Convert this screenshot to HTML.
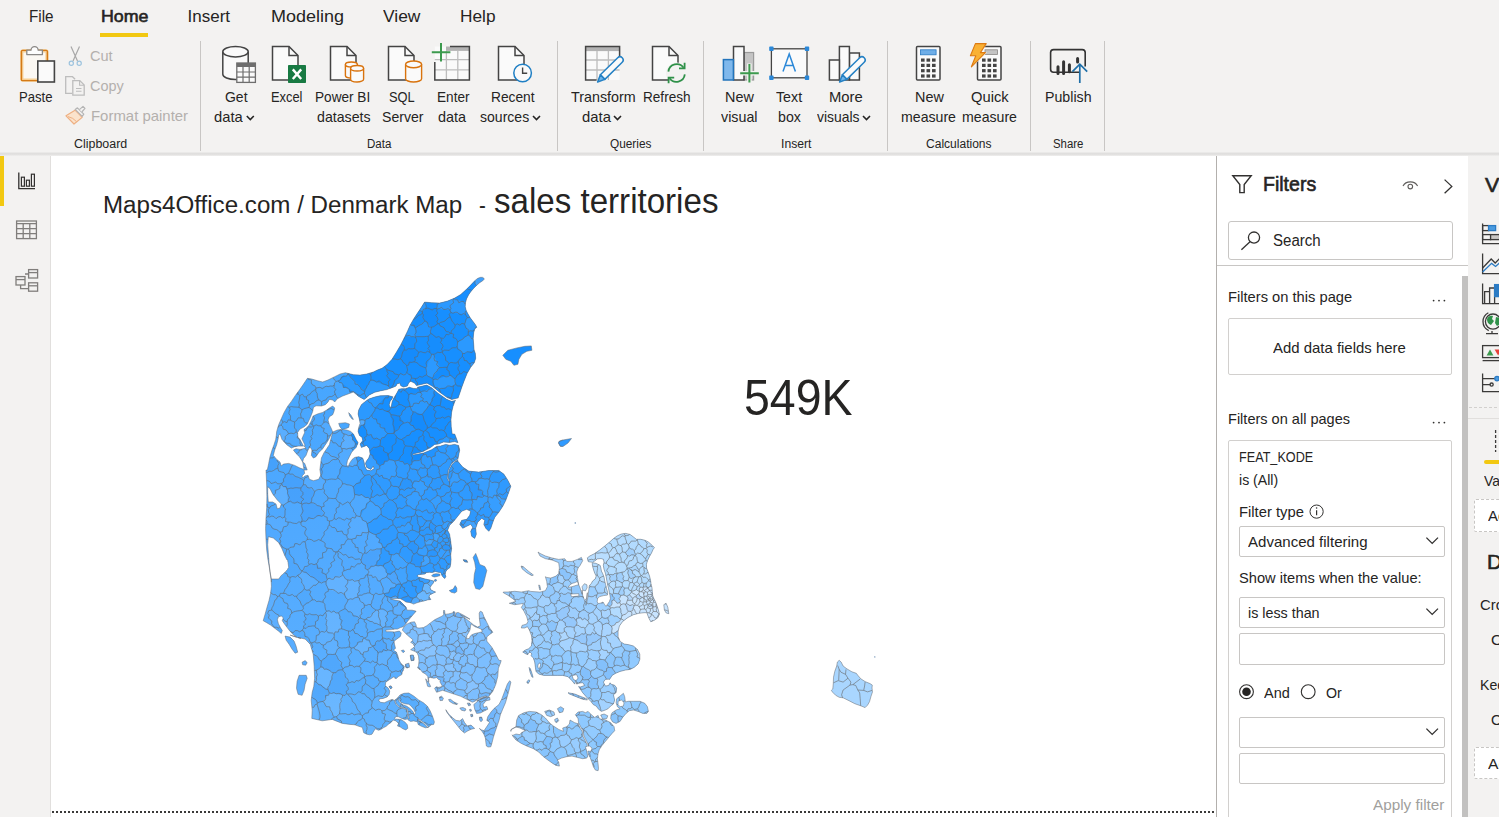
<!DOCTYPE html>
<html lang="en"><head><meta charset="utf-8"><title>Power BI Desktop - Denmark Map</title>
<style>
html,body{margin:0;padding:0}
body{width:1499px;height:817px;overflow:hidden;position:relative;background:#f3f2f1;font-family:"Liberation Sans",sans-serif;color:#252423}
.t{position:absolute;white-space:pre;transform-origin:0 0;display:block}
.abs{position:absolute}
svg{position:absolute;left:0;top:0;overflow:visible}
.box{position:absolute;box-sizing:border-box;background:#fff;border:1px solid #c8c6c4;border-radius:2px}
</style></head><body>

<div class="abs" id="ribbon" style="left:0;top:0;width:1499px;height:153px;background:#f3f2f1"></div>
<div class="abs" style="left:0;top:152px;width:1499px;height:4px;background:linear-gradient(#efeeed,#dddcdb 45%,#e6e5e4 75%,#f1f0ef)"></div>
<div class="abs" style="left:100px;top:33px;width:48px;height:4px;background:#f2c811"></div>
<div class="abs" style="left:200px;top:41px;width:1px;height:110px;background:#c8c6c4"></div>
<div class="abs" style="left:557px;top:41px;width:1px;height:110px;background:#c8c6c4"></div>
<div class="abs" style="left:703px;top:41px;width:1px;height:110px;background:#c8c6c4"></div>
<div class="abs" style="left:887px;top:41px;width:1px;height:110px;background:#c8c6c4"></div>
<div class="abs" style="left:1030px;top:41px;width:1px;height:110px;background:#c8c6c4"></div>
<div class="abs" style="left:1104px;top:41px;width:1px;height:110px;background:#c8c6c4"></div>
<span class="t" style="left:28.50px;top:6px;font-size:17px;line-height:22px;color:#252423;transform:scaleX(0.8950);">File</span>
<span class="t" style="left:100.50px;top:6px;font-size:17px;line-height:22px;color:#252423;-webkit-text-stroke:0.6px currentColor;transform:scaleX(1.0468);">Home</span>
<span class="t" style="left:187.50px;top:6px;font-size:17px;line-height:22px;color:#252423;transform:scaleX(1.0000);">Insert</span>
<span class="t" style="left:270.50px;top:6px;font-size:17px;line-height:22px;color:#252423;transform:scaleX(1.0580);">Modeling</span>
<span class="t" style="left:383.00px;top:6px;font-size:17px;line-height:22px;color:#252423;transform:scaleX(1.0239);">View</span>
<span class="t" style="left:459.50px;top:6px;font-size:17px;line-height:22px;color:#252423;transform:scaleX(1.0161);">Help</span>
<span class="t" style="left:18.60px;top:88px;font-size:14.3px;line-height:19px;color:#252423;transform:scaleX(0.9166);">Paste</span>
<span class="t" style="left:224.60px;top:88px;font-size:14.3px;line-height:19px;color:#252423;transform:scaleX(0.9766);">Get</span>
<span class="t" style="left:214.40px;top:108px;font-size:14.3px;line-height:19px;color:#252423;transform:scaleX(1.0306);">data</span>
<span class="t" style="left:270.60px;top:88px;font-size:14.3px;line-height:19px;color:#252423;transform:scaleX(0.9004);">Excel</span>
<span class="t" style="left:314.60px;top:88px;font-size:14.3px;line-height:19px;color:#252423;transform:scaleX(0.9514);">Power BI</span>
<span class="t" style="left:317.40px;top:108px;font-size:14.3px;line-height:19px;color:#252423;transform:scaleX(0.9912);">datasets</span>
<span class="t" style="left:389.40px;top:88px;font-size:14.3px;line-height:19px;color:#252423;transform:scaleX(0.8982);">SQL</span>
<span class="t" style="left:381.60px;top:108px;font-size:14.3px;line-height:19px;color:#252423;transform:scaleX(0.9857);">Server</span>
<span class="t" style="left:436.60px;top:88px;font-size:14.3px;line-height:19px;color:#252423;transform:scaleX(0.9512);">Enter</span>
<span class="t" style="left:438.40px;top:108px;font-size:14.3px;line-height:19px;color:#252423;transform:scaleX(1.0090);">data</span>
<span class="t" style="left:490.60px;top:88px;font-size:14.3px;line-height:19px;color:#252423;transform:scaleX(0.9618);">Recent</span>
<span class="t" style="left:480.40px;top:108px;font-size:14.3px;line-height:19px;color:#252423;transform:scaleX(0.9825);">sources</span>
<span class="t" style="left:571.40px;top:88px;font-size:14.3px;line-height:19px;color:#252423;transform:scaleX(1.0004);">Transform</span>
<span class="t" style="left:582.20px;top:108px;font-size:14.3px;line-height:19px;color:#252423;transform:scaleX(1.0378);">data</span>
<span class="t" style="left:642.60px;top:88px;font-size:14.3px;line-height:19px;color:#252423;transform:scaleX(0.9504);">Refresh</span>
<span class="t" style="left:724.60px;top:88px;font-size:14.3px;line-height:19px;color:#252423;transform:scaleX(1.0083);">New</span>
<span class="t" style="left:720.60px;top:108px;font-size:14.3px;line-height:19px;color:#252423;transform:scaleX(0.9990);">visual</span>
<span class="t" style="left:776.40px;top:88px;font-size:14.3px;line-height:19px;color:#252423;transform:scaleX(0.9952);">Text</span>
<span class="t" style="left:777.60px;top:108px;font-size:14.3px;line-height:19px;color:#252423;transform:scaleX(0.9913);">box</span>
<span class="t" style="left:828.60px;top:88px;font-size:14.3px;line-height:19px;color:#252423;transform:scaleX(1.0358);">More</span>
<span class="t" style="left:817.00px;top:108px;font-size:14.3px;line-height:19px;color:#252423;transform:scaleX(0.9733);">visuals</span>
<span class="t" style="left:914.60px;top:88px;font-size:14.3px;line-height:19px;color:#252423;transform:scaleX(1.0083);">New</span>
<span class="t" style="left:901.20px;top:108px;font-size:14.3px;line-height:19px;color:#252423;transform:scaleX(0.9885);">measure</span>
<span class="t" style="left:971.00px;top:88px;font-size:14.3px;line-height:19px;color:#252423;transform:scaleX(1.0301);">Quick</span>
<span class="t" style="left:962.40px;top:108px;font-size:14.3px;line-height:19px;color:#252423;transform:scaleX(0.9885);">measure</span>
<span class="t" style="left:1044.60px;top:88px;font-size:14.3px;line-height:19px;color:#252423;transform:scaleX(0.9925);">Publish</span>
<span class="t" style="left:90.40px;top:47px;font-size:14.3px;line-height:19px;color:#b3b0ad;transform:scaleX(1.0186);">Cut</span>
<span class="t" style="left:90.40px;top:77px;font-size:14.3px;line-height:19px;color:#b3b0ad;transform:scaleX(1.0105);">Copy</span>
<span class="t" style="left:90.60px;top:107px;font-size:14.3px;line-height:19px;color:#b3b0ad;transform:scaleX(1.0444);">Format painter</span>
<span class="t" style="left:73.60px;top:136px;font-size:12px;line-height:16px;color:#252423;transform:scaleX(1.0355);">Clipboard</span>
<span class="t" style="left:367.40px;top:136px;font-size:12px;line-height:16px;color:#252423;transform:scaleX(0.9616);">Data</span>
<span class="t" style="left:610.00px;top:136px;font-size:12px;line-height:16px;color:#252423;transform:scaleX(0.9857);">Queries</span>
<span class="t" style="left:780.60px;top:136px;font-size:12px;line-height:16px;color:#252423;transform:scaleX(1.0133);">Insert</span>
<span class="t" style="left:926.40px;top:136px;font-size:12px;line-height:16px;color:#252423;transform:scaleX(1.0034);">Calculations</span>
<span class="t" style="left:1052.60px;top:136px;font-size:12px;line-height:16px;color:#252423;transform:scaleX(0.9500);">Share</span>
<svg width="1499" height="160" viewBox="0 0 1499 160"><rect x="21.8" y="50.8" width="25.2" height="29.4" rx="1.2" fill="#fbf8f3" stroke="#f7cf94" stroke-width="3.2"/><rect x="21.4" y="50.4" width="26" height="30.2" rx="1.2" fill="none" stroke="#d47a17" stroke-width="1.4"/><path d="M26.8 54.6v-4.4h4.2a3.6 3.6 0 0 1 7.2 0h4.2v4.4z" fill="#fdfdfd" stroke="#8a8886" stroke-width="1.3" stroke-linejoin="round"/><rect x="37.8" y="61" width="16.6" height="21" fill="#fafafa" stroke="#444444" stroke-width="1.6"/><path d="M71 46.5L77.5 61M79.5 46.5L73 61" stroke="#a8a8a8" stroke-width="1.2" fill="none"/><circle cx="71.3" cy="63.3" r="2.1" fill="none" stroke="#9cc3de" stroke-width="1.2"/><circle cx="79.2" cy="63.3" r="2.1" fill="none" stroke="#9cc3de" stroke-width="1.2"/><path d="M72 93.3h-6.3v-16.6h6.8l2.6 2.6" fill="none" stroke="#bdbdbd" stroke-width="1.3"/><path d="M72.8 80.6h7l4.4 4.4v10.2h-11.4z" fill="#f3f2f1" stroke="#bdbdbd" stroke-width="1.3"/><path d="M79.6 80.8v4.4h4.4M76 88.5h5.5M76 91.3h5.5" fill="none" stroke="#bdbdbd" stroke-width="1.1"/><path d="M66 115.8l9-5.6l7.2 7.2l-8.2 6.6z" fill="#fbe3cc" stroke="#eeb083" stroke-width="1.2" stroke-linejoin="round"/><path d="M68 116.6q5 1 8.5 5" fill="none" stroke="#eeb083" stroke-width="1"/><path d="M75.2 109.4l2.2-1.6l6.4 6.4l-1.6 2.2z" fill="#f3f2f1" stroke="#b5b5b5" stroke-width="1.2" stroke-linejoin="round"/><path d="M79.4 109.6l3.6-3.2l2 2l-3.2 3.6" fill="#f3f2f1" stroke="#b5b5b5" stroke-width="1.2" stroke-linejoin="round"/><path d="M222.8 51.7v22.6a12.699999999999989 5.2 0 0 0 25.399999999999977 0v-22.6" fill="#fafafa" stroke="#444444" stroke-width="1.5"/><ellipse cx="235.5" cy="51.7" rx="12.699999999999989" ry="5.2" fill="#fafafa" stroke="#444444" stroke-width="1.5"/><rect x="236.8" y="63" width="18.6" height="19.4" fill="#fafafa" stroke="#6e6e6e" stroke-width="1.3"/><rect x="236.8" y="63" width="18.6" height="4" fill="#6e6e6e"/><path d="M243 67v15.4M249.2 67v15.4M236.8 72h18.6M236.8 77.2h18.6" stroke="#6e6e6e" stroke-width="1.2" fill="none"/><path d="M272.5 46.5h16.5l9 9v24.5h-25.5z" fill="#fafafa" stroke="#444444" stroke-width="1.5" stroke-linejoin="miter"/><path d="M289.0 46.5v9h9" fill="none" stroke="#444444" stroke-width="1.5"/><rect x="288" y="65" width="18" height="18" rx="0.8" fill="#187a43"/><path d="M292.8 69.4l8.4 9.6M301.2 69.4l-8.4 9.6" stroke="#fff" stroke-width="2.4" fill="none"/><path d="M330.5 46.5h16.5l9 9v24.5h-25.5z" fill="#fafafa" stroke="#444444" stroke-width="1.5" stroke-linejoin="miter"/><path d="M347.0 46.5v9h9" fill="none" stroke="#444444" stroke-width="1.5"/><path d="M345.4 64.52v10.96a6.0 2.52 0 0 0 12.0 0v-10.96" fill="#fafafa" stroke="#d9730d" stroke-width="1.4"/><ellipse cx="351.4" cy="64.52" rx="6.0" ry="2.52" fill="#fafafa" stroke="#d9730d" stroke-width="1.4"/><path d="M350.6 68.23v11.04a6.5 2.73 0 0 0 13.0 0v-11.04" fill="#fafafa" stroke="#d9730d" stroke-width="1.4"/><ellipse cx="357.1" cy="68.23" rx="6.5" ry="2.73" fill="#fafafa" stroke="#d9730d" stroke-width="1.4"/><path d="M388.5 46.5h16.5l9 9v24.5h-25.5z" fill="#fafafa" stroke="#444444" stroke-width="1.5" stroke-linejoin="miter"/><path d="M405.0 46.5v9h9" fill="none" stroke="#444444" stroke-width="1.5"/><path d="M405.6 64.36v14.280000000000001a8.0 3.36 0 0 0 16.0 0v-14.280000000000001" fill="#fafafa" stroke="#d9730d" stroke-width="1.4"/><ellipse cx="413.6" cy="64.36" rx="8.0" ry="3.36" fill="#fafafa" stroke="#d9730d" stroke-width="1.4"/><rect x="434.8" y="46.5" width="34.6" height="33.5" fill="#fafafa" stroke="none"/><rect x="446" y="46.5" width="23.4" height="4.4" fill="#b3b3b3"/><path d="M446.4 51v29M457.8 51v29M434.8 59.6h34.6M434.8 69.8h34.6" stroke="#bdbdbd" stroke-width="1.3" fill="none"/><path d="M450 46.5h19.4v33.5h-34.6v-18" fill="none" stroke="#444444" stroke-width="1.5"/><path d="M441 43v18.6M431.8 52.2h18.6" stroke="#3c9a4e" stroke-width="2" fill="none"/><path d="M498.5 46.5h16.5l9 9v24.5h-25.5z" fill="#fafafa" stroke="#444444" stroke-width="1.5" stroke-linejoin="miter"/><path d="M515.0 46.5v9h9" fill="none" stroke="#444444" stroke-width="1.5"/><circle cx="522.6" cy="73" r="8.8" fill="#fafafa" stroke="#1f7fc4" stroke-width="1.5"/><path d="M522.6 67.4v5.8h4.6" fill="none" stroke="#444444" stroke-width="1.4"/><rect x="585.6" y="46.5" width="34" height="33.5" fill="#fafafa"/><rect x="585.6" y="46.5" width="34" height="4.6" fill="#b3b3b3"/><path d="M597 51v29M608.4 51v29M585.6 60h34M585.6 70h34" stroke="#bdbdbd" stroke-width="1.3" fill="none"/><path d="M619.6 58v-11.500h-34v33.5h11" fill="none" stroke="#444444" stroke-width="1.5"/><path d="M600.35 74.81L617.73 57.72A3.2 3.2 0 0 1 622.22 62.28L604.84 79.37z" fill="#fafafa" stroke="#2581c4" stroke-width="1.5" stroke-linejoin="round"/><path d="M597.60 82.00L600.35 74.81L604.84 79.37z" fill="#6db3ea" stroke="#2581c4" stroke-width="1.5" stroke-linejoin="round"/><path d="M652.5 46.5h16.5l9 9v24.5h-25.5z" fill="#fafafa" stroke="#444444" stroke-width="1.5" stroke-linejoin="miter"/><path d="M669.0 46.5v9h9" fill="none" stroke="#444444" stroke-width="1.5"/><circle cx="676.6" cy="73" r="10.6" fill="#f3f2f1"/><path d="M668.4 71.600a8.4 8.4 0 0 1 15.2 -3.800" fill="none" stroke="#2f9149" stroke-width="1.8"/><path d="M684.8 74.400a8.400 8.400 0 0 1 -15.200 3.800" fill="none" stroke="#2f9149" stroke-width="1.8"/><path d="M684.600 62.800v5.600h-5.600" fill="none" stroke="#2f9149" stroke-width="1.8"/><path d="M668.600 83.200v-5.600h5.600" fill="none" stroke="#2f9149" stroke-width="1.8"/><rect x="744" y="52.500" width="9.600" height="27.500" fill="#c4c4c4" stroke="#9a9a9a" stroke-width="1.2"/><rect x="733.500" y="46.500" width="10.500" height="33.500" fill="#fafafa" stroke="#444444" stroke-width="1.5"/><rect x="723.400" y="59.600" width="10" height="20.400" fill="#7fb8ec" stroke="#2374bb" stroke-width="1.5"/><path d="M749.400 63.600v19.200M739.800 73.200h19.200" stroke="#f3f2f1" stroke-width="4.600" fill="none"/><path d="M749.400 64v18.600M740.200 73.200h18.600" stroke="#3c9a4e" stroke-width="2" fill="none"/><rect x="771.400" y="48.800" width="35.600" height="29" fill="#fafafa" stroke="#444444" stroke-width="1.300"/><rect x="769.1999999999999" y="46.599999999999994" width="4.400" height="4.400" rx="0.800" fill="#2b88d8"/><rect x="804.8" y="46.599999999999994" width="4.400" height="4.400" rx="0.800" fill="#2b88d8"/><rect x="769.1999999999999" y="75.6" width="4.400" height="4.400" rx="0.800" fill="#2b88d8"/><rect x="804.8" y="75.6" width="4.400" height="4.400" rx="0.800" fill="#2b88d8"/><path d="M783 71.400l6.200-17.400l6.200 17.400M785.200 65.600h8" fill="none" stroke="#2b88d8" stroke-width="1.500"/><rect x="849.400" y="53" width="10" height="27" fill="#fafafa" stroke="#444444" stroke-width="1.5"/><rect x="839.400" y="46.500" width="10" height="33.500" fill="#fafafa" stroke="#444444" stroke-width="1.5"/><rect x="829.400" y="60" width="10" height="20" fill="#fafafa" stroke="#444444" stroke-width="1.5"/><path d="M842.35 74.81L859.73 57.72A3.2 3.2 0 0 1 864.22 62.28L846.84 79.37z" fill="#fafafa" stroke="#2581c4" stroke-width="1.5" stroke-linejoin="round"/><path d="M839.60 82.00L842.35 74.81L846.84 79.37z" fill="#6db3ea" stroke="#2581c4" stroke-width="1.5" stroke-linejoin="round"/><rect x="916.5" y="46.5" width="23.5" height="33.5" rx="1" fill="#fafafa" stroke="#444444" stroke-width="1.5"/><rect x="920.500" y="49.800" width="15.600" height="5" fill="#6eaee8" stroke="#2b7bc4" stroke-width="0.800"/><rect x="921.0" y="58.5" width="3.6" height="3.2" fill="#444444"/><rect x="926.5" y="58.5" width="3.6" height="3.2" fill="#444444"/><rect x="932.0" y="58.5" width="3.6" height="3.2" fill="#444444"/><rect x="921.0" y="63.8" width="3.6" height="3.2" fill="#444444"/><rect x="926.5" y="63.8" width="3.6" height="3.2" fill="#444444"/><rect x="932.0" y="63.8" width="3.6" height="3.2" fill="#444444"/><rect x="921.0" y="69.1" width="3.6" height="3.2" fill="#444444"/><rect x="926.5" y="69.1" width="3.6" height="3.2" fill="#444444"/><rect x="932.0" y="69.1" width="3.6" height="3.2" fill="#444444"/><rect x="921.0" y="74.4" width="3.6" height="3.2" fill="#444444"/><rect x="926.5" y="74.4" width="3.6" height="3.2" fill="#444444"/><rect x="932.0" y="74.4" width="3.6" height="3.2" fill="#444444"/><rect x="977.5" y="46.5" width="23.5" height="33.5" rx="1" fill="#fafafa" stroke="#444444" stroke-width="1.5"/><rect x="985" y="49.800" width="12.600" height="4.600" fill="#c4c4c4" stroke="#8a8886" stroke-width="0.800"/><rect x="982.0" y="58.5" width="3.6" height="3.2" fill="#444444"/><rect x="987.5" y="58.5" width="3.6" height="3.2" fill="#444444"/><rect x="993.0" y="58.5" width="3.6" height="3.2" fill="#444444"/><rect x="982.0" y="63.8" width="3.6" height="3.2" fill="#444444"/><rect x="987.5" y="63.8" width="3.6" height="3.2" fill="#444444"/><rect x="993.0" y="63.8" width="3.6" height="3.2" fill="#444444"/><rect x="982.0" y="69.1" width="3.6" height="3.2" fill="#444444"/><rect x="987.5" y="69.1" width="3.6" height="3.2" fill="#444444"/><rect x="993.0" y="69.1" width="3.6" height="3.2" fill="#444444"/><rect x="982.0" y="74.4" width="3.6" height="3.2" fill="#444444"/><rect x="987.5" y="74.4" width="3.6" height="3.2" fill="#444444"/><rect x="993.0" y="74.4" width="3.6" height="3.2" fill="#444444"/><path d="M974 42h14l-6.500 10.500h5.500l-17 16.500l5-12.500h-6.500z" fill="#f3f2f1"/><path d="M975.400 43.600h10.800l-5.800 9h5l-14 14.200l4.400-11h-5.400z" fill="#f9b134" stroke="#dd7a12" stroke-width="1.100" stroke-linejoin="round"/><path d="M1079 72.200h-25.400a3 3 0 0 1 -3 -3v-16.600a3 3 0 0 1 3 -3h28.600a3 3 0 0 1 3 3v14" fill="none" stroke="#333" stroke-width="1.600"/><path d="M1058 66.800v6.600M1063.600 61.800v11.800M1069.400 64.800v7M1077.600 58.400v3.600" stroke="#333" stroke-width="3" stroke-linecap="round" fill="none"/><path d="M1079.800 83v-18.600M1072.400 71.600l7.400 -7.400l7.400 7.400" fill="none" stroke="#1f6fa8" stroke-width="1.700"/><path d="M246.8 116l3.5 3.5l3.5 -3.5" fill="none" stroke="#252423" stroke-width="1.6"/><path d="M533 116l3.5 3.5l3.5 -3.5" fill="none" stroke="#252423" stroke-width="1.6"/><path d="M614 116l3.5 3.5l3.5 -3.5" fill="none" stroke="#252423" stroke-width="1.6"/><path d="M863 116l3.5 3.5l3.5 -3.5" fill="none" stroke="#252423" stroke-width="1.6"/></svg>
<div class="abs" style="left:0;top:156px;width:50px;height:661px;background:#f3f2f1;border-right:1px solid #e1dfdd"></div>
<div class="abs" style="left:0;top:156px;width:4px;height:50px;background:#f2c811"></div>
<svg width="60" height="320" viewBox="0 0 60 320">
<path d="M18.800 172.600v16h16.200" fill="none" stroke="#323130" stroke-width="1.300"/>
<rect x="21.400" y="177.200" width="3" height="9" fill="none" stroke="#323130" stroke-width="1.200"/>
<rect x="26.400" y="180.200" width="3" height="6" fill="none" stroke="#323130" stroke-width="1.200"/>
<rect x="31.400" y="174.200" width="3" height="12" fill="none" stroke="#323130" stroke-width="1.200"/>
<g fill="none" stroke="#807e7c" stroke-width="1.300">
<rect x="16.600" y="221" width="19.800" height="17.600"/><path d="M16.600 223.600h19.800M16.600 228.600h19.800M16.600 233.600h19.800M23.200 223.600v15M29.800 223.600v15"/>
<rect x="28.600" y="269.600" width="9" height="8.400"/><path d="M28.600 272.600h9"/>
<rect x="16" y="276.600" width="9" height="8.400"/><path d="M16 279.600h9"/>
<rect x="28.600" y="282.800" width="9" height="8.400"/><path d="M28.600 285.800h9"/>
<path d="M25 274h3.600M20.600 285v3.600h8"/>
</g></svg>
<div class="abs" id="canvas" style="left:51px;top:156px;width:1165px;height:661px;background:#fff"></div>
<span class="t" style="left:103.40px;top:190px;font-size:23.5px;line-height:31px;color:#252423;transform:scaleX(1.0276);">Maps4Office.com / Denmark Map</span>
<span class="t" style="left:478.80px;top:190px;font-size:23.5px;line-height:31px;color:#252423;transform:scaleX(0.8704);">-</span>
<span class="t" style="left:494.00px;top:179px;font-size:34.5px;line-height:45px;color:#252423;transform:scaleX(0.9595);">sales territories</span>
<span class="t" style="left:743.80px;top:366px;font-size:50px;line-height:65px;color:#252423;transform:scaleX(0.9285);">549K</span>
<div class="abs" style="left:52px;top:811px;width:1163px;height:2px;background:repeating-linear-gradient(90deg,#3b3a39 0,#3b3a39 2px,transparent 2px,transparent 4px)"></div>
<svg id="map" width="1499" height="817" viewBox="0 0 1499 817">
<defs><linearGradient id="gj" x1="0" y1="370" x2="0" y2="735" gradientUnits="userSpaceOnUse"><stop offset="0" stop-color="#46A6FF"/><stop offset="0.45" stop-color="#50A9FF"/><stop offset="1" stop-color="#5EB1FF"/></linearGradient></defs>
<path d="M290.1 635.1L296.1 637.1L296.8 637.3L297.0 637.4L300.9 638.4L298.1 637.5L305.1 639.1L310.2 644.2L313.2 654.2L314.2 666.2L314.6 678.3L313.8 686.3L312.2 692.3L311.2 700.3L312.2 710.4L311.8 718.4L322.2 720.8L332.2 719.4L342.3 723.4L350.0 724.4L354.9 724.8L358.8 726.3L362.2 727.3L362.7 728.8L363.7 732.7L366.7 734.2L369.6 734.8L372.0 734.2L374.0 730.7L375.5 728.8L378.4 730.2L380.4 729.7L383.3 727.8L386.2 726.3L388.2 724.4L391.1 722.4L393.1 720.0L396.0 720.9L398.5 723.4L397.5 726.0L400.0 726.8L402.9 728.8L405.8 729.9L407.8 728.3L407.3 724.8L404.8 721.9L400.9 719.5L396.5 719.1L395.1 719.5L394.6 717.5L396.2 717.0L396.5 716.5L397.4 716.7L398.0 716.5L398.4 716.9L399.0 717.0L401.9 718.5L404.8 719.5L407.3 719.0L408.8 720.4L410.7 721.4L413.7 720.9L417.6 721.9L418.1 724.4L421.5 726.3L425.4 727.8L428.4 727.3L431.3 724.8L433.7 724.4L434.4 721.9L432.8 717.0L430.3 711.1L427.4 706.2L423.5 702.8L418.6 699.9L413.7 696.0L408.8 693.0L403.9 693.3L400.0 695.0L397.5 697.9L394.8 700.2L394.8 700.2L394.9 700.2L394.9 700.2L395.0 700.2L395.0 700.2L395.0 700.2L395.1 700.2L395.1 700.3L395.1 700.3L395.2 700.3L395.2 700.3L395.2 700.4L395.2 700.4L395.3 700.4L395.3 700.5L396.3 703.6L399.2 706.4L403.5 707.8L407.4 708.8L407.4 708.8L407.5 708.8L407.5 708.9L407.5 708.9L407.6 708.9L407.6 708.9L407.6 709.0L407.6 709.0L407.7 709.0L407.7 709.1L407.7 709.1L407.7 709.2L408.2 714.0L409.2 718.4L409.2 718.5L409.2 718.5L409.2 718.5L409.2 718.6L409.2 718.6L409.2 718.6L409.2 718.7L409.1 718.7L409.1 718.7L409.1 718.8L409.1 718.8L409.0 718.8L409.0 718.8L409.0 718.9L408.9 718.9L408.9 718.9L408.8 718.9L408.8 718.9L408.8 718.9L408.7 718.9L408.7 718.9L408.7 718.9L408.6 718.9L408.6 718.8L408.6 718.8L408.5 718.8L408.5 718.8L408.5 718.7L408.5 718.7L408.4 718.7L408.4 718.6L408.4 718.6L407.4 714.2L407.4 714.1L406.9 709.5L403.3 708.6L403.3 708.6L398.9 707.1L398.8 707.1L398.8 707.0L398.8 707.0L398.7 707.0L395.7 704.1L395.7 704.1L395.7 704.0L395.7 704.0L395.6 704.0L395.6 703.9L394.5 700.7L394.5 700.7L394.5 700.7L394.5 700.6L394.5 700.6L394.5 700.5L394.5 700.5L394.5 700.5L394.5 700.4L394.6 700.4L394.6 700.4L392.1 699.4L388.2 700.9L384.3 702.8L380.4 702.3L378.9 700.6L379.4 698.9L383.3 698.4L387.2 696.9L389.2 694.5L389.7 691.1L388.2 688.1L385.9 686.2L384.7 687.4L385.9 686.2L385.3 685.7L385.7 682.2L389.2 679.8L389.3 679.8L389.6 679.5L391.3 678.5L393.1 677.3L393.1 677.3L393.5 677.1L395.4 677.5L394.7 678.1L396.0 678.8L398.2 676.7L398.4 676.6L401.8 674.6L402.2 672.3L403.4 670.0L403.0 670.4L403.8 668.8L404.3 666.3L401.3 663.9L398.9 660.0L397.9 656.0L396.4 652.1L393.5 650.2L395.5 648.2L394.5 644.3L394.0 641.3L396.4 639.4L400.4 636.4L401.3 633.0L399.4 631.1L394.5 632.0L391.5 631.7L386.2 631.7L385.7 630.1L391.5 629.6L395.0 629.1L397.4 629.1L400.4 627.6L403.3 626.7L403.6 626.2L405.6 624.2L407.6 621.2L410.1 618.2L413.1 614.7L416.1 611.2L412.1 610.2L407.1 610.2L406.1 607.2L403.1 604.1L400.1 601.1L395.0 600.1L390.5 599.1L395.0 598.6L400.1 598.6L403.1 600.1L406.1 602.1L410.1 602.6L413.6 604.1L416.9 602.8L420.6 601.7L424.2 600.9L427.9 599.8L430.9 599.5L429.8 598.0L429.0 596.1L430.1 594.7L433.1 593.2L435.6 592.1L433.1 591.0L430.5 589.5L430.1 587.3L431.6 585.1L433.4 582.9L433.8 581.1L430.1 580.0L427.9 579.6L425.0 578.9L422.0 578.1L418.4 577.0L416.9 575.9L418.4 574.8L422.0 574.3L425.0 574.0L426.5 572.6L429.4 572.3L432.3 572.6L435.3 571.5L438.2 572.3L440.8 572.6L441.5 574.8L443.0 577.0L444.8 578.5L445.9 576.3L445.2 574.8L445.6 571.9L447.0 569.7L450.0 567.5L450.7 563.8L451.1 559.4L450.7 555.0L451.6 548.4L450.6 540.4L449.6 534.3L447.6 530.3L449.6 525.3L453.7 521.3L457.7 516.3L461.7 511.3L466.7 509.3L470.7 511.3L469.7 515.3L466.7 519.3L461.7 520.3L459.7 524.3L462.7 528.3L466.7 526.3L470.7 524.3L472.7 527.3L470.7 531.3L471.7 536.3L474.7 538.4L476.3 534.3L475.7 528.3L477.7 522.3L481.7 518.3L484.8 520.3L483.8 524.3L485.8 528.3L488.8 531.3L490.8 528.3L492.8 522.3L494.8 517.3L498.8 512.3L502.8 506.2L505.8 500.2L508.8 492.2L510.8 486.2L507.8 480.2L503.8 474.1L498.8 470.5L488.8 470.5L478.7 472.1L468.7 471.1L462.7 467.1L457.7 461.1L457.9 459.5L452.0 464.4L449.0 470.2L448.1 478.1L449.6 481.0L449.6 481.0L449.6 481.1L449.6 481.1L449.6 481.2L449.6 481.2L449.6 481.2L449.6 481.3L449.6 481.3L449.6 481.4L449.6 481.4L449.6 481.5L449.5 481.5L449.5 481.5L449.5 481.5L449.4 481.6L449.4 481.6L449.4 481.6L449.3 481.6L449.3 481.6L449.2 481.6L449.2 481.6L449.2 481.6L449.1 481.6L449.1 481.6L449.0 481.6L449.0 481.6L448.9 481.6L448.9 481.5L448.9 481.5L448.9 481.5L448.8 481.4L448.8 481.4L447.2 478.4L447.2 478.4L447.2 478.3L447.2 478.3L447.2 478.2L447.2 478.2L447.2 478.1L448.2 470.0L448.2 470.0L448.2 469.9L448.2 469.9L451.2 463.9L451.2 463.9L451.2 463.8L451.3 463.8L451.3 463.8L457.4 458.8L457.5 458.7L457.5 458.7L457.5 458.7L457.6 458.7L457.6 458.7L457.7 458.7L457.7 458.7L457.7 458.7L457.8 458.7L457.8 458.7L457.9 458.7L457.9 458.7L458.0 458.7L458.0 458.8L458.0 458.8L458.0 458.8L458.3 457.1L459.7 450.1L458.6 445.5L454.7 444.4L449.6 445.2L445.6 444.4L440.6 446.0L436.6 446.4L431.6 449.7L423.5 453.1L413.5 454.9L412.5 454.1L422.5 451.7L430.6 447.6L434.6 444.4L438.6 444.0L443.6 442.0L449.6 442.4L454.7 441.6L457.9 442.7L457.7 442.0L454.7 434.0L452.2 434.0L451.2 426.5L451.0 419.5L451.6 412.5L453.0 406.5L455.1 400.8L455.7 400.4L451.8 401.3L451.7 401.3L451.6 401.3L451.5 401.3L451.4 401.3L451.3 401.3L451.3 401.2L446.5 399.2L446.4 399.2L446.3 399.1L438.3 393.4L438.2 393.4L431.6 387.8L426.7 385.1L420.3 386.6L420.3 386.6L417.4 387.2L417.4 388.7L413.4 388.4L409.4 387.3L405.4 388.7L401.4 388.7L398.8 389.3L397.4 392.0L395.4 395.4L393.4 398.7L392.1 402.0L391.4 406.0L390.1 408.0L389.2 404.7L390.1 401.4L392.1 398.7L392.8 396.7L388.1 395.6L380.1 395.8L374.7 397.0L369.4 398.8L366.7 400.4L364.7 402.0L361.4 404.7L358.7 410.0L358.1 414.0L359.4 419.4L360.1 423.4L358.7 427.4L358.1 431.4L359.4 435.4L362.1 437.4L362.7 440.7L360.1 444.0L361.4 447.4L366.7 445.4L369.4 448.7L370.1 454.1L368.7 458.1L366.7 460.7L365.4 463.4L366.7 467.4L370.7 469.4L373.4 466.1L374.1 468.7L370.7 470.7L366.7 470.1L364.7 466.1L364.1 462.1L362.7 458.1L358.7 456.7L354.7 457.4L352.1 459.4L349.4 463.4L348.1 467.4L346.7 464.7L347.4 460.7L349.4 456.7L351.4 452.7L353.4 450.1L356.1 447.4L358.1 442.7L356.1 439.4L353.4 434.0L350.7 431.4L346.7 430.0L341.4 429.4L337.4 430.0L332.7 432.0L329.4 444.7L326.7 448.7L324.0 452.7L321.4 458.1L320.7 463.4L320.0 468.7L319.9 470.0L320.0 470.0L320.7 475.3L318.7 479.3L313.4 480.7L309.4 479.3L308.0 475.3L304.7 476.0L302.7 478.0L302.0 476.0L304.7 473.3L304.0 470.0L307.2 470.0L306.7 468.7L304.7 463.4L302.7 462.1L303.4 466.1L304.0 469.4L300.0 468.1L294.7 465.4L288.7 463.4L283.3 464.1L281.3 466.1L280.0 462.1L276.7 459.4L273.3 455.4L274.7 450.1L276.7 444.7L278.0 439.4L278.7 435.4L280.0 433.8L282.0 439.4L286.7 444.7L291.4 448.1L294.7 446.7L298.7 446.1L303.4 446.1L301.9 443.1L300.0 439.6L297.9 437.0L297.6 432.4L300.0 429.0L303.8 427.1L307.0 424.4L309.6 419.1L311.4 414.7L312.7 411.4L313.4 407.4L316.0 405.8L321.4 406.0L325.4 404.7L328.0 402.0L329.4 399.4L332.7 400.0L334.7 402.0L337.4 398.7L342.7 396.0L348.1 394.0L353.4 392.0L358.7 396.4L364.1 399.4L366.7 397.5L369.4 394.9L374.7 392.3L380.1 390.9L386.8 389.6L392.1 387.7L396.1 386.0L396.8 384.0L399.8 383.1L400.8 385.7L403.4 387.1L407.4 386.0L408.8 382.7L410.8 381.3L414.8 383.3L416.4 385.6L419.9 384.8L426.6 383.2L426.7 383.2L426.8 383.2L426.8 383.2L426.9 383.2L427.0 383.2L427.1 383.2L427.2 383.3L427.2 383.3L432.5 386.3L432.6 386.4L432.7 386.4L439.4 392.0L447.2 397.6L451.7 399.5L457.5 398.1L457.6 398.1L457.7 398.1L457.8 398.1L457.8 398.1L457.9 398.1L458.0 398.2L459.7 393.4L461.7 387.4L464.3 380.4L467.1 373.4L470.7 367.3L474.3 362.7L475.7 358.3L475.3 353.3L474.1 350.0L473.7 344.4L473.2 338.6L473.7 332.7L474.8 328.8L476.8 327.3L475.8 325.3L473.4 321.9L470.4 318.0L468.0 314.1L466.2 310.6L465.2 306.7L465.5 302.8L466.5 298.9L468.5 295.0L470.9 291.5L473.9 288.1L476.8 285.2L479.7 282.7L482.7 280.8L483.9 279.6L484.2 278.6L482.7 277.4L480.7 277.3L477.8 278.3L475.1 280.4L470.7 285.1L465.7 290.1L460.7 294.5L454.7 298.1L447.6 301.1L439.6 303.1L431.6 302.7L424.6 302.1L421.5 307.1L417.5 313.1L413.5 319.2L410.1 325.2L407.5 331.2L404.1 338.2L400.5 345.3L396.1 352.7L392.0 359.3L387.4 364.3L382.0 368.3L377.4 370.0L373.4 372.0L366.7 374.0L360.1 375.1L353.4 374.7L345.4 372.7L340.1 374.0L334.7 376.7L328.0 380.0L322.7 382.0L317.4 380.7L312.0 379.1L307.4 378.3L305.4 381.3L302.7 385.3L299.4 390.0L295.4 395.4L291.4 401.4L287.4 406.7L284.0 412.7L281.3 418.7L278.7 424.7L276.7 431.4L276.3 435.4L275.7 439.4L274.0 444.7L272.0 450.1L270.0 456.7L268.7 463.4L267.3 470.1L266.0 470.0L266.4 478.0L266.7 486.0L266.9 496.7L266.7 507.4L266.0 518.0L265.6 528.7L266.0 539.4L266.7 550.1L268.0 559.9L268.1 560.0L269.1 565.9L270.1 572.7L271.1 579.6L271.4 586.4L270.6 593.3L269.1 600.2L267.1 607.0L265.2 613.9L263.2 620.7L266.7 622.7L270.6 625.1L274.5 628.1L278.4 631.0L281.3 633.5L282.3 630.5L280.4 627.6L278.4 623.7L277.4 619.7L278.4 616.8L281.3 616.0L283.3 617.8L282.3 620.7L284.3 623.7L287.2 627.6L290.2 631.5L293.1 634.4L296.6 637.1ZM272.7 502.0L268.3 502.0L267.7 494.0L267.7 486.7L270.0 488.7L272.7 494.0L277.3 500.0L281.3 504.0L280.0 508.0L277.3 508.7L276.0 504.0ZM269.1 563.4L268.3 552.7L267.7 544.7L268.3 536.7L273.3 538.0L278.7 542.7L282.0 548.7L284.7 555.4L287.0 560.0L287.7 560.0L287.9 562.0L288.0 562.1L288.7 567.4L287.8 568.7L287.7 569.3L286.7 570.3L286.0 571.4L283.6 573.4L282.3 574.7L281.3 575.4L278.7 579.0L271.3 579.0L270.0 571.4ZM406.8 706.2L402.9 704.8L399.5 702.3L397.5 698.4L399.0 699.4L400.9 702.3L404.8 703.8L408.8 704.3L410.7 705.7L413.7 709.2L415.6 713.1L414.6 714.6L412.7 711.1L409.7 708.2ZM427.7 727.3L427.6 727.2L427.6 727.2L427.6 727.2L423.2 723.3L418.3 719.9L418.3 719.9L418.2 719.8L418.2 719.8L418.2 719.8L418.2 719.7L418.1 719.7L418.1 719.6L418.1 719.6L418.1 719.5L418.1 719.5L418.1 719.4L418.1 719.4L418.1 719.3L418.1 719.3L418.2 719.3L418.2 719.2L418.2 719.2L418.3 719.1L418.3 719.1L418.3 719.1L418.4 719.1L418.4 719.0L418.5 719.0L418.5 719.0L418.6 719.0L418.6 719.0L418.7 719.0L418.7 719.0L418.8 719.0L418.8 719.0L418.8 719.1L418.9 719.1L423.8 722.5L423.8 722.5L428.2 726.4L428.3 726.5L428.3 726.5L428.3 726.5L428.3 726.6L428.4 726.6L428.4 726.7L428.4 726.7L428.4 726.8L428.4 726.8L428.4 726.9L428.4 726.9L428.4 727.0L428.4 727.0L428.3 727.1L428.3 727.1L428.3 727.1L428.2 727.2L428.2 727.2L428.2 727.2L428.1 727.2L428.1 727.3L428.0 727.3L428.0 727.3L427.9 727.3L427.9 727.3L427.8 727.3L427.8 727.3L427.7 727.3ZM331.4 428.7L329.4 424.7L328.0 420.0L329.4 416.7L332.7 414.7L334.0 411.4L334.7 408.0L332.7 406.0L329.4 408.0L326.7 410.0L322.7 412.4L317.4 414.0L313.1 416.0L311.5 420.2L308.8 425.5L306.0 428.2L304.0 429.5L304.6 432.7L303.0 436.2L301.9 438.8L303.5 442.0L305.1 445.5L303.9 446.1L304.0 446.1L306.0 448.1L300.0 449.4L296.0 448.7L293.4 450.1L296.0 453.4L299.4 456.7L302.7 462.1L303.4 458.7L306.0 455.4L308.0 450.1L310.0 446.7L312.0 450.1L311.4 455.4L313.4 458.1L316.0 456.7L318.7 452.7L322.7 448.7L326.7 442.7L328.7 439.4L330.7 435.4L332.7 432.0Z" fill="url(#gj)" fill-rule="evenodd"/>
<path d="M429.2 581.9L427.3 583.0L424.1 583.4L424.0 583.4L424.0 583.4L424.0 583.4L424.0 583.4L424.0 583.4L424.0 583.4L424.0 583.4L424.0 583.4L424.0 583.4L423.9 583.5L423.9 583.5L423.9 583.5L423.2 585.9L422.3 588.2L422.3 588.3L422.3 588.3L422.3 588.3L422.3 590.8L420.1 592.3L417.6 593.6L417.6 593.6L417.6 593.6L417.6 593.7L417.5 593.7L417.5 593.7L417.5 593.7L417.5 593.7L416.1 597.0L416.1 597.0L416.1 597.0L416.1 597.0L416.1 597.0L416.1 597.0L416.1 597.0L416.1 597.1L416.1 597.1L416.1 597.1L416.1 597.1L416.1 597.1L416.1 597.1L416.1 597.1L416.1 597.1L418.0 598.4L419.5 600.1L419.5 600.2L419.5 600.2L419.5 600.2L419.5 600.2L419.5 600.2L419.5 600.2L419.5 600.2L419.6 600.2L419.6 600.2L419.6 600.2L421.6 600.0L423.1 601.1L424.2 600.9L427.9 599.8L430.9 599.5L429.8 598.0L429.0 596.1L430.1 594.7L433.1 593.2L435.6 592.1L433.1 591.0L430.5 589.5L430.1 587.3L431.6 585.1L433.4 582.9L433.8 581.1L430.1 580.0L429.2 579.8Z" fill="#5BB0FF" fill-rule="evenodd"/><path d="M347.6 373.9L346.4 376.0L343.5 375.9L343.5 375.9L343.5 376.0L343.5 376.0L343.4 376.0L343.4 376.0L341.3 377.1L341.3 377.1L341.3 377.1L341.3 377.2L341.3 377.2L341.3 377.2L341.3 377.2L341.3 377.2L340.2 379.7L338.1 380.8L338.1 380.8L338.1 380.8L338.1 380.8L338.1 380.8L338.1 380.9L338.1 380.9L338.0 380.9L338.0 380.9L338.0 380.9L338.0 380.9L338.0 380.9L338.0 381.0L338.0 381.0L338.0 381.0L338.0 381.0L338.1 381.0L338.1 381.0L338.1 381.0L339.4 382.6L339.4 382.6L339.4 382.6L339.4 382.7L339.4 382.7L339.5 382.7L339.5 382.7L339.5 382.7L341.6 383.0L342.7 384.7L343.2 387.5L343.2 387.5L343.3 387.5L343.3 387.5L343.3 387.5L343.3 387.6L343.3 387.6L343.3 387.6L343.3 387.6L343.3 387.6L343.3 387.6L343.3 387.6L343.4 387.6L343.4 387.6L343.4 387.6L345.8 387.6L347.7 388.3L349.1 389.7L349.7 392.3L349.7 392.3L349.7 392.3L349.7 392.3L349.7 392.3L349.7 392.3L349.7 392.4L349.7 392.4L349.7 392.4L349.7 392.4L349.8 392.4L349.8 392.4L349.8 392.4L349.8 392.4L349.8 392.4L349.8 392.4L349.8 392.4L349.9 392.4L352.8 391.6L354.6 392.5L356.2 393.6L357.5 394.7L356.7 394.8L358.7 396.4L364.1 399.4L366.7 397.5L369.4 394.9L374.7 392.3L380.1 390.9L386.8 389.6L392.1 387.7L396.1 386.0L396.8 384.0L399.8 383.1L400.8 385.7L403.4 387.1L407.4 386.0L408.8 382.7L410.8 381.3L414.8 383.3L416.4 385.6L419.9 384.8L426.6 383.2L426.7 383.2L426.8 383.2L426.8 383.2L426.9 383.2L427.0 383.2L427.1 383.2L427.2 383.3L427.2 383.3L432.5 386.3L432.6 386.4L432.7 386.4L439.4 392.0L447.2 397.6L451.7 399.5L457.5 398.1L457.6 398.1L457.7 398.1L457.8 398.1L457.8 398.1L457.9 398.1L458.0 398.2L459.7 393.4L461.7 387.4L464.3 380.4L467.1 373.4L470.7 367.3L474.3 362.7L475.7 358.3L475.3 353.3L474.1 350.0L473.7 344.4L473.2 338.6L473.7 332.7L474.8 328.8L476.8 327.3L475.8 325.3L473.4 321.9L470.4 318.0L468.0 314.1L466.2 310.6L465.2 306.7L465.5 302.8L466.5 298.9L468.5 295.0L470.9 291.5L473.9 288.1L476.7 285.3L475.1 283.7L475.2 281.5L475.2 281.5L475.2 281.5L475.2 281.5L475.0 280.5L470.7 285.1L465.7 290.1L460.7 294.5L454.7 298.1L447.6 301.1L439.6 303.1L431.6 302.7L424.6 302.1L421.5 307.1L417.5 313.1L413.5 319.2L410.1 325.2L407.5 331.2L404.1 338.2L400.5 345.3L396.1 352.7L392.0 359.3L387.4 364.3L382.0 368.3L377.4 370.0L373.4 372.0L366.7 374.0L360.1 375.1L353.4 374.7L347.6 373.3ZM361.1 419.9L363.1 420.0L364.9 420.6L364.5 423.4L363.3 424.9L360.9 425.1L360.9 425.1L360.8 425.1L360.8 425.2L360.8 425.2L360.8 425.2L360.8 425.2L360.8 425.2L360.8 425.2L360.8 425.2L360.8 425.2L359.8 427.2L358.8 429.0L358.5 429.1L358.1 431.4L359.4 435.4L362.1 437.4L362.7 440.7L360.9 443.0L362.8 443.6L363.8 445.6L363.8 445.6L364.2 446.3L366.7 445.4L369.4 448.7L370.1 454.1L370.1 454.2L370.5 454.7L370.6 454.7L370.6 454.7L370.6 454.7L370.6 454.7L372.7 455.6L372.9 458.1L372.9 458.1L372.9 458.1L372.9 458.2L372.9 458.2L372.9 458.2L372.9 458.2L372.9 458.2L373.0 458.2L374.6 459.6L374.7 459.6L376.5 460.8L376.5 463.4L376.5 463.5L376.5 463.5L376.5 463.5L376.5 463.5L376.5 463.5L376.5 463.5L376.5 463.5L376.5 463.6L376.5 463.6L376.5 463.6L376.6 463.6L378.7 464.6L379.6 466.5L379.6 466.5L379.6 466.6L379.6 466.6L379.6 466.6L379.6 466.6L379.6 466.6L379.6 466.6L379.7 466.6L379.7 466.6L379.7 466.6L379.7 466.6L379.7 466.6L379.7 466.6L379.7 466.6L379.8 466.6L379.8 466.6L379.8 466.6L379.8 466.6L379.8 466.6L379.8 466.6L381.4 464.9L383.8 464.3L383.8 464.3L383.8 464.3L383.9 464.3L383.9 464.3L383.9 464.3L383.9 464.3L383.9 464.3L383.9 464.3L383.9 464.2L383.9 464.2L383.9 464.2L384.6 461.4L387.3 461.3L387.4 461.3L387.4 461.3L387.4 461.3L387.4 461.3L387.4 461.3L387.4 461.3L387.4 461.3L389.2 459.8L392.0 460.2L394.8 461.1L394.8 461.1L394.8 461.1L394.8 461.1L394.8 461.1L394.8 461.1L398.5 460.4L400.5 461.6L400.5 461.6L400.5 461.7L400.5 461.7L400.5 461.7L400.5 461.7L403.0 461.8L404.3 464.4L404.3 464.4L404.3 464.4L404.3 464.4L404.4 464.4L404.4 464.5L404.4 464.5L404.4 464.5L404.4 464.5L404.4 464.5L404.4 464.5L404.5 464.5L404.5 464.5L404.5 464.5L404.5 464.5L407.5 463.5L409.1 465.3L409.2 465.3L409.2 465.3L409.2 465.3L409.2 465.3L409.2 465.3L409.2 465.3L409.2 465.4L409.2 465.4L409.3 465.4L409.3 465.4L409.3 465.3L411.6 464.8L411.6 464.8L411.7 464.8L411.7 464.7L411.7 464.7L411.7 464.7L411.7 464.7L411.7 464.7L411.7 464.7L411.7 464.7L411.7 464.7L411.7 464.7L411.7 464.6L412.2 462.3L414.1 460.9L416.6 460.8L416.6 460.8L419.1 460.6L419.1 460.6L419.2 460.6L419.2 460.6L419.2 460.6L419.2 460.6L419.2 460.6L421.2 458.9L421.2 458.9L421.2 458.9L421.2 458.9L421.2 458.9L421.2 458.9L421.2 458.8L421.9 456.5L423.8 454.9L426.0 454.5L427.0 457.3L427.0 457.3L427.0 457.3L427.0 457.3L427.0 457.3L427.0 457.3L427.1 457.3L427.1 457.4L427.1 457.4L427.1 457.4L427.1 457.4L427.1 457.4L427.1 457.4L427.2 457.4L427.2 457.4L427.2 457.4L429.6 456.7L431.2 457.8L431.2 457.8L431.3 457.8L431.3 457.8L431.3 457.8L431.3 457.8L431.3 457.8L431.3 457.8L431.3 457.8L431.4 457.8L431.4 457.8L431.4 457.8L433.2 456.8L435.3 456.1L435.3 456.1L435.3 456.1L435.3 456.1L435.4 456.1L435.4 456.1L435.4 456.0L435.4 456.0L435.4 456.0L435.4 456.0L435.4 456.0L435.4 456.0L435.4 456.0L435.4 456.0L435.4 453.0L436.9 451.8L438.8 451.0L440.5 452.7L440.5 452.7L440.5 452.7L440.5 452.7L440.6 452.7L440.6 452.7L440.6 452.7L442.9 453.1L442.9 453.1L445.2 453.5L445.2 453.5L445.2 453.5L445.3 453.5L445.3 453.5L445.3 453.4L445.3 453.4L445.3 453.4L445.3 453.4L445.3 453.4L445.3 453.4L445.4 453.4L446.7 451.5L446.7 451.5L446.7 451.4L446.7 451.4L446.7 451.4L446.7 451.4L446.7 451.4L446.7 451.4L446.7 451.4L446.7 451.3L446.0 448.7L447.6 447.0L447.6 447.0L447.6 447.0L447.6 446.9L448.6 445.0L445.6 444.4L440.6 446.0L436.6 446.4L431.6 449.7L423.5 453.1L413.5 454.9L412.5 454.1L422.5 451.7L430.6 447.6L434.6 444.4L438.6 444.0L443.6 442.0L449.5 442.4L449.6 440.4L450.7 438.5L453.5 439.8L453.5 439.8L453.5 439.8L453.5 439.8L453.5 439.8L453.5 439.8L453.5 439.8L453.6 439.8L453.6 439.8L453.6 439.8L453.6 439.8L453.6 439.8L456.1 438.0L456.2 438.0L454.7 434.0L452.2 434.0L451.2 426.5L451.0 419.5L451.6 412.5L453.0 406.5L455.1 400.8L455.7 400.4L451.8 401.3L451.7 401.3L451.6 401.3L451.5 401.3L451.4 401.3L451.3 401.3L451.3 401.2L446.5 399.2L446.4 399.2L446.3 399.1L438.3 393.4L438.2 393.4L431.6 387.8L426.7 385.1L420.3 386.6L420.3 386.6L417.4 387.2L417.4 388.7L413.4 388.4L409.4 387.3L405.4 388.7L401.4 388.7L398.8 389.3L397.4 392.0L395.4 395.4L393.4 398.7L392.1 402.0L391.4 406.0L390.1 408.0L389.2 404.7L390.1 401.4L392.1 398.7L392.8 396.7L388.1 395.6L380.1 395.8L374.7 397.0L369.4 398.8L366.7 400.4L364.7 402.0L361.4 404.7L358.7 410.0L358.1 414.0L359.4 419.4L359.6 420.6ZM352.2 433.8L352.2 433.8L352.2 433.8L352.2 433.8L352.2 433.8L350.7 435.2L350.7 435.2L350.7 435.2L350.7 435.2L350.7 435.2L350.7 435.3L350.7 435.3L350.7 435.3L350.7 435.3L350.7 435.3L350.7 435.3L350.7 435.4L350.7 435.4L350.7 435.4L350.7 435.4L350.7 435.4L350.7 435.4L352.5 437.2L352.4 440.0L352.4 440.0L352.4 440.0L352.4 440.0L352.4 440.0L352.4 440.1L352.4 440.1L352.4 440.1L352.4 440.1L352.4 440.1L352.4 440.1L354.6 441.7L355.4 444.0L355.4 444.1L355.4 444.1L355.4 444.1L355.4 444.1L355.4 444.1L355.4 444.1L355.4 444.1L355.4 444.1L355.5 444.1L355.5 444.1L355.5 444.1L355.5 444.1L357.5 444.2L358.1 442.7L356.1 439.4L353.4 434.0L352.9 433.5Z" fill="#178FFF" fill-rule="evenodd"/><path d="M355.5 443.8L355.5 443.8L355.5 443.8L355.5 443.9L355.4 443.9L355.4 443.9L355.4 443.9L355.4 443.9L355.4 443.9L355.4 443.9L355.4 443.9L355.4 443.9L355.4 443.9L354.4 447.1L351.3 447.9L351.2 448.0L351.2 448.0L351.2 448.0L351.2 448.0L351.2 448.0L351.2 448.0L351.2 448.0L351.2 448.0L351.2 448.0L351.1 448.0L351.1 448.1L351.1 448.1L351.1 448.1L351.1 448.1L351.1 448.1L351.1 448.1L351.2 448.1L351.2 448.2L351.2 448.2L351.2 448.2L352.5 449.9L352.9 450.8L353.4 450.1L356.1 447.4L357.6 443.9L355.5 443.8ZM356.2 457.8L356.8 459.9L356.8 459.9L357.6 461.9L356.7 465.2L354.7 465.0L354.7 465.0L354.7 465.0L354.7 465.0L354.7 465.0L354.7 465.1L354.6 465.1L354.6 465.1L352.7 466.5L350.7 465.9L348.8 465.4L348.1 467.4L347.3 465.9L346.5 466.3L344.5 466.0L342.5 465.4L342.4 465.4L342.4 465.4L342.4 465.4L342.4 465.4L342.4 465.4L342.4 465.4L342.4 465.4L342.3 465.5L342.3 465.5L342.3 465.5L342.3 465.5L342.3 465.5L342.3 465.5L341.0 467.4L341.0 467.4L339.8 469.3L339.8 469.4L339.8 469.4L339.8 469.4L339.8 469.4L339.8 469.4L339.7 471.8L339.5 474.0L337.8 475.7L337.7 475.7L337.7 475.7L337.7 475.7L337.7 475.7L337.7 475.7L337.7 475.7L337.7 475.8L337.7 475.8L337.7 478.1L337.7 478.1L337.7 478.2L337.7 478.2L337.7 478.2L337.7 478.2L337.7 478.2L337.7 478.2L337.7 478.2L337.7 478.2L337.7 478.3L337.7 478.3L340.0 479.6L341.7 481.3L342.4 483.9L342.4 483.9L342.4 483.9L342.4 483.9L342.5 483.9L342.5 484.0L342.5 484.0L342.5 484.0L342.5 484.0L342.5 484.0L342.5 484.0L342.5 484.0L342.6 484.0L342.6 484.0L344.8 484.0L346.8 484.9L346.8 484.9L346.9 484.9L346.9 484.9L346.9 484.9L349.1 485.1L351.2 485.6L353.1 486.8L353.9 489.3L354.1 491.9L354.1 491.9L354.6 494.5L354.6 494.5L354.6 494.5L354.6 494.5L354.6 494.6L354.6 494.6L354.6 494.6L354.6 494.6L354.7 494.6L354.7 494.6L354.7 494.6L354.7 494.6L354.7 494.6L354.7 494.6L357.0 495.0L359.2 495.5L359.2 495.5L359.2 495.5L359.2 495.5L359.3 495.5L359.3 495.5L359.3 495.5L361.8 494.7L363.6 496.5L363.6 496.5L363.6 496.5L363.6 496.5L365.7 497.6L365.7 497.6L365.7 497.7L365.7 497.7L365.7 497.7L365.7 497.7L365.7 497.7L368.1 497.5L369.8 499.3L370.1 500.9L368.4 502.2L366.6 503.5L366.6 503.5L366.6 503.5L366.6 503.5L366.6 503.5L366.5 503.6L366.5 503.6L366.5 503.6L366.0 505.8L366.0 505.8L365.7 508.0L363.6 509.0L363.6 509.0L361.5 510.1L361.5 510.1L361.5 510.2L361.5 510.2L361.5 510.2L361.5 510.2L361.4 510.2L361.4 510.2L361.4 510.2L360.8 512.3L360.8 512.4L360.8 512.4L360.7 514.8L359.6 516.5L359.6 516.5L359.6 516.5L359.5 516.5L359.5 516.5L359.5 516.5L359.5 516.6L359.5 516.6L359.5 516.6L359.5 516.6L359.6 516.6L359.6 516.6L359.6 516.6L359.6 516.7L359.6 516.7L359.6 516.7L359.6 516.7L359.6 516.7L359.6 516.7L361.6 517.5L362.1 519.9L362.1 519.9L362.1 519.9L362.1 519.9L362.1 519.9L362.1 519.9L362.1 520.0L362.1 520.0L362.1 520.0L362.1 520.0L364.0 521.0L364.0 521.0L364.0 521.0L366.1 521.7L366.9 523.7L367.4 526.3L367.4 526.3L368.1 528.8L368.6 531.4L368.6 531.4L368.6 531.4L368.6 531.4L368.6 531.4L368.6 531.4L368.6 531.4L368.6 531.4L368.7 531.5L368.7 531.5L368.7 531.5L371.0 532.9L371.0 532.9L373.3 534.1L373.3 534.1L373.4 534.1L375.9 534.8L376.1 536.9L376.1 536.9L376.1 536.9L376.1 536.9L376.1 537.0L376.1 537.0L376.1 537.0L376.1 537.0L376.1 537.0L376.1 537.0L376.1 537.0L378.2 538.2L379.7 539.6L378.6 542.5L378.6 542.5L378.6 542.5L378.6 542.5L378.6 542.5L378.6 542.5L378.6 542.5L378.6 542.6L378.6 542.6L378.6 542.6L378.6 542.6L378.6 542.6L378.6 542.6L378.6 542.6L378.7 542.6L378.7 542.6L378.7 542.6L378.7 542.7L381.3 543.5L382.0 545.4L382.0 545.4L382.7 547.2L381.1 548.6L381.1 548.6L381.1 548.6L381.1 548.7L381.1 548.7L381.0 548.7L381.0 548.7L381.0 548.7L381.0 548.7L380.8 551.0L380.8 551.0L380.8 551.0L381.0 553.3L379.4 555.0L379.4 555.1L379.4 555.1L379.4 555.1L379.4 555.1L379.4 555.1L379.4 555.1L379.4 555.1L379.4 555.2L379.4 555.2L379.8 557.6L379.2 559.6L376.9 561.1L376.9 561.1L376.9 561.2L376.9 561.2L376.9 561.2L376.9 561.2L376.9 561.2L376.8 561.2L376.8 561.2L376.8 561.2L376.6 563.4L375.5 565.4L375.5 565.4L375.5 565.4L375.4 565.4L375.4 565.4L375.4 565.4L375.4 565.5L375.4 565.5L375.5 565.5L375.5 565.5L375.5 565.5L375.5 565.5L375.5 565.5L375.5 565.5L375.5 565.6L375.5 565.6L375.5 565.6L375.5 565.6L375.6 565.6L375.6 565.6L378.1 566.1L378.1 566.1L378.1 566.1L378.1 566.1L378.1 566.1L380.7 565.6L383.1 566.2L384.3 568.0L384.3 568.0L385.8 569.7L385.9 572.2L385.9 572.3L385.9 572.3L385.9 572.3L385.9 572.3L385.9 572.3L386.0 572.3L386.0 572.3L386.0 572.3L387.8 573.9L387.8 573.9L387.8 573.9L387.8 573.9L387.8 573.9L387.8 573.9L390.6 574.5L390.6 574.5L390.6 574.5L390.6 574.5L390.6 574.5L390.6 574.5L390.7 574.5L390.7 574.5L390.7 574.5L390.7 574.4L390.7 574.4L390.7 574.4L392.4 572.3L394.5 571.6L395.4 573.3L395.4 573.3L396.5 575.0L397.2 576.8L397.3 579.0L397.3 579.0L397.3 579.0L397.3 579.0L397.3 579.0L397.3 579.0L397.3 579.0L397.3 579.1L397.3 579.1L398.8 580.6L399.9 582.3L400.4 584.0L398.4 583.8L398.4 583.8L398.4 583.8L398.3 583.9L398.3 583.9L398.3 583.9L396.3 584.7L396.3 584.7L396.3 584.7L396.2 584.7L396.2 584.7L396.2 584.7L396.2 584.7L396.2 584.8L396.2 584.8L395.2 587.0L393.2 587.8L390.7 587.9L390.7 587.9L390.6 587.9L390.6 588.0L390.6 588.0L390.6 588.0L390.6 588.0L390.6 588.0L390.6 588.0L390.6 588.0L390.6 588.0L390.5 588.0L389.5 590.2L389.5 590.2L389.5 590.3L388.7 592.7L386.3 592.9L386.3 592.9L386.2 592.9L384.1 593.6L384.1 593.6L384.0 593.6L384.0 593.6L384.0 593.7L384.0 593.7L384.0 593.7L384.0 593.7L384.0 593.7L384.0 593.7L384.0 593.7L384.0 593.7L384.0 593.8L384.0 593.8L384.0 593.8L384.0 593.8L384.0 593.8L384.0 593.8L384.8 595.5L384.8 595.6L384.8 595.6L384.9 595.6L384.9 595.6L384.9 595.6L384.9 595.6L386.5 596.6L386.5 596.6L386.5 596.6L386.5 596.6L388.7 597.1L390.8 597.9L390.8 597.9L390.9 597.9L390.9 597.9L390.9 597.9L390.9 597.9L390.9 597.9L390.9 597.9L390.9 597.9L393.3 596.7L395.6 596.0L397.5 598.0L398.0 598.6L400.1 598.6L403.1 600.1L406.1 602.1L410.1 602.6L411.1 603.0L411.1 602.5L412.0 600.2L413.3 598.2L416.3 597.2L416.3 597.2L416.3 597.1L416.3 597.1L416.3 597.1L416.3 597.1L416.4 597.1L416.4 597.1L416.4 597.1L417.8 593.9L420.2 592.6L420.2 592.6L422.5 591.0L422.5 591.0L422.5 591.0L422.5 590.9L422.5 590.9L422.6 590.9L422.6 590.9L422.6 590.9L422.6 590.9L422.6 590.9L422.6 588.3L423.5 586.0L423.5 586.0L424.2 583.7L427.4 583.3L427.4 583.3L427.4 583.3L427.4 583.3L427.4 583.3L429.4 582.1L429.5 582.1L429.5 582.1L429.5 582.1L429.5 582.1L429.5 582.1L429.5 582.1L429.5 582.1L429.5 582.1L429.5 582.0L429.5 582.0L429.5 582.0L429.5 579.9L427.9 579.6L425.0 578.9L422.0 578.1L418.4 577.0L416.9 575.9L418.4 574.8L422.0 574.3L425.0 574.0L426.5 572.6L429.4 572.3L432.3 572.6L435.3 571.5L438.2 572.3L440.8 572.6L441.5 574.8L443.0 577.0L444.8 578.5L445.9 576.3L445.2 574.8L445.6 571.9L447.0 569.7L450.0 567.5L450.7 563.8L451.1 559.4L450.7 555.0L451.6 548.4L450.6 540.4L449.6 534.3L447.6 530.3L449.6 525.3L453.7 521.3L457.7 516.3L461.7 511.3L466.7 509.3L470.7 511.3L469.7 515.3L466.7 519.3L461.7 520.3L459.7 524.3L462.7 528.3L466.7 526.3L470.7 524.3L472.7 527.3L470.7 531.3L471.7 536.3L474.7 538.4L476.3 534.3L475.7 528.3L477.7 522.3L481.7 518.3L484.8 520.3L483.8 524.3L485.8 528.3L488.8 531.3L490.8 528.3L492.8 522.3L494.8 517.3L498.8 512.3L502.8 506.2L505.8 500.2L508.8 492.2L510.8 486.2L507.8 480.2L503.8 474.1L498.8 470.5L488.8 470.5L478.7 472.1L468.7 471.1L462.7 467.1L457.7 461.1L457.9 459.5L452.0 464.4L449.0 470.2L448.1 478.1L449.6 481.0L449.6 481.0L449.6 481.1L449.6 481.1L449.6 481.2L449.6 481.2L449.6 481.2L449.6 481.3L449.6 481.3L449.6 481.4L449.6 481.4L449.6 481.5L449.5 481.5L449.5 481.5L449.5 481.5L449.4 481.6L449.4 481.6L449.4 481.6L449.3 481.6L449.3 481.6L449.2 481.6L449.2 481.6L449.2 481.6L449.1 481.6L449.1 481.6L449.0 481.6L449.0 481.6L448.9 481.6L448.9 481.5L448.9 481.5L448.9 481.5L448.8 481.4L448.8 481.4L447.2 478.4L447.2 478.4L447.2 478.3L447.2 478.3L447.2 478.2L447.2 478.2L447.2 478.1L448.2 470.0L448.2 470.0L448.2 469.9L448.2 469.9L451.2 463.9L451.2 463.9L451.2 463.8L451.3 463.8L451.3 463.8L457.4 458.8L457.5 458.7L457.5 458.7L457.5 458.7L457.6 458.7L457.6 458.7L457.7 458.7L457.7 458.7L457.7 458.7L457.8 458.7L457.8 458.7L457.9 458.7L457.9 458.7L458.0 458.7L458.0 458.8L458.0 458.8L458.0 458.8L458.3 457.1L459.7 450.1L458.6 445.5L454.7 444.4L449.6 445.2L448.3 444.9L447.4 446.8L445.8 448.6L445.8 448.6L445.7 448.6L445.7 448.6L445.7 448.7L445.7 448.7L445.7 448.7L445.7 448.7L445.7 448.7L445.7 448.7L445.7 448.7L446.4 451.4L445.2 453.1L442.9 452.8L440.7 452.4L438.9 450.7L438.9 450.7L438.9 450.7L438.9 450.7L438.9 450.6L438.9 450.6L438.9 450.6L438.9 450.6L438.8 450.6L438.8 450.6L438.8 450.6L438.8 450.6L438.8 450.6L436.8 451.5L436.8 451.5L436.8 451.5L436.8 451.5L435.1 452.8L435.1 452.8L435.1 452.8L435.1 452.8L435.1 452.8L435.1 452.8L435.1 452.9L435.1 452.9L435.1 452.9L435.1 452.9L435.1 455.8L433.1 456.5L433.1 456.5L433.0 456.5L431.3 457.5L429.7 456.4L429.7 456.4L429.6 456.4L429.6 456.4L429.6 456.4L429.6 456.4L429.6 456.4L429.6 456.4L429.6 456.4L429.5 456.4L427.2 457.0L426.2 454.3L426.2 454.3L426.2 454.2L426.2 454.2L426.2 454.2L426.2 454.2L426.2 454.2L426.2 454.2L426.1 454.2L426.1 454.2L426.1 454.2L426.1 454.2L426.1 454.2L426.1 454.2L426.1 454.2L423.7 454.6L423.7 454.6L423.7 454.6L423.7 454.6L423.7 454.7L423.6 454.7L421.7 456.3L421.7 456.3L421.7 456.3L421.7 456.3L421.6 456.3L421.6 456.3L421.6 456.3L420.9 458.7L419.1 460.3L416.6 460.5L414.0 460.6L414.0 460.6L414.0 460.6L414.0 460.6L414.0 460.6L414.0 460.6L413.9 460.6L411.9 462.1L411.9 462.1L411.9 462.1L411.9 462.2L411.9 462.2L411.9 462.2L411.9 462.2L411.9 462.2L411.9 462.2L411.5 464.5L409.3 465.0L407.6 463.2L407.6 463.2L407.6 463.2L407.6 463.2L407.6 463.2L407.6 463.1L407.6 463.1L407.6 463.1L407.5 463.1L407.5 463.1L407.5 463.1L407.5 463.1L407.5 463.1L404.5 464.1L403.2 461.6L403.2 461.6L403.2 461.6L403.2 461.6L403.2 461.6L403.2 461.6L403.1 461.6L403.1 461.5L403.1 461.5L403.1 461.5L403.1 461.5L400.6 461.4L398.6 460.1L398.6 460.1L398.6 460.1L398.6 460.1L398.6 460.1L398.5 460.1L398.5 460.1L398.5 460.1L398.5 460.1L394.8 460.8L392.1 459.9L392.1 459.9L392.0 459.9L389.1 459.5L389.1 459.5L389.1 459.5L389.1 459.5L389.1 459.5L389.1 459.5L389.0 459.5L389.0 459.5L389.0 459.6L387.3 461.0L384.5 461.1L384.5 461.1L384.5 461.1L384.5 461.1L384.5 461.1L384.4 461.1L384.4 461.1L384.4 461.1L384.4 461.1L384.4 461.2L384.4 461.2L384.4 461.2L384.4 461.2L384.4 461.2L383.7 464.1L381.3 464.6L381.3 464.6L381.3 464.6L381.3 464.6L381.3 464.6L381.2 464.7L381.2 464.7L379.8 466.2L378.9 464.4L378.9 464.4L378.9 464.4L378.9 464.4L378.9 464.4L378.9 464.3L378.9 464.3L378.9 464.3L376.8 463.4L376.8 460.8L376.8 460.8L376.8 460.7L376.7 460.7L376.7 460.7L376.7 460.7L376.7 460.7L376.7 460.7L376.7 460.7L376.7 460.7L376.7 460.6L374.8 459.4L373.2 458.0L373.0 455.5L373.0 455.5L373.0 455.5L373.0 455.5L373.0 455.5L373.0 455.5L373.0 455.4L373.0 455.4L373.0 455.4L373.0 455.4L373.0 455.4L373.0 455.4L370.7 454.4L370.1 453.8L370.1 454.1L368.7 458.1L366.7 460.7L365.4 463.4L366.7 467.4L370.7 469.4L373.4 466.1L374.1 468.7L370.7 470.7L366.7 470.1L364.7 466.1L364.1 462.1L362.7 458.1L358.7 456.7L355.8 457.2ZM399.6 601.8L399.6 601.9L399.6 601.9L399.6 601.9L400.6 604.0L400.6 604.1L400.6 604.1L400.6 604.1L400.6 604.1L400.6 604.1L400.6 604.1L402.5 605.3L402.5 605.3L404.4 606.5L406.1 607.9L406.1 607.9L406.1 607.9L406.1 607.9L406.1 607.9L406.2 607.9L406.2 607.9L406.2 607.9L406.2 607.9L406.2 607.9L406.3 607.9L406.1 607.2L403.1 604.1L400.1 601.1L399.5 601.0ZM456.1 437.6L456.0 437.6L456.0 437.6L456.0 437.6L456.0 437.6L456.0 437.7L456.0 437.7L456.0 437.7L453.5 439.5L450.7 438.2L450.7 438.2L450.7 438.2L450.7 438.2L450.6 438.2L450.6 438.2L450.6 438.2L450.6 438.2L450.6 438.2L450.6 438.2L450.6 438.2L450.6 438.2L450.5 438.2L450.5 438.3L450.5 438.3L450.5 438.3L449.4 440.3L449.3 440.3L449.3 440.3L449.3 440.3L449.3 440.3L449.3 440.3L449.2 442.4L449.6 442.4L454.7 441.6L457.9 442.7L457.7 442.0L456.1 437.6ZM364.1 445.4L363.0 443.4L363.0 443.4L363.0 443.4L363.0 443.3L363.0 443.3L363.0 443.3L362.9 443.3L362.9 443.3L362.9 443.3L361.1 442.8L360.1 444.0L361.4 447.4L364.5 446.2Z" fill="#2F9AFF" fill-rule="evenodd"/><path d="M449.7 550.0L446.7 550.3L441.3 558.2L443.8 559.0L450.8 554.3L450.8 554.3ZM348.3 539.1L346.7 535.1L350.8 519.1L356.1 515.7L359.7 516.6L367.1 523.7L368.7 531.3L351.7 539.3ZM266.0 518.4L265.9 520.4L266.9 523.8L279.9 532.3L288.2 522.1L284.5 517.0L267.6 516.6ZM320.7 447.3L312.1 450.6L316.4 456.1L318.7 452.7L322.7 448.7L322.7 448.7ZM323.3 464.8L337.8 458.9L337.8 458.7L325.5 450.5L324.0 452.7L321.4 458.1L320.9 461.8ZM266.9 523.8L265.9 520.4L265.7 525.8ZM472.0 499.8L484.3 495.6L487.5 496.7L488.1 497.2L487.9 501.0L477.3 513.0L472.3 509.2L471.9 499.9ZM409.5 423.0L403.5 423.2L393.9 433.1L393.8 433.4L396.9 437.3L401.5 439.6L416.1 429.5ZM375.6 565.4L383.2 566.1L387.9 573.8L386.5 577.0L380.0 581.1L367.5 574.4L367.4 569.6ZM392.9 610.9L397.4 615.2L400.7 615.2L406.2 607.8L399.7 601.8L393.2 608.2ZM405.0 390.5L406.0 388.5L405.4 388.7L401.4 388.7L398.8 389.3L397.9 391.0ZM407.8 385.1L408.8 382.7L409.2 382.4L411.5 378.0L406.7 372.4L399.0 375.2L391.8 387.8L392.1 387.7L396.1 386.0L396.8 384.0L399.8 383.1L400.8 385.7L403.4 387.1L407.3 386.0ZM490.0 480.7L499.1 483.1L496.3 495.6L488.1 497.2L487.5 496.7ZM348.1 599.8L345.0 608.6L359.4 618.4L360.7 618.2L364.3 605.1L357.2 597.2ZM475.5 481.8L484.3 495.6L487.5 496.7L490.0 480.7L489.2 479.4L481.0 478.1ZM498.8 512.3L498.8 512.3L502.0 507.4L496.6 495.7L496.3 495.6L488.1 497.2L487.9 501.0L492.6 512.0ZM303.8 480.7L303.3 484.7L314.7 491.5L323.2 488.5L325.1 479.7L321.1 475.7L320.5 475.7L318.7 479.3L313.4 480.7L309.4 479.3L308.2 475.8ZM421.1 496.3L414.6 491.5L412.9 487.6L412.8 483.6L420.3 479.6L428.1 487.3ZM391.3 650.6L393.4 652.8L386.2 665.7L377.6 663.2L376.9 662.3L378.0 653.2L388.0 649.9ZM421.8 571.9L420.0 567.1L420.0 567.1L410.0 562.9L408.5 563.3L406.5 566.5L407.7 580.6L411.4 581.3L419.1 578.4L419.6 577.4L418.4 577.0L416.9 575.9L418.4 574.8L420.8 574.5ZM379.9 445.9L380.6 440.2L366.9 434.0L362.9 443.5L364.6 446.2L366.7 445.4L369.4 448.7L369.6 450.5ZM370.2 501.0L370.0 499.2L371.2 497.1L385.7 494.2L385.9 494.2L389.6 499.7L380.7 509.0ZM297.4 433.1L296.1 432.0L288.5 433.8L283.7 440.9L298.6 446.1L298.7 446.1L301.7 446.1L299.2 438.6L297.9 437.0L297.7 434.1ZM425.0 321.0L431.5 327.2L430.7 333.5L428.3 336.3L415.8 336.8L415.2 328.0ZM413.0 411.7L409.5 423.0L403.5 423.2L399.5 416.0L405.9 407.2L409.9 406.4L410.0 406.4ZM441.7 500.7L435.7 509.4L430.0 501.3L436.9 495.6L440.6 496.9ZM357.7 461.9L356.8 465.4L364.8 475.5L371.5 476.4L372.0 476.2L375.7 473.8L379.7 466.5L370.1 454.0L370.1 454.1L368.7 458.1L366.7 460.7L365.4 463.4L366.7 467.4L370.7 469.4L373.4 466.1L374.1 468.7L370.7 470.7L366.7 470.1L364.7 466.1L364.1 462.1L362.7 458.1L361.6 457.7ZM465.5 314.5L467.4 317.7L470.2 317.7L468.0 314.1L466.2 310.6L466.1 310.3ZM339.8 429.6L337.4 430.0L332.7 432.0L332.2 433.9L340.3 430.2ZM323.8 422.4L320.9 425.8L327.5 436.1L331.3 434.3L332.7 432.0L331.4 428.7L329.4 424.7L328.6 422.2ZM396.8 713.5L386.9 708.6L382.0 710.9L385.4 721.0L391.5 721.9L393.1 720.0L396.0 720.9L398.0 722.9L398.9 723.0L399.8 720.7L399.2 719.4L396.5 719.1L395.1 719.5L394.6 717.5L396.2 717.0L396.5 716.5L397.4 716.7L398.0 716.5L398.1 716.6ZM426.8 555.5L424.0 556.0L417.0 552.4L418.2 549.3L425.3 545.6L427.9 551.3ZM448.8 486.4L453.3 471.7L457.9 473.7L460.7 479.5L448.9 486.6ZM271.6 610.1L267.7 613.3L274.3 627.3L280.8 628.2L280.4 627.6L278.4 623.7L277.4 619.7L278.4 616.8L279.9 616.4ZM287.1 621.8L283.0 618.7L282.3 620.7L284.3 623.7L286.9 627.3ZM389.0 480.1L375.7 473.8L379.7 466.5L389.1 459.7L394.8 461.0L396.2 475.2ZM383.2 566.1L387.9 573.8L394.6 571.4L396.1 568.9L390.4 560.1ZM449.1 564.1L444.3 570.1L443.8 573.6L445.3 574.1L445.6 571.9L447.0 569.7L450.0 567.5L450.6 564.1ZM351.3 448.1L341.8 448.8L337.8 458.7L337.8 458.9L342.4 465.6L347.1 465.5L346.7 464.7L347.4 460.7L349.4 456.7L351.4 452.7L352.7 451.0ZM356.8 465.4L357.7 461.9L355.6 457.2L354.7 457.4L352.1 459.4L349.4 463.4L348.7 465.5ZM450.6 548.5L449.7 550.0L450.8 554.3L451.6 548.4L451.6 548.3ZM393.2 640.2L394.0 641.3L394.0 641.3L396.4 639.4L400.4 636.4L401.3 633.0L399.4 631.1L394.5 632.0L394.3 632.0ZM430.0 580.0L427.9 579.6L425.0 578.9L422.0 578.1L419.6 577.4L419.1 578.4L424.1 583.5L427.3 583.2ZM421.8 571.9L420.8 574.5L422.0 574.3L425.0 574.0L426.4 572.7ZM421.1 496.3L414.6 491.5L405.5 497.6L407.5 505.8L415.7 509.6L421.8 498.9ZM319.7 632.6L314.8 641.8L323.4 645.1L334.1 637.2L334.3 634.6L326.6 630.5ZM506.6 491.7L508.4 493.2L508.8 492.2L510.8 486.2L509.5 483.7ZM442.1 547.9L446.7 550.3L441.3 558.2L440.1 558.2L437.7 554.9L437.5 552.8ZM423.5 454.0L423.7 454.8L431.3 457.7L438.8 450.8L437.1 447.7L434.8 447.6L431.6 449.7L424.3 452.8ZM427.7 447.2L426.1 449.9L430.6 447.6L430.8 447.4ZM341.7 430.4L344.0 433.9L350.8 435.3L352.9 433.5L350.7 431.4L346.7 430.0L342.2 429.5ZM364.7 423.5L365.1 420.5L359.3 419.1L359.4 419.4L360.1 423.4L358.7 427.4L358.5 428.8ZM400.1 697.6L401.8 694.9L401.8 694.2L400.0 695.0L397.5 697.9L396.3 698.9L397.6 698.5L397.5 698.4L397.6 698.5ZM392.1 700.4L393.4 699.9L392.1 699.4L391.2 699.7ZM384.3 694.6L387.3 696.8L389.2 694.5L389.7 691.1L388.2 688.1L386.7 686.8ZM277.4 596.4L270.7 592.1L270.6 593.3L269.1 600.2L267.1 607.0L265.2 613.8L267.7 613.3L271.6 610.1ZM384.3 694.6L374.6 697.7L372.2 701.4L372.0 707.6L382.0 710.9L386.9 708.6L392.1 700.4L391.2 699.7L388.2 700.9L384.3 702.8L380.4 702.3L378.9 700.6L379.4 698.9L383.3 698.4L387.2 696.9L387.3 696.8ZM335.2 654.1L339.7 647.7L334.1 637.2L323.4 645.1L327.8 654.4ZM379.5 728.9L366.4 723.1L366.5 734.1L366.7 734.2L369.6 734.8L372.0 734.2L374.0 730.7L375.5 728.8L378.4 730.2L379.4 730.0ZM390.9 414.7L386.6 411.3L375.3 408.1L371.7 415.1L387.8 433.5L393.8 433.4L393.9 433.1ZM321.7 401.7L319.0 400.0L309.8 405.0L309.0 407.4L312.8 411.0L313.4 407.4L316.0 405.8L321.4 406.0L322.8 405.6ZM358.0 596.2L357.2 597.2L364.3 605.1L370.8 604.7L373.8 595.0L369.9 593.0ZM444.5 529.3L441.9 525.5L442.7 521.5L451.8 522.1L451.9 522.5ZM398.3 532.4L403.9 533.1L412.5 530.1L409.9 522.2L396.2 528.3ZM297.8 575.2L302.0 570.9L302.2 570.9L319.2 582.0L308.6 590.1L304.4 588.9Z" fill="#ffffff" fill-opacity="0.045"/><path d="M439.2 389.1L453.7 385.6L455.7 384.1L455.0 378.7L450.0 375.2L433.2 379.7L434.5 386.5L435.2 387.4ZM420.5 392.5L420.5 392.5L422.6 400.8L429.8 404.8L430.1 404.8L434.4 390.2L431.6 387.8L431.5 387.8ZM435.2 387.4L434.5 386.5L433.4 387.0L434.9 388.3ZM344.0 433.9L350.8 435.3L355.5 444.0L351.3 448.1L341.8 448.8L340.7 446.5ZM316.9 704.0L311.8 706.5L312.2 710.4L311.8 718.4L318.4 719.9ZM271.4 579.0L271.3 579.0L270.0 571.4L269.1 563.4L269.1 563.3L268.6 562.9L269.1 565.9L270.1 572.7L271.1 579.3ZM395.4 653.2L398.7 659.3L397.9 656.0L396.6 652.7ZM403.3 667.6L404.1 667.4L404.3 666.3L401.3 663.9L401.1 663.6ZM422.4 311.7L425.8 308.6L425.9 302.2L424.6 302.1L421.5 307.1L419.5 310.0ZM437.4 541.7L439.7 536.4L436.6 533.5L434.6 533.1L433.5 533.5L433.6 539.6L434.0 540.2ZM465.5 314.5L466.1 310.3L465.2 306.7L465.5 302.8L465.6 302.4L453.8 298.6L450.0 310.1L450.9 312.4ZM334.3 385.0L336.2 381.5L333.3 377.4L328.0 380.0L322.7 382.0L317.4 380.7L312.0 379.1L308.5 378.5L316.0 388.0ZM365.1 420.5L371.7 415.1L375.3 408.1L375.3 407.9L368.8 399.2L366.7 400.4L364.7 402.0L361.4 404.7L358.7 410.0L358.1 414.0L359.3 419.1ZM364.4 393.4L357.8 394.7L357.2 395.2L358.7 396.4L364.1 399.4L366.7 397.5L367.2 397.0ZM327.3 579.5L326.1 581.7L328.2 589.1L344.7 594.9L347.6 579.9L342.8 574.9ZM281.0 425.0L278.1 426.8L276.7 431.4L276.5 433.7L278.3 437.5L278.7 435.4L280.0 433.8L282.0 439.4L283.4 441.0L283.7 440.9L288.5 433.8ZM434.0 540.2L433.6 539.6L424.6 540.2L425.5 545.2L431.2 544.9ZM464.0 527.7L466.7 526.3L470.7 524.3L472.7 527.3L471.3 530.1L475.9 527.8L476.5 526.0L474.6 521.3L466.8 520.3L462.9 525.0ZM398.1 716.6L398.4 716.9L399.0 717.0L401.9 718.5L402.8 718.8L407.8 715.7L407.4 714.2L407.4 714.1L406.9 709.5L403.3 708.6L403.3 708.6L399.7 707.4L396.8 713.5ZM399.8 720.7L401.3 719.8L400.9 719.5L399.2 719.4ZM411.3 713.5L407.8 710.0L408.2 714.0L408.5 715.3ZM402.1 704.2L401.5 703.8L400.1 706.7L403.5 707.8L406.4 708.5ZM468.1 335.0L457.6 342.6L457.2 346.4L462.5 353.4L474.1 349.9L473.7 344.4L473.2 338.6L473.2 338.3ZM338.2 380.9L347.8 373.9L348.1 373.8L364.7 391.8L364.4 393.4L357.8 394.7ZM375.3 407.9L386.5 395.6L380.1 395.8L374.7 397.0L369.4 398.8L368.8 399.2ZM388.5 386.2L370.8 380.2L364.7 391.8L364.4 393.4L367.2 397.0L369.4 394.9L374.7 392.3L380.1 390.9L386.8 389.6L390.5 388.3ZM359.7 516.6L370.2 501.0L380.7 509.0L381.1 513.8L367.1 523.7ZM333.5 672.7L327.9 689.4L316.0 681.8L316.7 670.0L320.8 667.0ZM453.8 298.6L453.8 298.5L447.6 301.1L439.6 303.1L437.7 303.0L436.5 308.5L437.1 308.9L450.0 310.1ZM296.0 453.4L299.4 456.7L302.7 462.1L303.4 458.7L306.0 455.4L308.0 450.1L308.6 449.1L304.7 448.4L301.2 449.1ZM292.6 464.9L294.6 465.4L292.6 464.7ZM306.6 468.4L304.7 463.4L302.7 462.1L303.4 466.1L303.7 467.7ZM427.3 583.2L424.1 583.5L422.4 590.8L431.6 593.9L432.4 593.5L433.1 593.2L435.6 592.1L433.1 591.0L430.5 589.5L430.1 587.3L430.9 586.2ZM356.8 465.4L348.7 465.5L348.1 467.4L347.1 465.5L342.4 465.6L337.8 478.1L342.6 483.9L353.2 486.7L364.8 475.5ZM467.4 317.7L464.6 324.1L468.3 331.9L475.6 328.2L476.8 327.3L475.8 325.3L473.4 321.9L470.4 318.0L470.2 317.7ZM437.1 447.7L438.8 450.8L445.2 453.3L448.3 444.9L445.6 444.4L440.6 446.0L437.2 446.3ZM450.6 438.4L446.7 436.4L437.3 442.1L437.2 444.1L438.6 444.0L443.6 442.0L449.2 442.4ZM336.6 716.5L339.5 713.9L342.6 695.1L329.3 693.0L322.5 701.5L334.6 717.0ZM387.8 433.5L371.7 415.1L365.1 420.5L364.7 423.5L366.9 434.0L380.6 440.2ZM413.0 411.7L422.1 414.3L429.8 404.8L422.6 400.8L410.0 406.4ZM283.7 505.0L288.2 502.0L286.9 489.0L282.0 484.5L273.9 494.8L274.4 496.2L277.3 500.0L281.3 504.0L281.2 504.3ZM398.8 554.0L408.5 563.3L406.5 566.5L396.1 568.9L390.4 560.1L391.4 554.6ZM380.3 609.1L378.0 610.2L380.6 625.3L382.7 627.7L384.7 627.0L387.4 612.0ZM410.0 406.4L409.9 406.4L408.8 394.9L420.5 392.5L422.6 400.8ZM405.1 336.2L415.4 337.1L415.8 336.8L415.2 328.0L410.6 324.4L410.1 325.2L407.5 331.2L405.1 336.0ZM400.6 584.2L401.8 584.5L407.7 580.6L406.5 566.5L396.1 568.9L394.6 571.4ZM432.2 378.3L426.5 374.9L425.8 367.9L431.7 354.2L433.2 354.3L439.8 367.7ZM469.9 363.8L470.2 368.2L470.7 367.3L474.3 362.7L474.5 362.2ZM347.6 579.9L359.1 580.5L358.0 596.2L357.2 597.2L348.1 599.8L344.7 594.9ZM281.0 425.0L282.7 422.4L281.0 419.3L278.7 424.7L278.1 426.8ZM380.6 625.3L366.1 619.2L375.8 610.0L378.0 610.2ZM372.7 645.9L363.0 654.5L354.1 647.7L364.5 638.2L364.9 638.1ZM497.7 495.7L496.6 495.7L502.0 507.4L502.8 506.2L505.8 500.2L505.9 499.9ZM428.7 557.1L429.8 562.9L420.0 567.1L420.0 567.1L424.0 556.0L426.8 555.5ZM431.6 593.9L422.4 590.8L417.7 593.8L416.2 597.0L419.6 600.0L424.1 600.9L424.2 600.9L427.9 599.8L428.5 599.7L429.6 597.6L429.0 596.1L430.1 594.7L431.6 593.9ZM325.6 612.4L326.6 611.3L338.4 612.8L341.5 628.8L334.3 634.6L326.6 630.5Z" fill="#ffffff" fill-opacity="0.09"/><path d="M438.2 466.5L433.0 465.0L427.5 468.8L427.6 474.0L432.4 478.5L440.2 477.2L440.4 476.3ZM415.1 612.4L416.1 611.2L412.9 610.4ZM419.6 600.0L416.2 597.0L413.2 598.1L411.0 603.0L413.6 604.1L416.9 602.8L419.7 602.0ZM315.7 389.2L319.0 400.0L309.8 405.0L306.5 396.9ZM462.9 525.0L462.3 524.9L460.5 525.4L462.7 528.3L464.0 527.7ZM318.4 616.0L305.0 614.0L303.8 628.0L314.9 626.0ZM381.0 681.5L373.3 674.5L364.4 677.3L364.3 677.5L365.4 683.3L374.1 688.6ZM462.3 524.9L462.9 525.0L466.8 520.3L466.4 519.4L461.7 520.3L460.5 522.7ZM302.0 570.9L288.4 549.1L286.7 549.1L285.4 556.9L287.0 560.0L287.7 560.0L287.9 562.0L288.0 562.1L288.7 567.4L287.8 568.7L287.7 569.3L286.7 570.3L286.0 571.4L284.5 572.7L290.2 577.3L297.8 575.2ZM406.4 708.5L407.4 708.8L407.4 708.8L407.5 708.8L407.5 708.9L407.5 708.9L407.6 708.9L407.6 708.9L407.6 709.0L407.6 709.0L407.7 709.0L407.7 709.1L407.7 709.1L407.7 709.2L407.8 710.0L411.3 713.5L413.4 713.5L413.7 713.0L412.7 711.1L409.7 708.2L406.8 706.2L402.9 704.8L402.1 704.2ZM418.7 702.6L401.8 694.9L400.1 697.6L401.3 702.4L404.8 703.8L408.8 704.3L410.7 705.7L413.7 709.2L414.6 711.1ZM304.4 588.9L308.6 590.1L312.4 599.9L302.9 606.4L296.5 596.1ZM430.1 404.8L434.5 407.1L440.0 405.7L443.1 396.9L438.3 393.4L438.2 393.4L434.4 390.2ZM439.2 389.1L435.2 387.4L434.9 388.3L439.4 392.0L441.6 393.6ZM428.3 336.3L429.8 352.5L431.7 354.2L433.2 354.3L442.2 351.9L442.7 351.3L440.7 337.9L430.7 333.5ZM359.4 618.4L345.0 608.6L338.4 612.8L341.5 628.8L348.5 631.0L352.3 629.7ZM438.3 542.8L437.4 541.7L434.0 540.2L431.2 544.9L434.5 548.2ZM273.8 627.6L274.5 628.1L278.4 631.0L281.3 633.5L282.3 630.5L280.8 628.2L274.3 627.3ZM506.6 491.7L497.7 495.7L505.9 499.9L508.4 493.2ZM493.4 471.5L489.2 479.4L490.0 480.7L499.1 483.1L506.1 477.6L503.8 474.1L500.4 471.6ZM455.3 456.7L458.4 456.5L459.7 450.1L458.6 445.8ZM419.3 532.0L419.7 529.7L416.9 515.4L415.4 513.3L411.6 516.6L409.9 522.2L412.5 530.1L419.2 532.3ZM466.8 520.3L474.6 521.3L477.5 513.6L477.3 513.0L472.3 509.2L468.9 510.4L470.7 511.3L469.7 515.3L466.7 519.3L466.4 519.4ZM474.6 521.3L476.5 526.0L477.7 522.3L481.7 518.3L484.8 520.3L483.8 524.3L484.8 526.2L489.1 519.6L488.9 517.6L477.5 513.6ZM364.5 638.2L352.3 629.7L348.5 631.0L349.8 647.1L351.3 648.0L354.1 647.7ZM435.6 489.7L444.1 484.1L440.2 477.2L432.4 478.5L429.1 486.9ZM364.3 677.5L347.9 682.9L346.6 693.6L347.8 694.2L360.4 692.1L365.4 683.3ZM290.1 631.3L290.2 631.5L293.1 634.4L296.6 637.1L290.1 635.1L296.1 637.1L296.8 637.3L297.0 637.4L300.9 638.4L298.1 637.5L305.1 639.1L309.4 643.4L310.9 642.7L302.0 630.3ZM432.8 533.3L429.3 527.1L419.3 532.0L419.2 532.3L419.8 534.3L422.1 535.8ZM429.8 404.8L430.1 404.8L434.5 407.1L436.2 418.6L430.7 426.6L427.3 428.2L422.1 414.3ZM440.4 476.3L440.2 477.2L444.1 484.1L448.8 486.4L453.3 471.7L452.4 470.6L448.8 472.3L448.1 478.1L449.6 481.0L449.6 481.0L449.6 481.1L449.6 481.1L449.6 481.2L449.6 481.2L449.6 481.2L449.6 481.3L449.6 481.3L449.6 481.4L449.6 481.4L449.6 481.5L449.5 481.5L449.5 481.5L449.5 481.5L449.4 481.6L449.4 481.6L449.4 481.6L449.3 481.6L449.3 481.6L449.2 481.6L449.2 481.6L449.2 481.6L449.1 481.6L449.1 481.6L449.0 481.6L449.0 481.6L448.9 481.6L448.9 481.5L448.9 481.5L448.9 481.5L448.8 481.4L448.8 481.4L447.2 478.4L447.2 478.4L447.2 478.3L447.2 478.3L447.2 478.2L447.2 478.2L447.2 478.1L447.8 472.7ZM391.3 650.6L393.4 652.8L395.4 653.2L396.6 652.7L396.4 652.1L393.5 650.2L395.5 648.2L394.5 644.3L394.0 641.4ZM374.1 688.6L374.6 697.7L372.2 701.4L360.4 692.1L365.4 683.3ZM404.2 350.0L414.6 348.4L415.4 337.1L405.1 336.2L405.1 336.2L404.1 338.2L401.3 343.7ZM458.2 361.6L448.9 363.7L447.2 367.3L450.0 375.2L455.0 378.7L459.4 373.9ZM433.2 379.7L450.0 375.2L447.2 367.3L439.8 367.7L432.2 378.3ZM399.0 375.2L386.7 369.5L388.5 386.2L390.5 388.3L391.8 387.8ZM336.6 716.5L334.6 717.0L332.4 719.5L342.3 723.4L342.8 723.5ZM470.6 474.1L472.0 481.3L475.5 481.8L481.0 478.1L482.0 471.6L478.7 472.1L472.3 471.5ZM434.5 386.5L433.2 379.7L432.2 378.3L426.5 374.9L415.3 378.5L417.8 385.3L419.9 384.8L426.6 383.2L426.7 383.2L426.8 383.2L426.8 383.2L426.9 383.2L427.0 383.2L427.1 383.2L427.2 383.3L427.2 383.3L432.5 386.3L432.6 386.4L432.7 386.4L433.4 387.0ZM420.5 392.5L431.5 387.8L426.7 385.1L420.3 386.6L420.3 386.6L418.5 387.0ZM415.2 328.0L425.0 321.0L422.3 313.2L414.4 317.8L413.5 319.2L410.6 324.4Z" fill="#0a6fe0" fill-opacity="0.05"/><path d="M399.9 489.9L412.9 487.6L412.8 483.6L407.4 477.5L403.1 478.7L398.5 487.1ZM311.9 450.6L311.4 455.4L313.4 458.1L316.0 456.7L316.4 456.1L312.1 450.6ZM321.1 475.7L323.3 464.8L320.9 461.8L320.7 463.4L320.0 468.7L319.9 470.0L320.0 470.0L320.7 475.3L320.5 475.7ZM327.9 689.4L316.0 681.8L314.1 682.8L313.8 686.3L312.2 692.3L311.6 697.2L317.4 703.2L322.5 701.5L329.3 693.0ZM346.6 693.6L342.6 695.1L329.3 693.0L327.9 689.4L333.5 672.7L342.5 669.8L347.9 682.9ZM362.9 554.5L361.0 560.2L361.6 562.3L367.4 569.6L375.6 565.4L381.2 548.7L364.4 553.0ZM437.9 323.7L431.5 327.2L425.0 321.0L422.3 313.2L422.4 311.7L425.8 308.6L436.5 308.5L437.1 308.9ZM369.6 450.5L370.1 454.0L379.7 466.5L389.1 459.7L388.0 455.6L379.9 445.9ZM386.5 577.0L396.3 584.8L400.6 584.2L394.6 571.4L387.9 573.8ZM413.0 411.7L409.5 423.0L416.1 429.5L423.6 431.5L425.7 430.3L427.3 428.2L422.1 414.3ZM326.1 574.5L316.5 563.7L309.0 564.4L302.2 570.9L319.2 582.0L326.1 581.7L327.3 579.5ZM399.7 601.8L406.2 607.8L406.3 607.7L406.1 607.2L403.1 604.1L400.1 601.1L399.6 601.0ZM413.2 598.1L408.4 595.6L401.2 599.2L403.1 600.1L406.1 602.1L410.1 602.6L411.0 603.0ZM403.3 667.6L400.1 670.8L401.7 674.7L401.8 674.6L402.2 672.3L403.4 670.0L403.0 670.4L403.8 668.8L404.1 667.4ZM342.5 669.8L333.5 672.7L320.8 667.0L321.4 661.1L327.8 654.4L335.2 654.1L343.0 669.1ZM442.1 547.3L445.8 544.5L449.5 546.0L450.6 548.5L449.7 550.0L446.7 550.3L442.1 547.9ZM404.2 619.2L405.5 624.3L405.6 624.2L407.6 621.2L410.1 618.2L411.4 616.7ZM434.6 533.1L436.5 526.3L431.1 521.6L429.3 527.1L432.8 533.3L433.5 533.5ZM437.5 552.8L437.7 554.9L428.7 557.1L426.8 555.5L427.9 551.3L434.8 550.0ZM301.9 504.3L301.2 522.1L323.4 515.3L321.5 507.1L311.0 502.7ZM417.0 552.4L414.3 554.0L410.0 562.9L420.0 567.1L424.0 556.0ZM313.0 653.6L313.2 654.2L314.2 666.2L314.3 669.5L316.7 670.0L320.8 667.0L321.4 661.1ZM277.9 468.1L277.2 459.8L276.7 459.4L274.8 457.1L269.5 459.2L268.7 463.4L267.3 470.1L266.0 470.0L266.1 472.2ZM301.0 487.9L286.9 489.0L282.0 484.5L281.7 483.3L285.3 474.8L288.4 473.4L303.8 480.7L303.3 484.7ZM382.6 637.8L382.6 637.8L372.8 645.9L378.0 653.2L388.0 649.9ZM414.6 348.4L404.2 350.0L400.3 358.9L406.5 365.5L413.8 361.8L418.7 352.3ZM464.9 468.8L470.6 474.1L472.3 471.5L468.7 471.1L464.9 468.6ZM400.3 358.9L404.2 350.0L401.3 343.7L400.5 345.3L396.1 352.7L392.2 358.9ZM477.0 285.1L479.7 282.7L482.7 280.8L483.9 279.6L484.2 278.6L482.7 277.4L480.7 277.3L477.8 278.3L475.8 279.8ZM301.5 503.9L301.0 487.9L303.3 484.7L314.7 491.5L311.0 502.7L301.9 504.3ZM472.0 499.8L484.3 495.6L475.5 481.8L472.0 481.3L468.2 483.4L467.7 484.6ZM299.8 395.7L298.8 407.3L302.0 409.9L309.0 407.4L309.8 405.0L306.5 396.9ZM456.1 437.8L456.1 437.8L456.1 437.6ZM417.0 552.4L414.3 554.0L406.6 546.3L411.1 541.6L414.3 541.0L418.2 549.3ZM489.1 519.6L484.8 526.2L485.8 528.3L488.8 531.3L490.8 528.3L492.8 522.3L492.9 522.0ZM390.9 414.7L393.9 433.1L403.5 423.2L399.5 416.0ZM301.5 503.9L288.2 502.0L286.9 489.0L301.0 487.9ZM412.0 462.3L421.1 458.8L423.7 454.8L423.5 454.0L422.6 453.3L413.5 454.9L412.7 454.2ZM414.4 446.8L413.2 447.1L412.7 454.1L421.0 452.1Z" fill="#0a6fe0" fill-opacity="0.1"/><path d="M319.1 719.9L319.9 717.8L320.0 715.8L319.7 713.8L319.3 711.8L318.8 709.9L318.2 707.9L317.6 706.0L316.9 704.0M312.1 707.1L313.9 707.3L315.0 704.8L316.9 704.0M385.7 494.2L384.0 492.9L383.2 491.0L381.9 489.3L380.4 488.0L379.7 485.8L378.0 484.6L376.5 483.2L376.0 480.9L374.5 479.5L373.1 478.0L372.0 476.2M385.7 494.2L383.5 494.0L381.6 495.1L379.6 495.9L377.2 494.5L375.3 495.8L373.4 497.3L371.2 497.1M372.0 476.2L371.5 476.4M371.2 497.1L371.1 495.1L371.9 493.0L372.6 490.9L371.0 488.8L371.3 486.8L372.8 484.7L372.2 482.6L371.2 480.5L371.3 478.5L371.5 476.4M356.8 465.4L354.7 465.2L352.7 466.6L350.6 466.1L348.9 465.6M347.2 466.1L346.5 466.4L344.5 466.2L342.4 465.6M356.8 465.4L358.5 466.8L358.8 469.3L361.4 470.0L362.2 472.1L363.0 474.2L364.8 475.5M342.4 465.6L341.2 467.5L340.0 469.4L339.9 471.8L339.7 474.1L337.9 475.8L337.8 478.1M337.8 478.1L340.1 479.5L341.8 481.3L342.6 483.9M342.6 483.9L344.9 483.8L346.9 484.8L349.1 485.0L351.3 485.5L353.2 486.7M353.2 486.7L354.8 485.5L356.0 483.8L358.2 483.2L360.4 482.6L360.5 479.8L362.1 478.5L363.7 477.2L364.8 475.5M316.9 704.0L317.4 703.2M311.8 697.1L312.6 698.0L314.9 699.1L316.7 700.7L317.4 703.2M316.7 670.0L316.6 672.4L317.4 674.8L316.3 677.1L316.6 679.5L316.0 681.8M316.7 670.0L314.5 670.6M316.0 681.8L314.5 681.8M348.5 631.0L346.1 630.4L343.8 629.4L341.5 628.8M348.5 631.0L348.5 633.0L348.3 635.1L349.9 637.0L348.5 639.1L349.1 641.1L349.8 643.1L349.2 645.1L349.8 647.1M339.7 647.7L341.8 648.1L343.8 647.8L345.8 647.9L347.8 647.1L349.8 647.1M339.7 647.7L337.6 646.1L337.9 643.3L337.3 640.9L334.4 639.8L334.1 637.2M334.1 637.2L334.3 634.6M341.5 628.8L338.9 629.3L338.2 632.1L335.0 631.9L334.3 634.6M323.4 645.1L325.6 644.3L326.8 642.2L329.2 641.7L331.3 640.9L332.5 638.8L334.1 637.2M323.4 645.1L323.2 647.5L324.6 649.1L327.0 650.2L326.5 652.7L327.8 654.4M339.7 647.7L337.4 649.2L336.4 651.7L335.2 654.1M327.8 654.4L330.2 654.3L332.7 654.5L335.2 654.1M316.7 670.0L318.9 668.8L320.8 667.0M316.0 681.8L317.4 683.3L318.8 684.8L321.1 684.9L322.4 686.7L324.1 687.8L325.7 689.1L327.9 689.4M327.9 689.4L327.9 687.1L329.5 685.3L330.1 683.2L330.5 681.0L332.0 679.2L331.8 676.8L332.5 674.7L333.5 672.7M320.8 667.0L322.9 667.1L324.1 669.3L326.4 669.0L328.3 669.7L330.0 670.7L331.6 672.2L333.5 672.7M313.4 654.0L314.2 654.8L316.4 655.9L318.2 657.4L319.3 659.8L321.4 661.1M320.8 667.0L321.0 664.0L321.4 661.1M379.7 466.5L381.3 464.8L383.8 464.2L384.5 461.2L387.3 461.2L389.1 459.7M379.7 466.5L379.8 468.9L376.7 469.6L376.5 471.9L375.7 473.8M375.7 473.8L377.9 474.2L379.1 476.6L382.1 475.2L383.0 478.0L385.2 478.3L387.3 478.8L389.0 480.1M389.1 459.7L392.0 460.0L394.8 461.0M394.8 461.0L395.3 463.0L396.1 465.0L397.2 466.9L396.4 469.0L395.9 471.1L396.8 473.1L396.2 475.2M396.2 475.2L394.7 477.0L391.5 476.1L390.6 478.7L389.0 480.1M385.9 494.2L385.7 494.2M385.9 494.2L386.9 492.3L387.3 490.1L388.7 488.5L390.4 487.1L391.1 485.0M372.0 476.2L374.2 475.5L375.7 473.8M391.1 485.0L390.6 482.3L389.0 480.1M288.4 473.4L290.4 474.2L292.8 474.0L294.3 475.8L296.2 476.7L298.3 477.3L300.2 478.3L302.2 479.1L303.8 480.7M288.4 473.4L289.5 471.3L290.5 469.1L291.4 466.9L292.6 464.9M308.1 476.2L307.5 477.0L304.6 477.9L303.8 480.7M306.3 468.3L304.9 467.7L303.8 467.0M370.8 380.2L369.3 381.9L368.7 384.1L367.1 385.7L366.4 387.8L365.1 389.6L364.7 391.8M370.8 380.2L371.1 377.3L370.6 374.5M370.6 374.5L368.9 373.6M364.7 391.8L363.1 390.5L361.3 389.4L360.4 387.5L359.0 386.0L357.6 384.5L355.1 384.1L354.8 381.5L353.4 380.1L351.9 378.6L350.5 377.2L349.3 375.5L348.1 373.8M348.4 373.7L348.1 373.8M337.8 478.1L335.8 479.4L333.6 479.2L331.5 479.0L329.4 479.3L327.3 479.9L325.1 479.7M342.6 483.9L341.6 485.6L340.7 487.4L338.6 488.6L338.6 490.8L338.1 492.8L337.0 494.5L336.7 496.6L335.7 498.4M335.7 498.4L333.2 498.6L330.6 498.3L328.1 498.0M325.1 479.7L325.7 482.1L323.8 484.0L323.3 486.2L323.2 488.5M328.1 498.0L327.2 496.0L325.5 494.5L324.1 492.8L324.5 490.2L323.2 488.5M269.9 458.2L271.0 457.9L273.1 457.8L274.2 456.7M266.3 472.6L267.1 472.5L269.1 471.3L271.6 471.3L273.7 470.4L275.7 469.0L277.9 468.1M277.0 459.9L277.1 461.0L279.0 463.3L277.8 465.8L277.9 468.1M274.9 449.0L274.5 449.0L273.3 447.1M288.4 473.4L285.3 474.8M285.3 474.8L283.9 472.6L281.2 471.9L278.6 471.1L277.9 468.1M409.3 465.2L410.1 467.4M409.3 465.2L411.6 464.6L412.0 462.3M410.1 467.4L411.7 469.2L414.0 469.1L416.0 469.6M412.0 462.3L414.0 460.7L416.6 460.7L419.1 460.5L421.1 458.8M416.0 469.6L418.5 470.3L420.4 467.6L422.9 468.3L425.2 467.8M425.2 467.8L424.6 465.3L421.8 463.9L421.1 461.5L421.1 458.8M413.2 447.1L412.9 449.3L412.2 451.4L411.1 453.5L411.3 455.7L412.6 457.9L411.7 460.1L412.0 462.3M413.2 447.1L410.7 446.3L408.1 446.2L405.5 445.8M398.5 460.3L399.7 458.6L400.4 456.7L401.9 455.2L403.3 453.7L403.3 451.5L403.6 449.4L404.4 447.5L405.5 445.8M398.5 460.3L400.5 461.5L403.1 461.7L404.5 464.3L407.5 463.3L409.3 465.2M356.8 465.4L357.7 461.9M379.7 466.5L378.8 464.5L376.6 463.4L376.6 460.8L374.7 459.5L373.1 458.1L372.9 455.5L370.6 454.6L370.3 454.2M357.7 461.9L359.3 460.5L361.0 459.2L361.8 458.0M364.8 475.5L367.2 474.9L369.5 474.7L371.5 476.4M357.7 461.9L357.0 459.8L356.3 457.7L356.1 457.4M352.9 450.4L352.7 449.8L351.3 448.1M351.3 448.1L354.6 447.2L355.5 444.0M355.5 444.0L357.3 444.0M361.2 442.9L362.9 443.5M364.3 446.1L363.9 445.5L362.9 443.5M355.5 444.0L354.7 441.6L352.5 440.0L352.7 437.1L350.8 435.3M350.8 435.3L352.3 433.9L352.8 433.7M358.6 429.2L358.9 429.2L359.9 427.3L360.9 425.3L363.4 425.1L364.7 423.5M364.7 423.5L363.6 425.9L364.5 427.9L366.4 429.7L366.7 431.8L366.9 434.0M362.9 443.5L363.4 441.4L365.7 440.2L364.5 437.4L366.8 436.2L366.9 434.0M337.8 458.9L335.7 459.6L333.2 459.5L331.2 460.6L329.6 462.4L327.6 463.4L325.3 463.9L323.3 464.8M337.8 458.9L337.8 458.7M337.8 458.7L336.0 457.6L334.1 456.8L331.9 456.4L330.1 455.4L329.0 453.4L326.9 452.7L325.0 451.9L324.9 451.7M322.4 448.8L322.2 448.7L320.7 447.3M323.3 464.8L321.9 463.3L321.2 461.5M316.5 455.5L316.4 454.8L315.3 453.1L313.2 452.3L312.1 450.6M312.1 450.6L314.5 450.2L316.9 450.3L318.5 448.1L320.7 447.3M342.4 465.6L341.2 464.0L339.9 462.4L339.3 460.3L337.8 458.9M325.1 479.7L322.4 478.4L321.1 475.7M321.1 475.7L322.0 473.6L322.3 471.4L321.2 468.9L323.0 467.0L323.3 464.8M351.3 448.1L348.9 448.3L346.6 449.2L344.1 448.5L341.8 448.8M341.8 448.8L342.4 451.4L340.1 452.7L338.2 454.3L339.3 457.0L337.8 458.7M321.1 475.7L320.8 475.6M371.2 497.1L370.0 499.2M353.2 486.7L354.0 489.3L354.2 491.9L354.7 494.5M370.0 499.2L368.2 497.4L365.7 497.5L363.7 496.4L361.9 494.5L359.2 495.4L357.0 494.8L354.7 494.5M280.0 543.4L280.8 541.1L279.4 539.0L281.1 536.7L281.1 534.5L279.9 532.3M280.0 543.4L279.0 542.9M267.9 539.3L266.2 539.2M265.9 525.0L266.9 523.8M279.9 532.3L278.3 530.6L276.4 529.5L274.0 529.1L272.1 528.0L271.0 525.6L269.2 524.3L266.9 523.8M266.1 519.9L267.0 521.2L266.9 523.8M268.1 559.0L268.5 558.5M281.7 547.7L282.3 547.1M282.3 547.1L284.5 548.2L286.7 549.1M286.7 549.1L286.3 551.1L285.6 553.1L285.1 555.1L285.0 555.6M280.0 543.4L281.3 545.1L282.3 547.1M271.4 582.1L271.4 582.1L271.3 579.2M307.1 539.6L307.6 537.3L306.0 535.7L304.8 534.0L304.9 531.8L306.4 529.1L305.4 527.3L302.5 526.2L300.9 524.6L301.0 522.4M307.1 539.6L305.0 541.8M305.0 541.8L302.7 541.7L301.3 543.4L299.8 545.0L297.0 543.6L294.8 543.7L294.0 546.9L291.9 547.1L289.9 547.5L288.4 549.1M301.0 522.4L298.9 521.8L296.7 523.5L294.6 523.4L292.5 523.0L290.4 522.2L288.2 522.1M288.2 522.1L288.0 524.8L286.4 526.3L283.6 526.8L282.9 529.1L282.4 531.6L279.9 532.3M288.4 549.1L286.7 549.1M281.7 483.3L279.5 483.8L277.4 483.8L275.7 481.9L273.4 482.9L271.1 483.5L269.5 481.3L267.5 480.7L266.7 480.7M281.7 483.3L282.0 484.5M282.0 484.5L279.9 485.7L279.8 488.4L277.8 489.5L275.3 490.3L275.5 493.2L273.9 494.8M273.9 494.8L273.6 494.8M267.5 493.3L267.0 493.4M285.3 474.8L285.0 477.2L283.3 479.0L283.8 481.7L281.7 483.3M312.8 652.2L313.2 651.0L312.1 650.0M311.7 648.5L312.9 646.9L312.0 645.0L311.7 642.9M323.4 645.1L321.2 644.4L319.5 642.5L316.8 643.1L314.8 641.8M327.8 654.4L326.6 656.5L325.1 658.2L322.9 659.3L321.4 661.1M314.8 641.8L311.7 642.9M309.7 643.4L310.9 642.7M311.7 642.9L310.9 642.7M290.5 631.5L290.6 631.5L293.1 632.9L295.1 630.6L297.4 630.6L299.8 631.9L302.0 630.3M310.9 642.7L309.6 640.9L309.1 638.6L307.4 637.1L304.9 636.3L304.8 633.6L304.0 631.5L302.0 630.3M345.0 608.6L346.9 609.8L348.2 611.8L350.7 611.9L352.3 613.3L353.2 615.9L355.7 616.1L357.9 616.8L359.4 618.4M345.0 608.6L342.7 609.8L340.4 611.0L338.4 612.8M348.5 631.0L350.7 631.2L352.3 629.7M338.4 612.8L339.3 614.7L340.0 616.7L339.8 618.8L342.2 620.4L341.4 622.6L340.7 624.8L341.8 626.6L341.5 628.8M352.3 629.7L354.7 628.5L354.9 626.0L355.8 624.0L358.5 623.0L358.1 620.2L359.4 618.4M476.5 285.2L474.9 283.7L475.1 281.5L474.9 280.9M471.4 290.6L470.4 289.7L468.2 289.5L467.2 288.9M453.9 298.7L455.6 299.7L457.6 299.8L458.8 302.8L461.3 301.5L463.5 301.4L464.8 303.8L465.2 303.7M400.3 358.9L397.9 359.7L395.5 359.1L393.2 358.9L392.5 358.9M400.3 358.9L401.6 356.8L402.0 354.4L402.7 352.0L404.2 350.0M404.2 350.0L404.4 347.5L403.5 345.5L401.1 344.5M380.6 369.0L380.8 369.2L381.0 368.9M372.5 372.5L372.5 372.7L370.6 374.5M406.5 365.5L407.1 367.8L407.6 370.1L406.7 372.4M406.5 365.5L408.6 365.2L409.3 362.1L411.8 362.4L413.8 361.8M413.8 361.8L416.0 362.3L418.0 363.4L419.5 365.4L421.6 366.3L423.7 367.2L425.8 367.9M425.8 367.9L426.3 370.2L426.7 372.5L426.5 374.9M426.5 374.9L424.3 375.8L422.3 377.2L419.6 376.4L417.6 378.2L415.3 378.5M415.3 378.5L411.5 378.0M406.7 372.4L408.5 374.1L411.1 375.2L411.5 378.0M447.2 367.3L444.7 367.3L442.3 367.5L439.8 367.7M447.2 367.3L446.8 369.7L449.1 371.1L449.3 373.2L450.0 375.2M450.0 375.2L448.1 376.6L445.9 376.9L443.3 375.5L441.2 375.9L439.5 377.9L437.6 379.6L435.2 379.0L433.2 379.7M439.8 367.7L437.9 369.0L437.1 371.1L435.4 372.5L434.0 374.2L433.4 376.5L432.2 378.3M432.2 378.3L433.2 379.7M448.9 363.7L447.8 361.8L445.6 360.4L445.6 357.8L444.9 355.6L443.1 354.0L442.2 351.9M448.9 363.7L447.2 367.3M433.2 354.3L435.5 354.0L437.4 352.1L440.0 352.7L442.2 351.9M433.2 354.3L434.5 356.0L434.1 358.6L434.6 360.7L437.7 361.6L436.6 364.5L437.9 366.2L439.8 367.7M433.2 354.3L431.7 354.2M425.8 367.9L426.9 366.1L426.0 363.4L426.7 361.3L428.5 359.8L430.4 358.3L431.1 356.3L431.7 354.2M426.5 374.9L428.2 376.4L430.2 377.2L432.2 378.3M415.3 378.5L415.6 380.7L417.3 382.3L417.5 384.5L417.7 385.1M418.4 387.2L418.9 388.5L419.8 390.5L420.5 392.5M420.5 392.5L422.3 391.2L424.6 390.9L427.2 391.5L428.6 389.2L430.8 389.0L432.1 388.6M433.9 387.2L434.5 386.5M434.5 386.5L433.4 384.4L432.9 382.1L433.2 379.7M459.4 373.9L461.7 373.7L463.6 371.5L466.0 372.3L467.3 372.6M459.4 373.9L459.6 371.8L458.3 369.9L457.8 367.9L459.5 365.6L458.5 363.6L458.2 361.6M470.7 367.0L470.5 365.9L469.9 363.8M469.9 363.8L467.9 362.8L467.0 360.8L464.3 360.5L463.9 357.9L462.4 356.5M458.2 361.6L459.3 359.6L460.7 357.9L462.4 356.5M455.0 378.7L454.9 381.4L455.7 384.1M455.0 378.7L456.3 376.9L457.3 374.9L459.4 373.9M461.6 387.1L460.1 386.0L457.3 386.0L455.7 384.1M448.9 363.7L451.0 362.3L453.6 362.9L456.1 363.1L458.2 361.6M455.0 378.7L453.2 377.8L451.9 376.1L450.0 375.2M434.5 386.5L435.2 387.4M453.7 385.6L455.7 384.1M453.7 385.6L451.8 386.7L449.4 386.0L447.3 386.0L445.6 388.1L443.4 388.4L441.3 388.4L439.2 389.1M435.2 387.4L437.5 387.7L439.2 389.1M422.8 434.9L421.2 436.4L418.9 437.3L418.8 439.7L417.7 441.5L415.3 442.4L415.2 444.9L414.4 446.8M422.8 434.9L424.1 436.7L423.7 439.3L424.6 441.3L426.8 442.8L426.7 445.3L427.7 447.2M414.4 446.8L416.8 447.4L418.0 449.7L420.4 450.5L421.5 451.7M423.0 453.4L423.5 454.0M427.7 447.2L427.0 449.2M424.6 450.4L423.3 450.8L423.3 451.1M423.5 453.3L423.5 454.0M423.7 454.8L423.5 454.0M423.7 454.8L421.8 456.4L421.1 458.8M413.2 447.1L414.4 446.8M312.6 410.7L311.3 409.0L309.0 407.4M309.0 407.4L309.8 405.0M309.8 405.0L311.6 403.8L313.7 403.3L315.4 402.0L316.8 400.3L319.0 400.0M321.7 405.7L321.5 404.1L321.7 401.7M319.0 400.0L321.7 401.7M328.8 423.3L328.5 423.5L326.1 421.7L323.8 422.4M323.8 422.4L324.0 420.1L324.6 417.8L323.5 415.4L324.6 413.2L324.7 411.5M326.9 410.1L329.0 409.1L331.1 408.4L333.7 409.6L334.2 409.4M340.7 446.5L338.5 446.2L337.1 444.1L335.3 442.8L332.9 442.8L331.8 440.3L330.7 440.4M328.1 440.1L327.2 439.7M340.7 446.5L341.4 444.4L341.8 442.3L344.2 440.7L342.4 438.0L344.0 436.1L344.0 433.9M344.0 433.9L341.9 432.7L341.7 430.4M327.2 439.7L327.5 436.1M327.5 436.1L329.6 435.7L330.9 434.7M332.5 433.6L332.9 433.3L335.1 433.3L337.0 432.6L338.6 431.3L340.3 430.2M340.3 430.2L341.7 430.4M341.8 448.8L340.7 446.5M320.7 447.3L321.2 445.1L322.5 443.6L324.6 442.8L326.2 441.5L327.2 439.7M350.8 435.3L348.4 435.7L346.2 434.4L344.0 433.9M342.2 429.7L341.7 430.4M359.8 420.4L361.0 419.8L363.1 419.9L365.1 420.5M365.1 420.5L364.7 423.5M320.9 425.8L322.5 424.2L323.8 422.4M320.9 425.8L321.8 427.7L324.3 428.4L323.3 431.5L324.9 433.0L327.3 433.8L327.5 436.1M340.2 429.8L340.3 430.2M278.1 437.9L276.3 436.9M281.2 419.5L281.9 420.0L282.7 422.4M282.7 422.4L281.0 425.0M281.0 425.0L278.8 426.1L278.1 427.5M287.8 406.5L289.1 407.3M282.7 422.4L284.5 421.6L286.9 422.7L288.2 419.8L290.4 420.2M290.4 420.2L290.4 418.0L290.5 415.8L288.9 413.8L289.1 411.7L290.1 409.4L289.1 407.3M296.4 453.5L296.6 453.3L298.7 452.7L299.3 450.2L301.5 449.9L301.9 449.2M308.1 449.6L306.6 450.4L305.2 448.5M320.9 425.8L318.6 425.8L316.2 424.8L313.8 426.1M309.0 448.0L309.0 447.0L310.8 445.2L309.9 442.8L310.2 440.7L312.0 438.8L310.7 436.4L312.6 434.6L312.7 432.4L312.2 430.1L313.5 428.2L313.8 426.1M337.7 398.3L336.5 396.7L335.2 393.9M357.8 394.7L357.2 394.9M357.8 394.7L356.3 393.5L354.6 392.4L352.9 391.4L349.8 392.2L349.2 389.6L347.8 388.2L345.8 387.5L343.4 387.5L342.9 384.7L341.7 382.8L339.5 382.5L338.2 380.9M335.2 393.9L334.4 391.8L335.7 389.4L333.9 387.3L334.3 385.0M334.3 385.0L334.5 382.9L336.2 381.5M338.2 380.9L336.2 381.5M321.7 401.7L323.5 400.5L325.9 400.0L327.2 397.9L329.1 396.7L331.6 396.6L333.6 395.5L335.2 393.9M364.4 393.4L365.4 395.2L366.1 397.2L366.5 397.4M367.9 399.9L368.0 400.8L369.2 402.4L371.5 403.2L372.3 405.1L373.5 406.8L375.3 407.9M364.4 393.4L362.3 394.2L360.3 395.6L357.8 394.7M365.1 420.5L366.4 418.8L369.0 418.5L370.1 416.5L371.7 415.1M375.3 407.9L375.3 408.1M371.7 415.1L373.1 412.9L374.7 410.7L375.3 408.1M364.4 393.4L364.7 391.8M347.8 373.9L348.1 373.8M347.8 373.9L346.5 376.1L343.5 376.1L341.4 377.3L340.3 379.8L338.2 380.9M333.3 377.6L333.5 378.4L334.6 380.1L336.2 381.5M347.8 373.9L347.8 373.5M421.8 571.9L420.9 574.1L420.9 574.2M419.9 577.7L419.1 578.4M421.8 571.9L424.1 572.8L426.3 572.5M419.1 578.4L419.6 581.2L422.6 581.6L424.1 583.5M429.4 580.1L429.4 582.0L427.3 583.2M424.1 583.5L427.3 583.2M407.4 477.5L408.2 479.5L410.8 479.9L411.6 481.9L412.8 483.6M407.4 477.5L405.5 478.9L403.1 478.7M403.1 478.7L402.1 480.9L400.8 482.9L400.4 485.4L398.5 487.1M412.8 483.6L412.0 485.6L412.9 487.6M412.9 487.6L410.8 488.7L408.4 487.8L406.4 488.7L404.4 490.4L401.9 489.0L399.9 489.9M398.5 487.1L399.9 489.9M394.8 461.0L398.5 460.3M396.2 475.2L398.1 477.1L400.9 477.4L403.1 478.7M410.1 467.4L409.6 469.4L408.9 471.4L407.4 473.2L408.1 475.5L407.4 477.5M391.1 485.0L393.3 486.4L396.0 486.4L398.5 487.1M397.6 508.5L399.5 507.8L401.9 508.7L403.7 507.5L405.4 505.9L407.5 505.8M397.6 508.5L396.5 506.3L396.0 503.8L394.0 502.2L392.4 500.3M392.4 500.3L394.2 499.0L396.7 498.6L397.7 496.3L399.5 494.9M399.5 494.9L401.9 494.8L403.3 497.1L405.5 497.6M405.5 497.6L407.1 499.4L405.8 501.9L406.6 503.9L407.5 505.8M389.6 499.7L392.4 500.3M389.6 499.7L388.0 498.1L387.0 496.2L385.9 494.2M399.9 489.9L399.2 492.3L399.5 494.9M414.6 491.5L415.5 488.8L412.9 487.6M414.6 491.5L412.3 492.1L411.3 494.5L409.1 495.2L407.0 496.0L405.5 497.6M416.9 515.4L415.4 513.3M416.9 515.4L417.3 517.5L417.3 519.6L417.9 521.6L417.9 523.7L419.2 525.5L420.0 527.5L419.7 529.7M415.4 513.3L414.3 515.9L411.6 516.6M411.6 516.6L411.3 519.5L409.9 522.2M409.9 522.2L410.3 524.2L412.8 525.6L412.1 528.0L412.5 530.1M412.5 530.1L414.8 530.7L416.9 531.9L419.2 532.3M419.7 529.7L419.3 532.0M419.2 532.3L419.3 532.0M434.7 513.7L433.0 515.1L433.5 517.7L432.4 519.3L430.9 520.8M434.7 513.7L432.8 511.9L430.5 513.1L428.4 512.9L426.8 509.7L424.4 510.7L422.0 512.2L420.2 510.3L418.1 509.9L415.9 510.4M415.9 510.4L415.4 513.3M427.0 520.9L430.9 520.8M427.0 520.9L424.9 519.9L423.0 518.5L421.6 516.3L418.8 516.8L416.9 515.4M427.0 520.9L425.2 522.4L424.2 524.5L422.9 526.4L420.1 527.0L419.7 529.7M395.7 517.1L396.6 515.1L395.7 512.6L396.9 510.6L397.6 508.5M395.7 517.1L398.0 517.9L400.2 516.4L402.6 518.1L404.8 518.1L407.1 516.8L409.4 516.9L411.6 516.6M415.7 509.6L413.4 509.3L411.5 508.0L409.9 506.1L407.5 505.8M415.7 509.6L415.9 510.4M414.3 541.0L411.1 541.6M414.3 541.0L415.8 539.4L417.3 537.8L418.5 536.0L419.8 534.3M419.8 534.3L419.2 532.3M411.1 541.6L408.9 540.5L408.3 538.1L407.2 536.1L404.8 535.2L403.9 533.1M403.9 533.1L406.5 533.5L408.5 532.4L410.2 530.4L412.5 530.1M429.3 527.1L429.5 524.1L431.1 521.6M429.3 527.1L426.9 527.2L425.1 528.6L423.5 530.3L420.9 530.1L419.3 532.0M431.1 521.6L430.9 520.8M380.6 440.2L380.3 443.0L379.9 445.9M380.6 440.2L381.8 437.9L384.6 437.3L386.0 435.1L387.8 433.5M387.8 433.5L390.8 433.5L393.8 433.4M388.0 455.6L388.5 453.6L390.6 452.3L392.2 450.8L392.3 448.6L392.0 446.2L393.7 444.8L395.6 443.4L396.1 441.4L395.9 439.0L396.9 437.3M388.0 455.6L387.6 453.1L385.3 452.3L383.5 451.0L383.8 448.1L382.4 446.5L379.9 445.9M396.9 437.3L395.7 435.1L393.8 433.4M369.9 450.7L370.1 450.6L371.8 449.0L373.4 447.2L375.8 447.4L377.9 446.8L379.9 445.9M366.9 434.0L368.7 435.2L371.3 434.6L372.3 437.6L374.0 439.2L376.8 438.0L378.6 439.3L380.6 440.2M371.7 415.1L372.3 417.4L373.8 418.8L376.5 419.1L376.8 421.6L377.6 423.6L380.1 424.0L380.0 426.9L381.9 427.9L384.7 428.2L384.9 430.6L386.2 432.2L387.8 433.5M389.1 459.7L388.8 457.6L388.0 455.6M401.5 439.6L403.8 441.1L403.9 443.9L405.5 445.8M401.5 439.6L399.0 438.9L396.9 437.3M335.7 498.4L336.9 500.3L338.1 502.0L340.3 502.9M323.4 515.3L325.0 516.6L327.2 517.3L327.3 520.4L329.5 521.0M323.4 515.3L324.6 512.8L323.1 511.0L321.4 509.3L321.5 507.1M329.5 521.0L332.3 520.6L334.1 518.5M328.1 498.0L327.5 500.3L325.2 501.5L323.6 503.1L324.2 506.3L321.5 507.1M334.1 518.5L334.4 516.3L334.8 514.2L336.6 512.7L336.0 510.2L336.4 508.1L339.1 506.9L339.2 504.7L340.3 502.9M354.7 494.5L354.5 496.7L353.8 498.6L352.5 500.2L350.9 501.7L350.0 503.5M340.3 502.9L342.6 504.8L345.2 503.3L347.7 501.8L350.0 503.5M411.4 581.3L413.2 580.2L415.5 580.4L417.2 579.2L419.1 578.4M411.4 581.3L412.1 583.5L412.4 586.0L416.4 586.6L415.6 589.6L416.2 591.9L417.7 593.8M424.1 583.5L423.4 585.9L422.5 588.3L422.4 590.8M417.7 593.8L420.1 592.5L422.4 590.8M283.7 505.0L281.2 504.9M283.7 505.0L283.4 507.0L285.5 508.9L285.0 510.9L285.0 512.9L285.0 514.9L284.5 517.0M284.5 517.0L282.3 518.0L280.3 516.5L278.1 517.0L276.0 518.7L273.9 516.5L271.8 516.0L269.7 517.0L267.6 516.6M275.4 503.9L274.9 504.4L273.1 505.4L270.9 506.0L269.6 507.8M267.6 516.6L269.5 514.7L268.6 512.2L268.1 509.8L269.6 507.8M282.0 484.5L283.1 486.6L286.1 486.5L286.9 489.0M273.9 494.8L273.9 495.3M286.9 489.0L287.7 491.1L287.5 493.3L288.4 495.4L289.4 497.5L288.2 499.8L288.2 502.0M288.2 502.0L285.9 503.4L283.7 505.0M288.2 522.1L285.5 521.5L285.9 518.6L284.5 517.0M266.2 518.2L267.6 516.6M267.0 504.0L267.1 504.0L267.4 507.1L269.6 507.8M305.0 541.8L305.6 543.8L305.8 545.9L306.1 548.0L307.2 549.9L306.4 552.1L308.0 554.0L308.0 556.1L307.3 558.3L309.0 560.1L308.3 562.4L309.0 564.4M309.0 564.4L307.5 566.2L304.6 566.6L303.7 569.1L302.2 570.9M288.4 549.1L289.4 550.9L289.3 553.6L290.5 555.4L291.9 557.0L293.6 558.5L294.0 560.8L293.9 563.3L296.9 564.0L298.1 565.8L299.1 567.7L300.1 569.6L302.0 570.9M302.2 570.9L302.0 570.9M286.6 626.4L287.3 624.2L287.1 621.8M279.8 627.0L278.4 628.1L276.4 627.2L274.3 627.3M287.1 621.8L285.0 621.1L283.4 619.6L283.1 619.0M279.1 616.4L278.7 615.0L276.7 614.1L274.8 613.0L273.4 611.3L271.6 610.1M274.3 627.3L272.9 625.5L271.6 623.7L271.9 621.1L270.0 619.6L268.4 617.9L269.3 615.0L267.7 613.3M267.7 613.3L268.8 610.7L271.6 610.1M305.0 614.0L303.9 611.9L301.9 610.4M305.0 614.0L304.3 616.0L306.1 618.1L305.6 620.1L303.5 621.9L305.8 624.1L303.5 625.9L303.8 628.0M303.8 628.0L302.0 630.3M291.8 613.2L293.6 611.9L295.6 611.3L297.7 610.9L299.8 610.7L301.9 610.4M291.8 613.2L290.1 615.0L289.8 617.6L287.7 619.3L287.1 621.8M274.0 627.5L274.3 627.3M277.4 596.4L279.4 596.1M277.4 596.4L277.0 598.5L275.1 600.0L274.3 602.0L273.8 604.1L273.0 606.1L271.9 607.9L271.6 610.1M279.4 596.1L281.0 597.5L283.0 598.7L283.4 601.0L284.6 602.8L287.3 603.4L288.1 605.4L287.6 608.4L290.2 609.1L291.4 610.8L291.8 613.2M270.9 592.4L271.6 593.6L273.5 594.6L275.9 594.8L277.4 596.4M326.6 630.5L327.0 628.5L326.9 626.5L326.0 624.5L326.4 622.5L326.9 620.4L325.6 618.5L326.4 616.4L326.3 614.4L325.6 612.4M326.6 630.5L324.6 632.2L321.8 631.4L319.7 632.6M319.7 632.6L319.1 630.5L318.2 628.6L315.7 627.9L314.9 626.0M314.9 626.0L315.6 624.0L315.4 621.7L317.9 620.3L318.4 618.2L318.4 616.0M318.4 616.0L320.2 615.0L322.9 615.9L324.1 613.8L325.6 612.4M338.4 612.8L336.0 613.0L333.9 611.0L331.3 612.4L329.1 610.7L326.6 611.3M326.6 611.3L325.6 612.4M334.3 634.6L332.6 633.1L330.2 632.9L327.9 632.7L326.6 630.5M314.8 641.8L316.1 640.1L316.2 637.8L316.3 635.5L319.0 634.6L319.7 632.6M303.8 628.0L306.1 628.4L308.1 626.4L310.3 626.3L312.6 625.9L314.9 626.0M305.0 614.0L307.2 614.9L309.6 613.7L311.8 614.7L314.0 614.8L316.3 614.6L318.4 616.0M323.1 602.2L324.8 604.2L325.0 606.7L325.4 609.2L326.6 611.3M323.1 602.2L321.0 601.8L318.9 601.2L316.6 601.6L314.7 599.8L312.4 599.9M312.4 599.9L310.4 601.0L308.8 602.7L306.3 603.2L304.8 605.0L302.9 606.4M302.9 606.4L303.5 608.7L301.9 610.4M317.4 703.2L319.8 701.9L322.5 701.5M327.9 689.4L329.3 693.0M322.5 701.5L324.7 700.4L325.7 698.5L325.5 695.5L328.6 695.2L329.3 693.0M349.8 647.1L351.3 648.0M351.3 648.0L354.1 647.7M352.3 629.7L354.0 630.9L354.9 633.4L357.3 633.7L359.0 635.0L360.5 636.5L363.0 636.7L364.5 638.2M354.1 647.7L355.4 646.0L357.1 644.9L357.6 642.5L359.6 641.8L362.3 641.8L362.7 639.1L364.5 638.2M335.2 654.1L336.6 655.7L337.5 657.6L338.4 659.6L340.0 661.1L341.9 662.5L341.0 665.4L342.0 667.2L343.0 669.1M351.3 648.0L350.8 650.1L351.6 652.4L350.0 654.5L347.9 656.5L349.0 658.8L350.2 661.1L349.3 663.2L349.8 665.4M349.8 665.4L347.5 666.7L344.8 667.1L343.0 669.1M333.5 672.7L336.0 672.7L337.8 670.4L340.1 669.9L342.5 669.8M343.0 669.1L342.5 669.8M354.1 647.7L355.4 649.7L357.9 650.2L359.7 651.5L360.7 653.9L363.0 654.5M363.0 654.5L363.7 652.0L366.3 651.7L368.4 650.8L368.6 647.7L371.2 647.5L372.7 645.9M364.5 638.2L364.9 638.1M364.9 638.1L366.2 639.9L369.2 640.1L370.0 642.4L370.8 644.7L372.7 645.9M408.4 595.6L407.3 593.8L406.1 592.0L403.8 590.9L404.7 587.9L402.2 586.8L401.8 584.6M408.4 595.6L406.2 596.7L403.7 597.3L401.4 598.3L400.9 598.8M401.8 584.6L400.9 586.4L400.2 588.2L399.3 590.1L398.8 592.0L397.9 593.8L398.0 595.9L397.6 597.9M398.1 598.4L397.6 597.9M469.9 363.8L471.7 362.8L473.8 362.6L474.1 362.6M468.1 335.0L466.3 336.2L464.3 337.1L463.0 339.0L461.1 340.0L459.0 340.9L457.6 342.6M468.1 335.0L470.3 336.3L471.6 338.7L473.0 338.9M462.5 353.4L461.5 351.3L459.5 350.1L457.4 349.0L457.2 346.4M462.5 353.4L464.9 353.6L466.8 351.7L469.3 352.0L471.9 352.7L473.7 350.5L474.0 350.4M457.2 346.4L457.6 342.6M455.0 325.3L454.8 327.7L452.8 329.3L451.3 331.0L451.0 333.3M455.0 325.3L457.2 323.8L459.8 325.2L462.0 323.3L464.6 324.1M464.6 324.1L465.3 326.2L466.0 328.2L468.3 329.5L468.3 331.9M468.3 331.9L468.1 335.0M451.0 333.3L453.7 334.2L453.0 337.5L455.7 338.4L457.1 340.2L457.6 342.6M442.2 351.9L442.7 351.3M462.4 356.5L462.5 353.4M442.7 351.3L444.6 350.1L447.0 350.2L449.3 350.4L451.0 348.4L453.0 347.7L455.4 347.8L457.2 346.4M442.7 351.3L441.5 349.2L443.0 346.7L442.6 344.5L440.4 342.5L442.0 340.0L440.7 337.9M440.7 337.9L443.3 338.4L444.9 336.9L446.1 334.4L448.6 334.7L450.4 333.3M450.4 333.3L451.0 333.3M413.8 361.8L415.5 360.3L414.5 357.4L417.5 356.5L418.0 354.3L418.7 352.3M431.7 354.2L429.8 352.5M418.7 352.3L420.9 351.6L423.1 352.5L425.3 352.8L427.6 351.2L429.8 352.5M400.3 358.9L402.2 360.2L403.1 362.5L405.1 363.7L406.5 365.5M404.2 350.0L406.3 350.1L408.3 348.6L410.4 348.8L412.6 348.8L414.6 348.4M418.7 352.3L416.8 350.2L414.6 348.4M375.3 407.9L376.7 406.5L378.3 405.2L379.4 403.5L382.9 404.0L383.2 401.5L384.1 399.6L385.1 397.8L388.1 397.9L388.6 395.9M386.6 411.3L384.4 410.5L382.4 409.0L379.7 409.7L377.8 408.1L375.3 408.1M386.6 411.3L388.8 411.1L390.2 409.4L391.5 407.5L393.7 407.3L395.7 406.9L397.3 405.6L399.0 404.5M399.0 404.5L398.9 402.0L395.9 400.6L394.8 398.5L395.6 395.8L395.6 395.5M386.7 369.5L388.8 370.4L391.0 371.0L393.2 371.7L394.6 374.0L397.0 374.3L399.0 375.2M386.7 369.5L387.1 371.6L388.3 373.6L386.6 375.8L388.4 377.8L390.0 379.7L388.1 382.0L388.8 384.0L388.5 386.2M399.0 375.2L398.1 377.3L396.6 379.0L394.5 380.5L394.1 382.9L393.2 385.0L391.9 386.8L391.6 387.7M388.5 386.2L390.3 388.1M384.7 366.6L386.7 369.5M406.7 372.4L405.3 374.6L403.3 374.9L400.5 373.4L399.0 375.2M370.8 380.2L373.0 380.1L374.9 380.9L376.7 382.2L379.3 380.8L380.9 382.5L382.7 383.8L384.7 384.4L386.7 385.0L388.5 386.2M411.5 378.0L410.6 379.8L410.2 381.5M406.5 388.5L406.4 389.0L405.0 390.5M405.0 390.5L402.8 389.6L400.9 392.4L398.6 390.0M442.8 396.9L441.1 398.4L441.0 400.9L440.6 403.3L440.0 405.7M446.9 397.1L448.4 397.1L450.8 398.2M440.0 405.7L441.9 407.1L444.3 407.1L445.9 409.3L448.5 408.7L450.6 409.5L451.8 410.6M450.8 398.2L451.4 399.1M452.7 401.3L453.0 401.7L453.5 403.9L453.7 404.0M435.2 387.4L435.4 388.4M434.6 390.6L433.9 391.2L433.9 393.3L435.0 395.7L433.2 397.3L432.0 399.0L432.2 401.2L430.5 402.8L430.1 404.8M439.2 389.1L440.1 391.0L440.8 392.8M430.1 404.8L432.4 405.8L434.5 407.1M434.5 407.1L437.1 405.5L440.0 405.7M453.7 385.6L453.1 387.7L453.6 390.0L452.9 392.1L452.0 394.0L451.8 396.2L450.8 398.2M450.8 421.2L449.1 422.0L448.0 423.7L447.0 425.5L445.3 426.8L445.2 429.2L443.7 430.6M443.7 430.6L445.2 432.3L446.4 434.1L446.7 436.4M446.7 436.4L448.4 437.9L450.6 438.4M450.6 438.4L453.5 439.7L455.9 437.9M434.5 407.1L433.5 409.6L436.2 411.6L434.7 414.1L434.5 416.5L436.2 418.6M436.2 418.6L438.3 418.2L440.4 418.2L442.4 417.0L444.7 418.3L446.7 417.0L448.8 416.3L450.9 417.8M436.2 418.6L435.5 421.1L433.8 422.9L431.8 424.4L430.7 426.6M430.7 426.6L432.7 427.9L435.1 427.9L437.3 428.2L439.0 430.3L441.5 429.9L443.7 430.6M403.5 423.2L402.7 421.3L399.9 420.5L400.1 418.0L399.5 416.0M403.5 423.2L401.6 424.5L399.9 426.0L399.0 428.4L397.6 430.2L395.2 431.1L393.9 433.1M393.9 433.1L394.4 430.9L394.2 428.8L393.9 426.8L393.0 424.8L393.2 422.7L393.6 420.5L392.8 418.6L391.2 416.8L390.9 414.7M399.5 416.0L397.3 415.9L395.2 415.2L393.1 414.9L390.9 414.7M386.6 411.3L389.5 412.0L390.9 414.7M393.8 433.4L393.9 433.1M399.0 404.5L401.5 404.8L403.7 406.2L405.9 407.2M405.9 407.2L405.2 409.4L403.0 410.5L402.0 412.5L401.5 414.8L399.5 416.0M309.0 407.4L306.6 408.0L304.2 408.6L302.0 409.9M309.8 405.0L308.4 403.2L308.9 400.6L306.4 399.3L306.5 396.9M302.0 409.9L300.6 408.4L298.8 407.3M298.8 407.3L299.4 405.0L298.7 402.6L299.2 400.3L299.6 398.0L299.8 395.7M306.5 396.9L304.2 396.8L302.4 394.1L299.8 395.7M319.0 400.0L317.7 398.0L317.3 395.8L317.2 393.5L315.9 391.5L315.7 389.2M306.5 396.9L307.6 395.2L309.7 394.6L310.8 392.8L312.4 391.5L314.1 390.4L315.7 389.2M334.3 385.0L332.4 386.2L330.3 386.0L328.3 386.6L326.1 386.2L324.2 387.3L322.4 388.7L320.0 387.3L318.0 387.6L316.0 388.0M308.1 378.6L308.4 379.4L311.4 380.0L311.3 383.0L312.5 384.9L315.0 385.9L316.0 388.0M316.0 388.0L315.7 389.2M283.6 440.9L283.7 440.9M296.6 446.2L295.5 446.4L293.3 446.1L291.3 445.2L289.7 443.2L287.4 443.4L285.3 442.7L283.7 440.9M281.0 425.0L282.7 426.7L283.2 429.2L285.9 429.9L287.5 431.7L288.5 433.8M283.7 440.9L285.3 439.4L285.2 436.7L286.7 435.1L288.5 433.8M294.5 421.9L296.6 420.5L298.1 417.8L301.2 418.0M294.5 421.9L294.7 423.9L294.3 426.0L294.6 428.1L296.3 429.9L296.1 432.0M296.1 432.0L297.4 433.1M297.4 433.1L297.4 433.1M304.3 430.0L305.9 430.8L307.1 428.3L308.7 426.8L311.3 427.1L313.0 425.6M301.2 418.0L303.4 418.4L304.2 421.4L305.7 423.1L307.5 422.9M310.1 423.5L310.3 423.6L312.3 424.6M312.3 424.6L313.0 425.6M290.4 420.2L292.3 421.2L294.5 421.9M289.1 407.3L291.5 406.6L293.9 407.0L296.4 407.1L298.8 407.3M302.0 409.9L301.6 411.9L300.5 413.9L300.9 416.0L301.2 418.0M288.5 433.8L291.0 433.1L293.8 433.7L296.1 432.0M301.3 445.9L301.0 445.4L300.0 443.5L300.0 441.2L299.4 439.2L297.1 437.7L297.6 435.9M297.5 433.5L297.4 433.1M313.8 426.1L313.0 425.6M313.3 416.2L314.3 418.0L314.2 420.2L311.9 422.3L312.3 424.6M314.7 491.5L314.1 493.8L313.4 496.0L311.8 498.0L311.7 500.4L311.0 502.7M314.7 491.5L313.2 489.7L311.9 487.7L309.1 488.0L307.0 487.2L305.8 484.8L303.3 484.7M303.3 484.7L301.0 487.9M301.0 487.9L300.7 490.2L302.9 492.4L302.9 494.7L300.6 497.1L303.9 499.2L301.4 501.6L301.5 503.9M311.0 502.7L308.9 503.7L306.4 503.0L304.1 503.3L301.9 504.3M301.9 504.3L301.5 503.9M323.2 488.5L321.2 489.6L318.8 489.4L316.6 490.1L314.7 491.5M321.5 507.1L319.5 506.0L317.2 505.5L315.4 503.9L313.4 502.9L311.0 502.7M303.8 480.7L303.6 482.7L303.3 484.7M286.9 489.0L288.9 488.6L290.9 488.0L292.9 488.3L294.9 487.8L296.9 487.7L299.0 488.0L301.0 487.9M288.2 502.0L290.6 501.2L292.6 502.8L294.9 503.1L297.3 501.9L299.4 503.0L301.5 503.9M323.4 515.3L321.5 516.3L319.0 515.4L316.9 515.9L315.2 517.5L313.4 518.7L311.1 518.4L308.6 517.6L307.2 520.2L305.4 521.4L303.1 521.0L301.2 522.1M301.2 522.1L302.3 519.9L301.7 517.6L300.7 515.4L302.1 513.2L303.1 511.0L302.4 508.7L301.7 506.5L301.9 504.3M301.2 522.1L301.0 522.4M403.9 533.1L401.1 532.6L398.3 532.4M409.9 522.2L407.6 522.3L406.2 524.3L404.7 526.2L401.8 525.1L400.4 527.2L398.0 527.0L396.2 528.3M396.2 528.3L397.4 530.3L398.3 532.4M345.0 608.6L344.8 606.0L346.0 604.0L347.2 602.0L348.1 599.8M364.3 605.1L363.5 603.0L361.4 602.0L359.8 600.5L359.4 598.0L357.2 597.2M364.3 605.1L364.4 607.5L361.6 609.1L361.3 611.3L362.0 613.9L359.8 615.6L360.7 618.2M360.7 618.2L359.4 618.4M357.2 597.2L354.9 597.8L352.8 599.2L350.2 598.8L348.1 599.8M414.3 554.0L412.4 555.8L411.9 558.3L411.7 560.9L410.0 562.9M414.3 554.0L417.0 552.4M420.0 567.1L417.8 566.6L415.5 566.6L414.2 564.2L411.9 563.8L410.0 562.9M420.0 567.1L421.4 565.1L421.1 562.5L424.1 561.1L423.2 558.3L424.0 556.0M424.0 556.0L421.3 555.4L418.6 554.9L417.0 552.4M414.3 541.0L414.6 543.3L417.1 544.7L418.6 546.6L418.2 549.3M414.3 554.0L412.4 552.8L411.7 550.4L409.4 549.7L408.0 548.0L406.6 546.3M411.1 541.6L409.4 543.0L408.0 544.6L406.6 546.3M418.2 549.3L417.0 552.4M441.9 575.1L442.1 574.9L443.8 573.6M443.8 573.6L444.3 570.1M444.3 570.1L443.3 568.4L440.4 568.2L440.1 565.8L439.1 564.0L437.8 562.5M433.3 572.0L433.3 571.7L434.8 569.6L433.0 567.2L434.0 565.1M437.8 562.5L436.6 564.7L434.0 565.1M420.0 567.1L421.0 569.5L421.8 571.9M420.0 567.1L422.0 566.2L424.2 566.0L426.1 565.1L427.9 563.8L429.8 562.9M429.8 562.9L432.2 563.4L434.0 565.1M419.8 534.3L422.1 535.8M429.3 527.1L429.8 529.5L432.6 530.7L432.8 533.3M422.1 535.8L424.4 535.9L426.3 534.3L428.5 534.3L430.9 534.8L432.8 533.3M436.4 512.3L440.2 513.4M436.4 512.3L434.7 513.7M431.1 521.6L432.5 523.6L434.5 524.9L436.5 526.3M440.2 513.4L440.2 515.6L442.1 517.3L442.1 519.5L442.7 521.5M442.7 521.5L443.6 523.8L441.9 525.5M441.9 525.5L439.1 525.4L436.5 526.3M427.5 468.8L427.1 471.4L427.6 474.0M427.5 468.8L425.2 467.8M416.0 469.6L417.6 471.5L418.0 474.2L419.9 475.9L421.0 478.2M427.6 474.0L426.1 476.4L423.5 477.4L421.0 478.2M412.8 483.6L414.0 481.1L416.3 481.1L419.1 481.7L420.3 479.6M421.0 478.2L420.3 479.6M430.0 501.3L431.6 499.8L433.4 498.4L435.4 497.4L436.9 495.6M430.0 501.3L428.2 500.1L426.5 498.3L423.7 499.9L421.8 498.9M428.1 487.3L429.1 486.9M428.1 487.3L427.4 489.7L424.5 490.3L424.4 493.1L423.2 495.1L421.1 496.3M429.1 486.9L431.4 487.5L432.8 490.2L435.6 489.7M436.9 495.6L437.4 493.5L436.5 491.6L435.6 489.7M421.8 498.9L421.1 496.3M436.4 512.3L435.7 509.4M415.7 509.6L416.2 507.5L416.9 505.6L418.7 504.2L418.5 501.7L420.2 500.3L421.8 498.9M435.7 509.4L434.4 507.3L433.6 504.8L431.8 503.1L430.0 501.3M432.4 478.5L432.1 480.8L431.2 482.9L429.5 484.6L429.1 486.9M432.4 478.5L430.8 477.0L427.9 476.9L427.6 474.0M420.3 479.6L421.7 481.4L424.2 481.9L424.5 484.7L426.2 486.1L428.1 487.3M414.6 491.5L417.0 491.7L418.8 492.6L419.3 495.5L421.1 496.3M432.4 478.5L435.1 478.9L437.5 477.5L440.2 477.2M440.2 477.2L441.6 479.4L442.7 481.9L444.1 484.1M444.1 484.1L442.2 485.0L440.8 486.5L440.1 489.1L437.4 488.6L435.6 489.7M450.3 504.9L449.8 502.7L450.7 500.5L451.9 498.4L449.9 496.0L451.6 493.9L451.3 491.7M450.3 504.9L448.3 503.6L445.9 503.0L444.1 501.3L441.7 500.7M440.6 496.9L441.7 500.7M440.6 496.9L443.0 496.4L445.0 495.2L446.3 492.9L448.8 492.5L450.6 491.0M450.6 491.0L451.3 491.7M435.7 509.4L436.8 507.6L437.3 505.4L438.9 503.9L440.9 502.7L441.7 500.7M440.2 513.4L442.1 511.7L444.6 512.2L446.8 511.4L448.9 510.6M448.9 510.6L451.3 507.9M451.3 507.9L450.3 504.9M436.9 495.6L438.9 495.7L440.6 496.9M437.1 447.7L438.8 450.8M437.1 447.7L437.1 446.5M437.2 443.9L437.3 442.1M437.3 442.1L438.6 440.2L440.6 439.2L443.1 439.0L444.7 437.3L446.7 436.4M450.6 438.4L449.5 440.3L449.4 442.2M448.3 445.1L447.5 446.9L445.9 448.7L446.6 451.4L445.2 453.3M445.2 453.3L442.9 452.9L440.6 452.5L438.8 450.8M437.1 447.7L434.9 447.7M429.7 447.8L427.7 447.2M423.7 454.8L426.1 454.3L427.1 457.2L429.6 456.5L431.3 457.7M438.8 450.8L436.8 451.6L435.2 452.9L435.3 456.0L433.1 456.6L431.3 457.7M427.5 468.8L429.7 468.0L430.6 465.4L433.0 465.0M431.3 457.7L431.6 460.2L432.3 462.6L433.0 465.0M401.8 584.5L401.8 584.6M401.8 584.5L403.7 583.1L406.3 582.8L407.7 580.6M407.7 580.6L411.4 581.3M408.4 595.6L410.3 597.8L413.2 598.1M417.7 593.8L416.2 597.0M413.2 598.1L416.2 597.0M429.2 597.1L428.9 597.3L429.2 599.5M422.4 590.8L425.0 590.9L426.5 593.9L429.5 592.7L431.5 593.8M416.2 597.0L418.1 598.3L419.6 600.0M419.6 600.0L421.7 599.9L423.1 600.9M427.3 583.2L428.9 584.7L430.4 586.2L430.5 586.3M419.6 600.0L419.2 601.9M283.4 593.4L285.7 593.5L287.7 595.1L289.8 595.5L292.3 594.4L294.2 596.3L296.5 596.1M283.4 593.4L284.3 591.4L285.0 589.4L286.5 587.6L287.6 585.7L288.5 583.7L290.0 581.9L289.8 579.5L290.2 577.3M296.5 596.1L298.1 594.6L299.5 593.0L301.5 592.1L302.8 590.4L304.4 588.9M304.4 588.9L304.2 586.6L303.3 584.6L301.7 583.0L301.8 580.6L301.1 578.5L298.9 577.1L297.8 575.2M290.2 577.3L292.7 576.5L295.6 577.1L297.8 575.2M279.4 596.1L280.4 593.3L283.4 593.4M302.9 606.4L301.5 604.9L300.7 603.0L300.0 601.0L298.6 599.5L297.1 598.1L296.5 596.1M284.7 572.8L284.9 572.9L287.1 573.8L287.8 576.6L290.2 577.3M312.4 599.9L312.0 597.8L310.7 596.0L309.7 594.2L310.9 591.4L308.6 590.1M308.6 590.1L306.3 590.2L304.4 588.9M302.2 570.9L303.8 572.1L306.1 572.3L307.6 573.7L309.1 575.1L310.6 576.6L312.7 577.0L314.5 578.1L316.0 579.4L317.6 580.7L319.2 582.0M302.0 570.9L301.1 572.8L299.6 574.2L297.8 575.2M319.2 582.0L317.5 583.5L316.0 585.2L313.3 585.3L311.9 587.1L310.1 588.4L308.6 590.1M363.0 654.5L363.0 656.8L365.4 658.7L364.1 661.1M349.8 665.4L352.1 665.4L354.2 667.2L356.6 666.2L358.9 666.4M364.1 661.1L362.3 662.8L360.8 664.8L358.9 666.4M360.7 618.2L364.3 619.6M364.9 638.1L367.2 636.5L367.5 633.6M364.3 619.6L364.2 621.7L366.4 623.3L366.0 625.5L366.0 627.6L367.8 629.3L366.9 631.6L367.5 633.6M370.8 604.7L368.6 604.4L366.5 605.4L364.3 605.1M370.8 604.7L371.8 607.1L373.8 608.6L375.8 610.0M375.8 610.0L374.5 611.8L372.6 613.0L371.7 615.4L370.3 617.2L367.6 617.5L366.1 619.2M364.3 619.6L366.1 619.2M375.8 610.0L378.0 610.2M366.1 619.2L368.1 620.2L370.0 621.4L372.4 621.7L374.1 623.3L376.5 623.4L378.5 624.5L380.6 625.3M378.0 610.2L378.8 612.3L378.5 614.5L378.6 616.8L379.5 618.8L380.3 620.9L380.1 623.2L380.6 625.3M367.5 633.6L369.3 632.0L371.5 631.5L373.8 631.6L375.7 630.2L377.7 629.2L380.0 629.0L382.2 628.7M380.6 625.3L382.7 627.7M382.2 628.7L382.7 627.7M468.3 331.9L470.1 330.7L472.6 331.1L474.2 330.2M475.0 328.4L475.3 327.6L475.9 327.7M440.7 337.9L438.9 336.5L436.1 337.4L434.3 336.1L432.7 334.4L430.7 333.5M429.8 352.5L429.7 350.5L427.9 348.6L429.5 346.4L428.1 344.5L427.2 342.5L428.5 340.3L428.2 338.3L428.3 336.3M430.7 333.5L428.3 336.3M405.9 407.2L407.9 406.9L409.9 406.4M405.0 390.5L407.0 392.5L408.8 394.9M409.9 406.4L409.9 404.1L409.0 401.8L407.9 399.6L408.8 397.2L408.8 394.9M420.5 392.5L420.5 392.5M420.5 392.5L418.0 392.2L415.9 394.2L413.5 394.2L410.9 393.2L408.8 394.9M437.3 442.1L435.2 441.3L434.5 439.1L433.2 437.4L430.3 437.4L429.4 435.3L428.9 432.9L427.1 431.8L425.7 430.3M430.7 426.6L427.3 428.2M425.7 430.3L427.3 428.2M422.8 434.9L423.6 431.5M425.7 430.3L423.6 431.5M401.5 439.6L403.2 438.2L405.3 437.4L406.7 435.5L409.3 435.3L410.6 433.3L411.9 431.3L414.5 431.1L416.1 429.5M423.6 431.5L421.2 430.5L418.9 429.0L416.1 429.5M403.5 423.2L405.5 422.8L407.5 422.1L409.5 423.0M416.1 429.5L414.3 428.1L413.3 425.7L410.7 425.1L409.5 423.0M298.0 392.2L298.0 393.8M298.0 393.8L296.5 394.3M299.8 395.7L298.0 393.8M442.7 521.5L444.9 522.7L447.3 521.0L449.5 522.1L451.8 522.1M448.9 510.6L448.9 512.8L450.5 514.4L451.0 516.4L450.7 518.7L452.5 520.2M452.5 520.2L451.8 522.1M395.7 517.1L394.3 519.1L392.7 520.9M396.2 528.3L395.1 526.2L393.1 524.8M392.7 520.9L393.1 524.8M367.4 574.6L367.7 576.6L368.4 578.6L368.3 580.7L368.7 582.7L369.4 584.7L368.7 586.9L370.1 588.8L369.5 590.9L369.9 593.0M367.4 574.6L365.5 575.5L364.8 577.9L362.7 578.5L360.4 578.8L359.1 580.5M359.1 580.5L358.9 582.7L360.5 585.1L359.1 587.2L359.0 589.5L359.2 591.7L357.4 593.9L358.0 596.2M369.9 593.0L367.8 592.9L365.8 593.6L363.8 593.9L362.0 595.2L359.8 595.1L358.0 596.2M370.8 604.7L371.7 602.9L371.9 600.8L373.0 599.0L373.4 597.0L373.8 595.0M373.8 595.0L371.7 594.3L369.9 593.0M357.2 597.2L358.0 596.2M348.1 599.8L345.8 597.8L344.7 594.9M359.1 580.5L356.8 580.8L354.5 581.3L352.3 579.6L349.9 580.3L347.6 579.9M344.7 594.9L344.4 592.7L346.7 590.9L347.4 588.8L345.3 586.2L347.0 584.2L347.9 582.2L347.6 579.9M323.1 602.2L323.1 600.0L324.7 598.5L325.6 596.7L324.7 594.2L325.7 592.4L328.4 591.3L328.2 589.1M344.7 594.9L342.9 593.5L341.0 592.4L338.3 593.3L336.5 592.0L334.8 590.3L332.7 589.5L330.4 589.5L328.2 589.1M319.2 582.0L321.5 583.1L323.8 581.9L326.1 581.7M328.2 589.1L327.2 586.7L326.0 584.4L326.1 581.7M443.8 573.6L445.1 573.8M418.2 549.3L419.8 548.1L422.3 548.5L423.6 546.6L425.3 545.6M422.1 535.8L424.4 537.4L424.6 540.2M424.6 540.2L425.0 542.7L425.5 545.2M425.5 545.2L425.3 545.6M475.5 528.6L475.4 528.7L473.1 528.6L471.7 529.7M424.6 540.2L426.9 541.4L429.1 539.2L431.4 539.7L433.6 539.6M432.8 533.3L433.5 533.5M433.6 539.6L433.7 537.6L433.0 535.6L433.5 533.5M436.5 526.3L434.9 528.3L435.7 531.0L434.6 533.1M433.5 533.5L434.6 533.1M452.4 470.6L450.4 471.5L449.0 472.5M447.4 474.3L447.0 474.8L444.4 474.5L442.4 475.4L440.4 476.3M452.4 470.6L453.4 468.1L451.3 466.2M451.8 463.1L452.4 461.3L450.8 459.2M450.8 459.2L449.7 458.8M449.7 458.8L447.2 459.2L446.2 461.9L444.3 463.1L442.3 464.2L440.8 466.2L438.2 466.5M440.4 476.3L440.0 474.4L439.0 472.5L439.4 470.4L438.7 468.5L438.2 466.5M445.2 453.3L446.7 455.2L448.7 456.5L449.7 458.8M433.0 465.0L435.9 464.9L438.2 466.5M440.2 477.2L440.4 476.3M453.3 471.7L451.9 473.6L451.7 475.8L450.7 477.8L449.0 479.5M449.4 481.8L449.4 482.0L449.6 484.4L448.8 486.4M453.3 471.7L455.4 473.2L457.9 473.7M457.9 473.7L458.8 475.7L459.2 477.8L460.7 479.5M460.7 479.5L459.1 481.3L457.1 482.4L454.0 481.8L452.2 483.2L451.3 486.2L448.9 486.6M448.9 486.6L448.8 486.4M444.1 484.1L446.4 485.2L448.8 486.4M452.4 470.6L453.3 471.7M450.6 491.0L450.6 488.4L448.9 486.6M458.0 457.5L457.5 457.4L455.3 456.7M452.8 458.5L454.5 459.8L455.0 460.5M455.7 461.6L455.8 461.7L457.8 461.6M452.8 458.5L455.3 456.7M458.5 446.0L458.0 446.4L458.8 448.9L458.6 451.0L456.4 452.6L456.2 454.7L455.3 456.7M450.8 459.2L452.8 458.5M457.9 473.7L459.7 472.5L461.3 471.2L462.8 469.5L464.9 468.8M465.0 468.9L466.3 471.1L468.6 472.5L470.6 474.1M470.6 474.1L471.6 472.4L472.0 471.6M366.4 723.1L367.9 724.8L370.0 725.2L372.2 725.2L374.0 726.3L375.6 727.6L377.4 728.6L379.5 728.9M366.4 723.1L366.1 725.2L367.1 727.3L366.9 729.5L366.0 731.6L366.4 733.8L366.4 733.8M379.5 728.9L379.4 729.7M362.4 718.0L361.1 719.7L358.9 720.5L357.3 721.9L356.3 723.9L354.6 724.6M362.4 718.0L364.4 719.2L365.0 721.5L366.4 723.1M385.4 721.0L384.4 722.9L382.9 724.4L382.5 726.6L380.9 728.1M385.4 721.0L387.7 721.2L389.9 722.2L391.8 721.3M398.4 723.1L398.9 723.0M380.9 728.1L381.8 728.5M398.9 723.0L399.2 725.2L399.6 726.5M362.4 718.0L362.4 715.6M362.4 715.6L364.1 714.3L365.8 713.1L368.3 712.9L368.8 710.3L370.8 709.4L372.0 707.6M382.0 710.9L380.3 709.4L378.1 709.2L375.5 710.4L373.8 708.8L372.0 707.6M382.0 710.9L382.0 713.1L385.5 714.2L384.6 716.8L384.1 719.2L385.4 721.0M379.5 728.9L380.9 728.1M334.6 717.0L336.6 716.5M334.6 717.0L332.7 718.1L331.1 719.4M336.6 716.5L337.3 718.9L339.5 719.9L341.4 721.2L341.7 723.0M322.5 701.5L324.4 702.8L325.2 704.9L326.4 706.7L329.8 706.9L330.1 709.5L331.3 711.3L332.4 713.2L332.9 715.6L334.6 717.0M329.3 693.0L331.5 693.5L334.0 692.5L336.0 693.8L338.4 693.4L340.6 693.8L342.6 695.1M339.5 713.9L339.7 711.8L340.1 709.7L339.8 707.5L339.8 705.4L340.1 703.3L341.4 701.3L340.8 699.1L342.3 697.2L342.6 695.1M339.5 713.9L336.6 716.5M362.4 715.6L360.4 714.3M360.4 714.3L358.4 713.9L356.3 714.3L354.2 715.0L352.1 712.9L350.0 714.3L347.9 714.8L345.8 713.6L343.7 713.7L341.6 713.9L339.5 713.9M427.8 715.2L430.0 715.6L432.1 716.5L432.3 716.4M427.8 715.2L429.0 712.8L427.5 710.6L426.3 708.4L427.4 706.6M420.0 721.4L420.1 722.3M420.0 721.4L420.0 721.3M421.0 720.3L421.6 719.5L423.7 718.1L425.3 716.1L427.8 715.2M420.1 722.3L422.3 722.9L422.3 722.9M424.1 722.5L424.8 722.3L426.8 723.5L428.8 724.9L431.4 724.1L431.9 724.5M372.0 707.6L371.4 705.5L371.9 703.5L372.2 701.4M372.2 701.4L370.6 700.1L369.4 698.1L367.4 697.1L365.8 695.7L364.6 693.7L361.9 693.7L360.4 692.1M360.4 714.3L360.0 712.0L358.2 710.6L357.1 708.7L356.4 706.6L355.5 704.6L354.3 702.8L352.4 701.5L351.9 699.2L350.8 697.4L349.0 696.0L347.8 694.2M360.4 692.1L358.2 691.8L356.4 693.9L354.4 694.8L352.1 694.1L350.0 693.9L347.8 694.2M342.5 669.8L343.7 671.6L345.1 673.1L345.1 675.3L345.5 677.4L347.5 678.7L348.3 680.6L347.9 682.9M342.6 695.1L345.0 695.4L346.6 693.6M347.9 682.9L346.0 684.9L348.0 687.3L348.4 689.5L346.1 691.4L346.6 693.6M346.6 693.6L347.8 694.2M372.7 645.9L372.8 645.9M382.2 628.7L382.5 631.0L382.3 633.3L382.1 635.5L382.6 637.8M372.8 645.9L375.1 645.3L375.6 642.6L376.9 640.9L379.7 641.0L381.4 639.7L382.6 637.8M464.6 324.1L465.4 321.9L465.9 319.6L467.4 317.7M467.4 317.7L469.8 317.5L469.8 317.5M465.5 314.5L465.0 312.0L466.1 310.8M465.5 314.5L467.4 317.7M404.0 338.8L404.2 338.8L404.6 337.6M406.4 334.0L406.4 334.1L406.2 334.4M414.6 348.4L414.8 346.2L414.8 343.9L416.6 341.8L416.5 339.5L415.4 337.1M405.3 336.1L407.3 335.7L409.4 335.4L411.3 336.7L413.4 336.6L415.4 337.1M428.3 336.3L426.3 336.4L424.2 336.7L422.1 336.7L420.0 336.7L417.9 336.6L415.8 336.8M415.4 337.1L415.8 336.8M422.1 414.3L419.5 414.6L417.3 413.8L415.3 412.1L413.0 411.7M422.1 414.3L423.5 412.8L424.6 411.1L426.0 409.6L427.3 408.0L428.2 406.1L429.8 404.8M429.8 404.8L428.0 403.9L427.0 401.4L424.3 402.1L422.6 400.8M422.6 400.8L420.2 401.0L418.9 403.7L416.1 403.1L413.7 403.4L412.5 406.5L410.0 406.4M410.0 406.4L410.9 408.2L411.4 410.3L413.0 411.7M427.3 428.2L427.3 425.9L425.8 424.2L425.2 422.2L424.1 420.3L423.6 418.3L423.2 416.2L422.1 414.3M409.5 423.0L411.3 421.1L411.1 418.6L411.2 416.1L412.8 414.1L413.0 411.7M430.1 404.8L429.8 404.8M420.5 392.5L422.0 394.4L420.6 396.9L423.4 398.4L422.6 400.8M409.9 406.4L410.0 406.4M484.5 525.3L484.9 524.9L488.0 524.3L488.2 521.7L489.1 519.6M489.1 519.6L491.2 520.1L493.1 520.8L493.2 520.8M476.7 524.8L475.0 523.4L474.6 521.3M464.5 527.2L464.3 526.7L462.9 525.0M474.6 521.3L471.9 521.8L469.4 520.4L466.8 520.3M466.8 520.3L465.5 521.9L464.5 523.7L462.9 525.0M441.8 536.5L443.3 538.7M441.8 536.5L442.6 534.4L444.5 533.6M444.5 533.6L445.1 533.3L445.4 530.8M443.3 538.7L447.0 537.8M447.0 537.8L447.0 535.3L444.5 533.6M444.5 533.6L444.4 533.5L445.4 530.8M451.9 522.8L451.9 522.5M451.9 522.5L449.6 523.0L448.0 524.2L447.5 526.7L446.0 528.0L444.5 529.3M447.7 531.0L445.4 530.6M445.4 530.6L444.5 529.3M444.5 529.3L444.5 529.3M452.5 520.2L454.8 519.7M451.8 522.1L451.9 522.5M462.3 524.9L461.1 522.7L460.8 522.5M462.3 524.9L460.4 525.0M462.9 525.0L462.3 524.9M441.9 525.5L442.0 528.2L444.5 529.3M449.9 537.4L448.6 538.5M447.0 537.8L448.6 538.5M445.4 530.8L445.4 530.6M441.8 536.5L439.7 536.4M439.7 536.4L439.0 534.1L436.6 533.5M436.6 533.5L438.7 532.8L440.9 532.2L442.6 530.6L444.5 529.3M436.6 533.5L434.6 533.1M420.0 567.1L420.0 567.1M407.7 580.6L406.8 578.7L407.3 576.6L407.3 574.6L406.3 572.6L406.3 570.6L406.4 568.6L406.5 566.5M410.0 562.9L408.5 563.3M406.5 566.5L408.5 563.3M389.6 499.7L387.7 500.9L386.4 502.6L384.0 503.3L383.8 506.1L382.4 507.7L380.7 509.0M392.7 520.9L390.9 519.5L388.4 519.3L386.6 517.8L384.6 516.8L382.4 516.0L381.1 513.8M380.7 509.0L381.2 511.4L381.1 513.8M370.0 499.2L370.2 501.0M380.7 509.0L379.4 507.1L377.7 505.8L375.2 505.3L374.0 503.3L372.2 502.0L370.2 501.0M373.8 595.0L375.9 593.0L378.6 594.5L381.1 594.3L383.3 593.3M383.3 593.3L382.8 591.3L383.3 588.9L382.7 586.9L381.6 585.0L381.0 583.0L380.0 581.1M367.4 574.6L367.5 574.4M380.0 581.1L377.8 580.9L376.8 578.5L375.5 576.7L372.7 577.5L371.6 575.2L369.3 575.3L367.5 574.4M394.6 571.4L392.4 572.2L390.6 574.3L387.9 573.8M394.6 571.4L395.5 573.2L396.6 574.9L397.4 576.8L397.4 579.0L399.0 580.5L400.0 582.2L400.6 584.2M400.6 584.2L398.4 584.0L396.3 584.8M396.3 584.8L394.8 583.4L392.5 583.0L391.2 581.2L389.9 579.4L388.2 578.2L386.5 577.0M387.9 573.8L386.5 577.0M401.8 584.5L400.6 584.2M396.1 568.9L398.5 569.7L400.1 567.4L402.5 568.4L404.5 567.6L406.5 566.5M396.1 568.9L394.6 571.4M384.1 593.8L386.3 593.1L388.8 592.9L389.6 590.3L390.7 588.1L393.2 587.9L395.3 587.1L396.3 584.8M384.1 593.8L383.3 593.3M380.0 581.1L381.7 578.9L384.2 578.1L386.5 577.0M449.5 546.0L449.9 544.0L450.3 541.9M449.5 546.0L447.8 545.0L445.8 544.5M445.8 544.5L445.4 542.4M445.4 542.4L447.9 542.6L448.9 540.3M448.9 540.3L450.3 541.9M450.6 542.0L450.3 541.9M451.4 548.4L450.6 548.5M450.6 548.5L449.5 546.0M443.3 538.7L442.8 540.9M442.8 540.9L445.4 542.4M448.6 538.5L448.9 540.3M450.6 554.4L449.0 555.4L446.8 555.9L445.4 557.5L443.8 559.0M443.8 559.0L445.8 560.5L446.7 563.0L449.1 564.1M449.1 564.1L450.4 564.1M450.6 548.5L449.7 550.0M449.7 550.0L449.3 552.4L450.6 554.1M441.3 558.2L442.8 556.3L444.0 554.2L445.5 552.4L446.7 550.3M441.3 558.2L443.8 559.0M446.7 550.3L449.7 550.0M444.3 570.1L446.8 568.8L446.8 565.6L449.1 564.1M437.8 562.5L439.5 560.6L440.1 558.2M440.1 558.2L441.3 558.2M440.1 558.2L439.0 556.5L437.7 554.9M429.8 562.9L430.1 559.8L428.7 557.1M437.7 554.9L435.6 556.1L433.3 556.5L430.8 556.0L428.7 557.1M424.0 556.0L426.8 555.5M425.3 545.6L426.5 547.3L427.6 549.1L427.9 551.3M427.9 551.3L427.3 553.4L426.8 555.5M426.8 555.5L428.7 557.1M425.5 545.2L428.3 544.9L431.2 544.9M433.6 539.6L434.0 540.2M431.2 544.9L432.5 542.5L434.0 540.2M439.7 536.4L438.0 538.8L437.4 541.7M434.0 540.2L437.4 541.7M420.1 722.3L419.4 724.3L419.0 724.7M420.0 721.4L417.3 721.0L418.0 717.7L415.7 716.9L414.3 715.5L413.4 713.5M419.9 700.9L418.7 702.6M418.7 702.6L418.8 704.9L416.4 706.0L415.4 707.7L416.3 710.4L414.8 711.1M413.5 713.1L413.4 713.5M398.9 723.0L399.8 720.7M399.8 720.7L400.8 719.7M402.6 718.5L403.5 718.1L406.0 717.8L406.7 714.7L407.3 714.7M408.6 714.7L409.4 714.7L411.3 713.5M413.4 713.5L411.3 713.5M392.1 700.4L389.8 701.8L389.4 704.4L387.6 706.1L386.9 708.6M392.1 700.4L392.8 699.9M395.6 699.8L396.5 700.3L397.5 698.9M397.8 698.4L398.0 698.1L400.1 697.6M400.1 697.6L401.2 699.5L400.3 701.1M401.4 703.9L400.4 705.5L400.7 706.7M401.1 708.1L401.2 708.4L398.3 709.4L396.9 711.2L396.8 713.5M386.9 708.6L388.8 709.8L390.9 710.6L392.9 711.4L394.5 713.1L396.8 713.5M384.3 694.6L386.3 695.9L387.6 696.2M390.8 700.1L392.1 700.4M384.3 694.6L382.7 696.5L380.5 696.3L378.2 695.7L376.4 696.7L374.6 697.7M382.0 710.9L384.8 710.4L386.9 708.6M374.6 697.7L373.4 699.6L372.2 701.4M401.8 694.9L403.5 696.2L405.4 697.0L407.8 696.7L409.7 697.6L411.0 699.7L413.0 700.1L415.6 699.6L417.1 701.2L418.7 702.6M401.8 694.9L400.1 697.6M411.3 713.5L410.2 711.3L408.2 711.6M407.0 711.8L406.3 711.9L406.4 709.6M405.6 708.2L404.3 707.4L402.5 706.0L401.8 704.2M399.8 720.7L398.4 719.5M397.2 716.4L397.1 716.2L396.8 713.5M365.4 683.3L365.8 680.2L364.3 677.5M365.4 683.3L367.0 684.5L368.7 685.6L370.3 687.0L371.9 688.3L374.1 688.6M373.3 674.5L374.3 676.5L376.2 677.5L378.2 678.4L378.8 680.9L381.0 681.5M373.3 674.5L371.2 675.7L368.8 675.7L366.4 675.9L364.4 677.3M364.4 677.3L364.3 677.5M374.1 688.6L375.8 686.7L378.0 685.5L379.1 683.1L381.0 681.5M360.4 692.1L362.2 690.8L362.1 688.4L362.4 686.3L364.4 685.1L365.4 683.3M347.9 682.9L350.1 682.6L352.0 681.6L354.6 682.6L356.2 680.5L358.6 681.0L360.5 679.8L362.3 678.2L364.3 677.5M374.6 697.7L374.8 695.4L374.7 693.2L374.1 690.9L374.1 688.6M358.9 666.4L360.9 667.6L360.9 669.9L360.3 672.5L363.0 673.4L364.4 675.0L364.4 677.3M378.0 610.2L380.3 609.1M382.7 627.7L384.7 627.0M384.7 627.0L386.0 625.0L385.4 622.7L387.3 620.8L387.0 618.6L385.5 616.1L387.7 614.3L387.4 612.0M387.4 612.0L385.3 610.3L383.1 609.0L380.3 609.1M384.1 593.8L385.0 595.5M380.3 609.1L380.4 606.9L380.8 604.9L382.5 603.3L381.9 600.9L382.7 599.0L383.9 597.3L385.0 595.5M397.6 597.9L395.6 595.9L393.3 596.6L390.9 597.8L388.7 597.0L386.5 596.4M385.0 595.5L386.5 596.4M406.1 607.9L404.9 609.7L402.7 611.0L402.1 613.4L400.7 615.2M406.0 607.6L404.5 606.4L402.6 605.2L400.7 604.0L399.7 601.8M399.7 601.8L397.8 603.1L397.2 605.7L394.6 606.4L393.2 608.2M400.7 615.2L397.4 615.2M397.4 615.2L395.1 614.6L393.2 613.6L392.9 610.9M393.2 608.2L392.9 610.9M399.6 601.2L399.7 601.8M413.2 598.1L411.8 600.2L410.9 602.4L410.9 602.7M386.5 596.4L387.6 598.4L387.7 601.0L389.5 602.5L391.5 604.0L392.4 606.1L393.2 608.2M390.3 626.8L391.5 624.8L393.3 623.3L393.1 620.5L394.1 618.4L396.9 617.5L397.4 615.2M390.3 626.8L392.5 628.2L393.8 629.1M404.2 619.2L404.7 621.8L406.1 623.2M404.2 619.2L402.1 617.5L400.7 615.2M390.3 626.8L387.5 626.9L384.7 627.0M387.4 612.0L390.0 610.8L392.9 610.9M364.1 661.1L366.3 661.3L368.4 661.7L370.4 662.9L372.8 660.8L374.7 662.4L376.9 662.3M372.8 645.9L374.0 647.9L375.2 649.7L377.3 651.0L378.0 653.2M378.0 653.2L377.7 655.5L377.4 657.7L377.5 660.1L376.9 662.3M373.3 674.5L374.5 672.4L375.0 670.0L374.3 667.2L376.2 665.3L377.6 663.2M376.9 662.3L377.6 663.2M404.2 619.2L406.3 618.6L408.5 618.3L410.1 616.3L411.5 616.2M414.8 611.1L415.5 611.6M410.6 324.7L411.1 325.2L414.2 325.2L415.2 328.0M413.5 319.6L413.5 319.6L415.4 318.5L417.0 317.0L418.5 315.3L420.7 314.7L422.3 313.2M415.2 328.0L416.9 326.9L418.5 325.8L420.3 324.8L422.2 324.0L423.5 322.3L425.0 321.0M422.3 313.2L423.5 314.9L422.8 317.4L423.8 319.2L425.0 321.0M415.8 336.8L414.8 334.7L416.1 332.4L416.0 330.2L415.2 328.0M419.5 310.5L420.6 310.8L422.4 311.7M422.4 311.7L422.3 313.2M430.7 333.5L430.4 331.3L431.0 329.3L431.5 327.2M431.5 327.2L428.6 326.9L428.0 324.3L427.1 322.0L425.0 321.0M424.6 302.4L425.7 304.5L426.3 306.5L425.8 308.6M425.8 308.6L427.9 308.0L430.1 309.1L432.2 310.0L434.3 308.5L436.5 308.5M436.5 308.5L437.2 306.5L437.1 304.3L439.3 303.3M422.4 311.7L423.4 309.3L425.8 308.6M437.1 308.9L436.6 311.1L438.0 313.1L435.6 315.4L437.3 317.4L438.0 319.5L436.8 321.6L437.9 323.7M437.1 308.9L439.3 308.6L441.6 307.3L443.5 309.4L445.7 309.4L448.0 308.6L450.0 310.1M450.2 316.9L448.2 317.9L446.5 319.3L445.0 321.0L442.9 321.8L440.7 322.3L439.0 323.7M450.2 316.9L449.2 314.4L450.9 312.4M439.0 323.7L437.9 323.7M450.0 310.1L450.9 312.4M431.5 327.2L433.9 326.6L435.9 325.1L437.9 323.7M436.5 308.5L437.1 308.9M453.8 298.7L453.0 300.5L453.6 302.8L451.6 304.3L449.8 305.8L451.0 308.4L450.0 310.1M455.0 325.3L453.9 323.1L452.1 321.4L451.2 319.1L450.2 316.9M450.4 333.3L448.7 331.9L446.3 331.6L445.0 329.7L444.0 327.7L442.0 326.7L440.0 325.8L439.0 323.7M465.5 314.5L463.5 313.5L461.2 314.9L459.2 314.1L457.3 312.3L455.2 312.2L452.9 313.3L450.9 312.4M492.6 470.7L493.4 471.5M499.6 471.3L497.6 471.9L495.5 472.1L493.4 471.5M487.9 501.0L486.8 502.6L484.5 503.2L483.8 505.3L483.3 507.6L480.7 508.0L480.2 510.2L478.7 511.5L477.3 513.0M487.9 501.0L488.7 502.8L489.8 504.5L489.0 507.0L490.6 508.5L491.7 510.2L492.6 512.0M488.9 517.6L490.4 516.0L491.5 514.0L492.6 512.0M488.9 517.6L486.9 517.0L484.8 517.1L483.7 514.3L480.9 516.0L479.3 514.6L477.5 513.6M477.5 513.6L477.3 513.0M488.1 497.2L487.9 501.0M488.1 497.2L490.2 496.9L492.5 498.2L494.1 495.0L496.3 495.6M498.5 512.3L497.2 512.3L494.9 511.9L492.6 512.0M502.1 507.0L501.9 505.3L499.8 503.9L500.4 501.2L498.8 499.5L497.3 497.8L496.6 495.7M496.3 495.6L496.6 495.7M489.1 519.6L488.9 517.6M474.6 521.3L476.4 519.8L475.7 517.3L477.1 515.7L477.5 513.6M466.8 520.3L466.7 519.5M477.3 513.0L475.9 511.4L474.2 510.1L472.3 509.2M472.3 509.2L469.7 508.8L468.7 510.1M451.3 507.9L453.6 507.3L455.8 508.7L458.1 508.0M458.1 508.0L460.0 510.0L461.4 511.3M460.7 479.5L462.7 480.1L464.7 480.9L465.9 483.2L468.2 483.4M470.6 474.1L470.4 476.6L471.8 478.8L472.0 481.3M472.0 481.3L470.0 482.2L468.2 483.4M307.1 539.6L309.4 539.2L311.7 539.8L313.9 541.4L316.2 540.8L318.6 539.5L320.8 540.5M309.0 564.4L311.4 563.6L314.1 564.7L316.5 563.7M316.5 563.7L317.8 562.1L318.2 559.8L319.9 558.4L322.9 557.9L322.5 555.1L322.7 552.7L325.5 552.1L326.7 550.3L327.2 548.1M327.2 548.1L324.9 546.7L325.2 543.3L323.2 541.7L320.8 540.5M329.5 521.0L329.3 524.9M320.8 540.5L321.6 538.4L322.9 536.6L324.2 534.8L324.0 532.1L325.6 530.5L327.6 529.0L328.0 526.7L329.3 524.9M343.9 570.9L343.9 568.7L343.3 566.8L341.7 565.2L342.0 562.9L342.4 560.5L340.8 559.0L338.6 557.6L337.9 555.7L338.3 553.4L336.5 551.9M343.9 570.9L342.1 572.5L342.8 574.9M342.8 574.9L341.1 576.2L339.3 577.2L337.0 576.8L334.9 576.8L333.5 579.3L331.4 579.2L329.0 578.1L327.3 579.5M336.5 551.9L335.8 551.9M335.8 551.9L335.7 554.0L334.2 555.6L333.6 557.6L334.9 560.4L332.8 561.7L330.7 563.1L331.6 565.7L330.7 567.5L328.5 568.8L329.0 571.2L327.6 572.9L326.1 574.5M327.3 579.5L326.5 577.0L326.1 574.5M326.1 581.7L327.3 579.5M347.6 579.9L345.4 578.8L344.2 576.8L342.8 574.9M316.5 563.7L317.3 565.7L317.5 568.3L320.8 568.2L322.6 569.3L321.9 572.7L324.0 573.6L326.1 574.5M327.2 548.1L329.6 548.4L332.0 548.8L333.5 551.4L335.8 551.9M396.1 568.9L394.6 567.4L393.8 565.4L391.9 564.1L392.4 561.3L390.4 560.1M387.9 573.8L386.1 572.2L386.0 569.7L384.4 567.9L383.2 566.1M390.4 560.1L388.9 562.0L386.6 562.9L384.3 563.8L383.2 566.1M393.1 524.8L391.0 525.6L389.2 526.8L387.9 529.0L385.4 529.1L383.0 529.3L381.5 531.1L380.1 533.0L377.9 533.5L376.0 534.7M368.8 531.4L371.1 532.8L373.4 534.0L376.0 534.7M368.8 531.4L368.7 531.3M381.1 513.8L379.6 515.3L378.1 516.9L376.8 518.9L374.3 519.0L372.5 520.1L371.1 521.9L369.0 522.7L367.1 523.7M368.7 531.3L368.3 528.8L367.6 526.2L367.1 523.7M370.2 501.0L368.5 502.3L366.7 503.6L366.2 505.8L365.8 508.1L363.7 509.2L361.6 510.3L361.0 512.4L360.8 514.8L359.7 516.6M367.1 523.7L366.2 521.6L364.1 520.9L362.2 519.8L361.7 517.4L359.7 516.6M334.1 518.5L336.2 519.6L338.3 517.8L340.4 518.1L342.4 519.4L344.5 520.1L346.7 518.2L348.7 519.2L350.8 519.1M329.3 524.9L330.8 526.4L332.5 527.5L334.8 527.6L336.2 529.1L337.0 531.7L339.5 531.4L342.1 531.0L343.0 533.5L344.6 534.6L346.7 535.1M346.7 535.1L348.1 533.3L348.1 531.2L347.9 529.0L350.3 527.5L348.4 524.9L349.2 522.9L351.0 521.3L350.8 519.1M350.0 503.5L350.7 505.7L352.1 507.5L353.4 509.4L353.7 511.8L355.4 513.5L356.1 515.7M350.8 519.1L352.2 517.4L355.1 518.1L356.1 515.7M356.1 515.7L359.7 516.6M434.8 550.0L437.5 552.8M434.8 550.0L434.5 548.2M434.5 548.2L437.1 547.3L437.3 544.8L438.3 542.8M437.5 552.8L439.3 551.4L439.7 548.7L442.1 547.9M442.1 547.9L442.1 547.3M442.1 547.3L441.5 544.9L439.7 543.2M439.7 543.2L438.3 542.8M437.7 554.9L437.5 552.8M427.9 551.3L430.1 550.4L432.4 549.8L434.8 550.0M431.2 544.9L433.0 546.4L434.5 548.2M437.4 541.7L438.3 542.8M446.7 550.3L443.9 550.1L442.1 547.9M445.8 544.5L443.4 545.2L442.1 547.3M442.8 540.9L439.7 543.2M392.0 672.2L394.0 671.6L395.9 670.8L398.1 671.6L400.1 670.8M392.0 672.2L390.4 673.8L390.4 676.1L389.4 678.0L388.0 679.6L387.6 680.7M400.1 670.8L401.2 672.7L401.8 673.6M403.3 667.6L401.9 669.4L400.1 670.8M403.3 667.6L402.8 665.5L400.9 664.3L400.9 663.6M398.4 658.8L398.2 658.7L397.1 657.0L396.8 654.8L395.4 653.2M386.2 665.7L387.7 664.2L387.4 661.6L388.0 659.5L389.8 658.1L391.0 656.3L392.1 654.5L393.4 652.8M386.2 665.7L388.1 666.9L388.7 669.3L390.4 670.7L392.0 672.2M395.4 653.2L393.4 652.8M381.0 681.5L383.1 681.8L385.2 680.7L386.6 681.3M377.6 663.2L379.3 665.2L382.1 663.8L384.1 664.8L386.2 665.7M403.9 667.3L403.3 667.6M384.3 694.6L385.2 692.8L386.2 691.0L384.1 688.2L384.7 687.6M401.8 694.9L401.8 694.4M506.6 491.7L504.7 493.4L502.8 495.0L499.5 493.6L497.7 495.7M506.6 491.7L508.2 493.1M497.7 495.7L499.9 496.5L501.3 498.7L503.7 499.0L506.0 499.2M499.1 483.1L500.8 481.3L502.6 479.6L505.2 478.9L506.1 477.9M499.1 483.1L499.0 485.2L498.8 487.4L497.3 489.2L496.7 491.3L497.3 493.6L496.3 495.6M496.6 495.7L497.7 495.7M510.2 485.5L510.3 485.8L508.3 487.5L506.1 489.1L506.6 491.7M487.5 496.7L484.3 495.6M487.5 496.7L488.0 494.7L487.7 492.6L487.6 490.5L488.3 488.6L489.0 486.7L489.1 484.6L489.2 482.6L490.0 480.7M484.3 495.6L482.2 494.5L482.9 491.7L481.6 490.1L478.2 489.8L478.6 487.1L479.0 484.5L475.9 483.9L475.5 481.8M490.0 480.7L489.2 479.4M489.2 479.4L487.2 478.7L485.0 479.1L483.0 478.5L481.0 478.1M481.0 478.1L478.6 478.6L477.6 481.0L475.5 481.8M488.1 497.2L487.5 496.7M499.1 483.1L496.9 482.3L494.5 482.1L491.9 482.7L490.0 480.7M493.4 471.5L492.0 473.3L490.7 475.1L489.9 477.3L489.2 479.4M482.4 471.7L482.4 471.9L480.2 473.7L482.0 476.2L481.0 478.1M472.0 481.3L475.5 481.8M458.8 492.8L458.9 495.0L460.1 496.7L462.4 497.6L462.9 499.6M458.8 492.8L460.2 491.3L462.3 490.6L463.4 488.8L464.4 487.0L465.3 484.9L467.7 484.6M467.7 484.6L469.2 486.5L469.8 488.7L469.8 491.0L471.8 492.8L472.2 495.0L471.5 497.6L472.0 499.8M462.9 499.6L465.2 499.9L467.4 500.0L469.7 499.8L471.9 499.9M471.9 499.9L472.0 499.8M451.3 491.7L453.8 492.5L456.3 492.8L458.8 492.8M458.1 508.0L459.2 505.9L461.6 504.5L462.1 502.0L462.9 499.6M468.2 483.4L467.7 484.6M484.3 495.6L482.6 497.3L480.2 497.1L477.6 496.1L476.6 499.8L474.2 499.4L472.0 499.8M472.3 509.2L471.9 506.8L471.7 504.5L472.9 502.2L471.9 499.9M336.5 551.9L338.0 551.2M346.7 535.1L347.1 537.3L348.3 539.1M338.0 551.2L339.3 549.3L341.5 548.2L341.0 544.8L344.2 544.6L345.3 542.5L346.3 540.4L348.3 539.1M368.7 531.3L367.1 532.9L364.8 532.7L362.3 532.4L361.4 535.5L359.2 535.6L356.7 535.3L355.8 538.3L353.7 538.6L351.7 539.3M351.7 539.3L348.3 539.1M384.2 547.5L385.1 549.4L386.4 551.0L389.0 551.3L389.0 554.2L391.4 554.6M384.2 547.5L386.3 546.8L387.2 544.5L389.2 543.7L391.4 543.1L392.2 540.7L394.2 539.9L396.2 538.9L397.2 536.8M391.4 554.6L393.9 554.8L396.3 553.2L398.8 554.0M398.8 554.0L400.0 552.3L400.3 550.0L401.5 548.3L403.1 546.7M403.1 546.7L403.0 544.2L399.5 543.5L399.8 540.7L398.2 538.9L397.2 536.8M398.3 532.4L397.2 534.5L397.2 536.8M376.0 534.7L376.2 536.9L378.3 538.1L379.9 539.5L378.7 542.5L381.4 543.4L382.1 545.3L382.9 547.2M382.9 547.2L384.2 547.5M408.5 563.3L406.4 562.4L404.8 560.8L403.4 558.9L401.7 557.5L399.7 556.3L398.8 554.0M390.4 560.1L391.0 557.4L391.4 554.6M406.6 546.3L403.1 546.7M367.4 569.6L369.6 568.7L370.9 566.2L373.5 566.3L375.6 565.4M367.4 569.6L365.1 568.5L365.5 565.2L363.0 564.1L361.6 562.3M375.6 565.4L376.7 563.5L377.0 561.3L379.3 559.7L380.0 557.6L379.5 555.1L381.1 553.4L381.0 551.0L381.2 548.7M381.2 548.7L379.0 549.0L376.8 548.9L374.7 549.8L372.6 550.2L370.3 549.8L368.5 551.5L366.7 553.2L364.4 553.0M361.6 562.3L361.0 560.2M361.0 560.2L361.6 558.3L362.1 556.3L362.9 554.5M364.4 553.0L362.9 554.5M367.5 574.4L369.1 572.0L367.4 569.6M383.2 566.1L380.7 565.4L378.1 565.9L375.6 565.4M343.9 570.9L346.0 570.1L348.0 569.3L350.4 569.2L351.3 566.1L354.2 567.2L355.9 565.6L357.4 563.8L359.9 563.8L361.6 562.3M382.9 547.2L381.2 548.7M368.8 531.4L368.4 533.4L367.7 535.3L367.4 537.3L367.6 539.3L365.6 541.0L366.0 543.1L367.3 545.4L364.6 546.9L364.7 549.0L365.2 551.1L364.4 553.0M338.0 551.2L339.9 552.1L341.6 553.3L343.2 555.1L345.6 554.5L347.3 555.8L348.7 557.8L351.2 557.0L353.2 557.5L354.8 559.3L357.0 559.2L359.4 558.8L361.0 560.2M351.7 539.3L352.1 541.6L353.3 543.4L355.1 544.6L355.2 547.2L358.1 547.6L358.0 550.2L358.8 552.2L361.6 552.8L362.9 554.5M388.0 649.9L391.3 650.6M388.0 649.9L386.2 648.3L386.4 645.8L386.1 643.5L383.5 642.2L382.9 640.1L382.6 637.8M391.3 650.6L391.8 648.2L391.6 645.7L392.7 643.5L393.9 641.6M382.6 637.8L384.7 638.4L386.8 639.1L389.2 638.5L390.9 640.5L393.2 640.2M393.2 640.2L393.9 641.1M378.0 653.2L379.8 651.8L382.1 652.1L383.4 649.5L386.1 650.8L388.0 649.9M393.4 652.8L391.3 650.6M382.6 637.8L382.6 637.8M393.3 632.1L394.4 633.9L394.8 636.1L392.7 638.0L393.2 640.2M395.4 653.2L396.5 652.8" fill="none" stroke="rgba(100,100,100,0.66)" stroke-width="0.9" stroke-linejoin="round"/>
<path d="M290.1 635.1L296.1 637.1L296.8 637.3L297.0 637.4L300.9 638.4L298.1 637.5L305.1 639.1L310.2 644.2L313.2 654.2L314.2 666.2L314.6 678.3L313.8 686.3L312.2 692.3L311.2 700.3L312.2 710.4L311.8 718.4L322.2 720.8L332.2 719.4L342.3 723.4L350.0 724.4L354.9 724.8L358.8 726.3L362.2 727.3L362.7 728.8L363.7 732.7L366.7 734.2L369.6 734.8L372.0 734.2L374.0 730.7L375.5 728.8L378.4 730.2L380.4 729.7L383.3 727.8L386.2 726.3L388.2 724.4L391.1 722.4L393.1 720.0L396.0 720.9L398.5 723.4L397.5 726.0L400.0 726.8L402.9 728.8L405.8 729.9L407.8 728.3L407.3 724.8L404.8 721.9L400.9 719.5L396.5 719.1L395.1 719.5L394.6 717.5L396.2 717.0L396.5 716.5L397.4 716.7L398.0 716.5L398.4 716.9L399.0 717.0L401.9 718.5L404.8 719.5L407.3 719.0L408.8 720.4L410.7 721.4L413.7 720.9L417.6 721.9L418.1 724.4L421.5 726.3L425.4 727.8L428.4 727.3L431.3 724.8L433.7 724.4L434.4 721.9L432.8 717.0L430.3 711.1L427.4 706.2L423.5 702.8L418.6 699.9L413.7 696.0L408.8 693.0L403.9 693.3L400.0 695.0L397.5 697.9L394.8 700.2L394.8 700.2L394.9 700.2L394.9 700.2L395.0 700.2L395.0 700.2L395.0 700.2L395.1 700.2L395.1 700.3L395.1 700.3L395.2 700.3L395.2 700.3L395.2 700.4L395.2 700.4L395.3 700.4L395.3 700.5L396.3 703.6L399.2 706.4L403.5 707.8L407.4 708.8L407.4 708.8L407.5 708.8L407.5 708.9L407.5 708.9L407.6 708.9L407.6 708.9L407.6 709.0L407.6 709.0L407.7 709.0L407.7 709.1L407.7 709.1L407.7 709.2L408.2 714.0L409.2 718.4L409.2 718.5L409.2 718.5L409.2 718.5L409.2 718.6L409.2 718.6L409.2 718.6L409.2 718.7L409.1 718.7L409.1 718.7L409.1 718.8L409.1 718.8L409.0 718.8L409.0 718.8L409.0 718.9L408.9 718.9L408.9 718.9L408.8 718.9L408.8 718.9L408.8 718.9L408.7 718.9L408.7 718.9L408.7 718.9L408.6 718.9L408.6 718.8L408.6 718.8L408.5 718.8L408.5 718.8L408.5 718.7L408.5 718.7L408.4 718.7L408.4 718.6L408.4 718.6L407.4 714.2L407.4 714.1L406.9 709.5L403.3 708.6L403.3 708.6L398.9 707.1L398.8 707.1L398.8 707.0L398.8 707.0L398.7 707.0L395.7 704.1L395.7 704.1L395.7 704.0L395.7 704.0L395.6 704.0L395.6 703.9L394.5 700.7L394.5 700.7L394.5 700.7L394.5 700.6L394.5 700.6L394.5 700.5L394.5 700.5L394.5 700.5L394.5 700.4L394.6 700.4L394.6 700.4L392.1 699.4L388.2 700.9L384.3 702.8L380.4 702.3L378.9 700.6L379.4 698.9L383.3 698.4L387.2 696.9L389.2 694.5L389.7 691.1L388.2 688.1L385.9 686.2L384.7 687.4L385.9 686.2L385.3 685.7L385.7 682.2L389.2 679.8L389.3 679.8L389.6 679.5L391.3 678.5L393.1 677.3L393.1 677.3L393.5 677.1L395.4 677.5L394.7 678.1L396.0 678.8L398.2 676.7L398.4 676.6L401.8 674.6L402.2 672.3L403.4 670.0L403.0 670.4L403.8 668.8L404.3 666.3L401.3 663.9L398.9 660.0L397.9 656.0L396.4 652.1L393.5 650.2L395.5 648.2L394.5 644.3L394.0 641.3L396.4 639.4L400.4 636.4L401.3 633.0L399.4 631.1L394.5 632.0L391.5 631.7L386.2 631.7L385.7 630.1L391.5 629.6L395.0 629.1L397.4 629.1L400.4 627.6L403.3 626.7L403.6 626.2L405.6 624.2L407.6 621.2L410.1 618.2L413.1 614.7L416.1 611.2L412.1 610.2L407.1 610.2L406.1 607.2L403.1 604.1L400.1 601.1L395.0 600.1L390.5 599.1L395.0 598.6L400.1 598.6L403.1 600.1L406.1 602.1L410.1 602.6L413.6 604.1L416.9 602.8L420.6 601.7L424.2 600.9L427.9 599.8L430.9 599.5L429.8 598.0L429.0 596.1L430.1 594.7L433.1 593.2L435.6 592.1L433.1 591.0L430.5 589.5L430.1 587.3L431.6 585.1L433.4 582.9L433.8 581.1L430.1 580.0L427.9 579.6L425.0 578.9L422.0 578.1L418.4 577.0L416.9 575.9L418.4 574.8L422.0 574.3L425.0 574.0L426.5 572.6L429.4 572.3L432.3 572.6L435.3 571.5L438.2 572.3L440.8 572.6L441.5 574.8L443.0 577.0L444.8 578.5L445.9 576.3L445.2 574.8L445.6 571.9L447.0 569.7L450.0 567.5L450.7 563.8L451.1 559.4L450.7 555.0L451.6 548.4L450.6 540.4L449.6 534.3L447.6 530.3L449.6 525.3L453.7 521.3L457.7 516.3L461.7 511.3L466.7 509.3L470.7 511.3L469.7 515.3L466.7 519.3L461.7 520.3L459.7 524.3L462.7 528.3L466.7 526.3L470.7 524.3L472.7 527.3L470.7 531.3L471.7 536.3L474.7 538.4L476.3 534.3L475.7 528.3L477.7 522.3L481.7 518.3L484.8 520.3L483.8 524.3L485.8 528.3L488.8 531.3L490.8 528.3L492.8 522.3L494.8 517.3L498.8 512.3L502.8 506.2L505.8 500.2L508.8 492.2L510.8 486.2L507.8 480.2L503.8 474.1L498.8 470.5L488.8 470.5L478.7 472.1L468.7 471.1L462.7 467.1L457.7 461.1L457.9 459.5L452.0 464.4L449.0 470.2L448.1 478.1L449.6 481.0L449.6 481.0L449.6 481.1L449.6 481.1L449.6 481.2L449.6 481.2L449.6 481.2L449.6 481.3L449.6 481.3L449.6 481.4L449.6 481.4L449.6 481.5L449.5 481.5L449.5 481.5L449.5 481.5L449.4 481.6L449.4 481.6L449.4 481.6L449.3 481.6L449.3 481.6L449.2 481.6L449.2 481.6L449.2 481.6L449.1 481.6L449.1 481.6L449.0 481.6L449.0 481.6L448.9 481.6L448.9 481.5L448.9 481.5L448.9 481.5L448.8 481.4L448.8 481.4L447.2 478.4L447.2 478.4L447.2 478.3L447.2 478.3L447.2 478.2L447.2 478.2L447.2 478.1L448.2 470.0L448.2 470.0L448.2 469.9L448.2 469.9L451.2 463.9L451.2 463.9L451.2 463.8L451.3 463.8L451.3 463.8L457.4 458.8L457.5 458.7L457.5 458.7L457.5 458.7L457.6 458.7L457.6 458.7L457.7 458.7L457.7 458.7L457.7 458.7L457.8 458.7L457.8 458.7L457.9 458.7L457.9 458.7L458.0 458.7L458.0 458.8L458.0 458.8L458.0 458.8L458.3 457.1L459.7 450.1L458.6 445.5L454.7 444.4L449.6 445.2L445.6 444.4L440.6 446.0L436.6 446.4L431.6 449.7L423.5 453.1L413.5 454.9L412.5 454.1L422.5 451.7L430.6 447.6L434.6 444.4L438.6 444.0L443.6 442.0L449.6 442.4L454.7 441.6L457.9 442.7L457.7 442.0L454.7 434.0L452.2 434.0L451.2 426.5L451.0 419.5L451.6 412.5L453.0 406.5L455.1 400.8L455.7 400.4L451.8 401.3L451.7 401.3L451.6 401.3L451.5 401.3L451.4 401.3L451.3 401.3L451.3 401.2L446.5 399.2L446.4 399.2L446.3 399.1L438.3 393.4L438.2 393.4L431.6 387.8L426.7 385.1L420.3 386.6L420.3 386.6L417.4 387.2L417.4 388.7L413.4 388.4L409.4 387.3L405.4 388.7L401.4 388.7L398.8 389.3L397.4 392.0L395.4 395.4L393.4 398.7L392.1 402.0L391.4 406.0L390.1 408.0L389.2 404.7L390.1 401.4L392.1 398.7L392.8 396.7L388.1 395.6L380.1 395.8L374.7 397.0L369.4 398.8L366.7 400.4L364.7 402.0L361.4 404.7L358.7 410.0L358.1 414.0L359.4 419.4L360.1 423.4L358.7 427.4L358.1 431.4L359.4 435.4L362.1 437.4L362.7 440.7L360.1 444.0L361.4 447.4L366.7 445.4L369.4 448.7L370.1 454.1L368.7 458.1L366.7 460.7L365.4 463.4L366.7 467.4L370.7 469.4L373.4 466.1L374.1 468.7L370.7 470.7L366.7 470.1L364.7 466.1L364.1 462.1L362.7 458.1L358.7 456.7L354.7 457.4L352.1 459.4L349.4 463.4L348.1 467.4L346.7 464.7L347.4 460.7L349.4 456.7L351.4 452.7L353.4 450.1L356.1 447.4L358.1 442.7L356.1 439.4L353.4 434.0L350.7 431.4L346.7 430.0L341.4 429.4L337.4 430.0L332.7 432.0L329.4 444.7L326.7 448.7L324.0 452.7L321.4 458.1L320.7 463.4L320.0 468.7L319.9 470.0L320.0 470.0L320.7 475.3L318.7 479.3L313.4 480.7L309.4 479.3L308.0 475.3L304.7 476.0L302.7 478.0L302.0 476.0L304.7 473.3L304.0 470.0L307.2 470.0L306.7 468.7L304.7 463.4L302.7 462.1L303.4 466.1L304.0 469.4L300.0 468.1L294.7 465.4L288.7 463.4L283.3 464.1L281.3 466.1L280.0 462.1L276.7 459.4L273.3 455.4L274.7 450.1L276.7 444.7L278.0 439.4L278.7 435.4L280.0 433.8L282.0 439.4L286.7 444.7L291.4 448.1L294.7 446.7L298.7 446.1L303.4 446.1L301.9 443.1L300.0 439.6L297.9 437.0L297.6 432.4L300.0 429.0L303.8 427.1L307.0 424.4L309.6 419.1L311.4 414.7L312.7 411.4L313.4 407.4L316.0 405.8L321.4 406.0L325.4 404.7L328.0 402.0L329.4 399.4L332.7 400.0L334.7 402.0L337.4 398.7L342.7 396.0L348.1 394.0L353.4 392.0L358.7 396.4L364.1 399.4L366.7 397.5L369.4 394.9L374.7 392.3L380.1 390.9L386.8 389.6L392.1 387.7L396.1 386.0L396.8 384.0L399.8 383.1L400.8 385.7L403.4 387.1L407.4 386.0L408.8 382.7L410.8 381.3L414.8 383.3L416.4 385.6L419.9 384.8L426.6 383.2L426.7 383.2L426.8 383.2L426.8 383.2L426.9 383.2L427.0 383.2L427.1 383.2L427.2 383.3L427.2 383.3L432.5 386.3L432.6 386.4L432.7 386.4L439.4 392.0L447.2 397.6L451.7 399.5L457.5 398.1L457.6 398.1L457.7 398.1L457.8 398.1L457.8 398.1L457.9 398.1L458.0 398.2L459.7 393.4L461.7 387.4L464.3 380.4L467.1 373.4L470.7 367.3L474.3 362.7L475.7 358.3L475.3 353.3L474.1 350.0L473.7 344.4L473.2 338.6L473.7 332.7L474.8 328.8L476.8 327.3L475.8 325.3L473.4 321.9L470.4 318.0L468.0 314.1L466.2 310.6L465.2 306.7L465.5 302.8L466.5 298.9L468.5 295.0L470.9 291.5L473.9 288.1L476.8 285.2L479.7 282.7L482.7 280.8L483.9 279.6L484.2 278.6L482.7 277.4L480.7 277.3L477.8 278.3L475.1 280.4L470.7 285.1L465.7 290.1L460.7 294.5L454.7 298.1L447.6 301.1L439.6 303.1L431.6 302.7L424.6 302.1L421.5 307.1L417.5 313.1L413.5 319.2L410.1 325.2L407.5 331.2L404.1 338.2L400.5 345.3L396.1 352.7L392.0 359.3L387.4 364.3L382.0 368.3L377.4 370.0L373.4 372.0L366.7 374.0L360.1 375.1L353.4 374.7L345.4 372.7L340.1 374.0L334.7 376.7L328.0 380.0L322.7 382.0L317.4 380.7L312.0 379.1L307.4 378.3L305.4 381.3L302.7 385.3L299.4 390.0L295.4 395.4L291.4 401.4L287.4 406.7L284.0 412.7L281.3 418.7L278.7 424.7L276.7 431.4L276.3 435.4L275.7 439.4L274.0 444.7L272.0 450.1L270.0 456.7L268.7 463.4L267.3 470.1L266.0 470.0L266.4 478.0L266.7 486.0L266.9 496.7L266.7 507.4L266.0 518.0L265.6 528.7L266.0 539.4L266.7 550.1L268.0 559.9L268.1 560.0L269.1 565.9L270.1 572.7L271.1 579.6L271.4 586.4L270.6 593.3L269.1 600.2L267.1 607.0L265.2 613.9L263.2 620.7L266.7 622.7L270.6 625.1L274.5 628.1L278.4 631.0L281.3 633.5L282.3 630.5L280.4 627.6L278.4 623.7L277.4 619.7L278.4 616.8L281.3 616.0L283.3 617.8L282.3 620.7L284.3 623.7L287.2 627.6L290.2 631.5L293.1 634.4L296.6 637.1ZM272.7 502.0L268.3 502.0L267.7 494.0L267.7 486.7L270.0 488.7L272.7 494.0L277.3 500.0L281.3 504.0L280.0 508.0L277.3 508.7L276.0 504.0ZM269.1 563.4L268.3 552.7L267.7 544.7L268.3 536.7L273.3 538.0L278.7 542.7L282.0 548.7L284.7 555.4L287.0 560.0L287.7 560.0L287.9 562.0L288.0 562.1L288.7 567.4L287.8 568.7L287.7 569.3L286.7 570.3L286.0 571.4L283.6 573.4L282.3 574.7L281.3 575.4L278.7 579.0L271.3 579.0L270.0 571.4ZM406.8 706.2L402.9 704.8L399.5 702.3L397.5 698.4L399.0 699.4L400.9 702.3L404.8 703.8L408.8 704.3L410.7 705.7L413.7 709.2L415.6 713.1L414.6 714.6L412.7 711.1L409.7 708.2ZM427.7 727.3L427.6 727.2L427.6 727.2L427.6 727.2L423.2 723.3L418.3 719.9L418.3 719.9L418.2 719.8L418.2 719.8L418.2 719.8L418.2 719.7L418.1 719.7L418.1 719.6L418.1 719.6L418.1 719.5L418.1 719.5L418.1 719.4L418.1 719.4L418.1 719.3L418.1 719.3L418.2 719.3L418.2 719.2L418.2 719.2L418.3 719.1L418.3 719.1L418.3 719.1L418.4 719.1L418.4 719.0L418.5 719.0L418.5 719.0L418.6 719.0L418.6 719.0L418.7 719.0L418.7 719.0L418.8 719.0L418.8 719.0L418.8 719.1L418.9 719.1L423.8 722.5L423.8 722.5L428.2 726.4L428.3 726.5L428.3 726.5L428.3 726.5L428.3 726.6L428.4 726.6L428.4 726.7L428.4 726.7L428.4 726.8L428.4 726.8L428.4 726.9L428.4 726.9L428.4 727.0L428.4 727.0L428.3 727.1L428.3 727.1L428.3 727.1L428.2 727.2L428.2 727.2L428.2 727.2L428.1 727.2L428.1 727.3L428.0 727.3L428.0 727.3L427.9 727.3L427.9 727.3L427.8 727.3L427.8 727.3L427.7 727.3ZM331.4 428.7L329.4 424.7L328.0 420.0L329.4 416.7L332.7 414.7L334.0 411.4L334.7 408.0L332.7 406.0L329.4 408.0L326.7 410.0L322.7 412.4L317.4 414.0L313.1 416.0L311.5 420.2L308.8 425.5L306.0 428.2L304.0 429.5L304.6 432.7L303.0 436.2L301.9 438.8L303.5 442.0L305.1 445.5L303.9 446.1L304.0 446.1L306.0 448.1L300.0 449.4L296.0 448.7L293.4 450.1L296.0 453.4L299.4 456.7L302.7 462.1L303.4 458.7L306.0 455.4L308.0 450.1L310.0 446.7L312.0 450.1L311.4 455.4L313.4 458.1L316.0 456.7L318.7 452.7L322.7 448.7L326.7 442.7L328.7 439.4L330.7 435.4L332.7 432.0Z" fill="none" fill-rule="evenodd" stroke="rgba(96,100,106,0.55)" stroke-width="0.9" stroke-linejoin="round"/>
<path d="M338.7 423.4L339.8 426.7L342.1 429.4L345.4 428.7L348.7 427.4L349.4 424.0L345.4 422.7Z" fill="#48A7FF" fill-rule="evenodd" stroke="rgba(96,100,106,0.55)" stroke-width="0.9" stroke-linejoin="round"/>
<path d="M348.7 412.7L349.7 416.0L352.1 419.1L353.4 419.4L350.7 414.7Z" fill="#48A7FF" fill-rule="evenodd" stroke="rgba(96,100,106,0.55)" stroke-width="0.9" stroke-linejoin="round"/>
<path d="M502.8 355.3L505.8 359.3L510.8 361.3L513.9 365.3L517.9 364.3L518.9 359.3L521.9 354.3L526.9 351.3L531.9 350.3L531.3 345.9L524.9 346.3L516.9 347.9L507.8 350.3Z" fill="#178FFF" fill-rule="evenodd" stroke="rgba(96,100,106,0.55)" stroke-width="0.9" stroke-linejoin="round"/>
<path d="M559.4 441.0L558.6 443.6L560.6 446.4L563.0 446.0L562.8 440.0Z" fill="#3A9FFF" fill-rule="evenodd" stroke="rgba(96,100,106,0.55)" stroke-width="0.9" stroke-linejoin="round"/>
<path d="M475.7 553.4L473.1 557.4L474.7 562.4L475.7 568.5L474.3 574.5L473.7 582.5L475.7 588.5L479.7 589.5L482.8 586.5L484.8 578.5L486.8 570.5L484.8 566.5L479.7 564.4L477.7 558.4Z" fill="#3A9FFF" fill-rule="evenodd" stroke="rgba(96,100,106,0.55)" stroke-width="0.9" stroke-linejoin="round"/>
<path d="M449.2 590.6L451.2 592.3L454.7 593.1L456.8 591.6L456.8 588.1L455.2 585.6L453.2 589.1Z" fill="#3A9FFF" fill-rule="evenodd" stroke="rgba(96,100,106,0.55)" stroke-width="0.9" stroke-linejoin="round"/>
<path d="M431.6 575.9L434.2 577.0L437.1 576.5L440.0 575.6L439.7 574.0L436.0 573.7L433.1 574.3Z" fill="#3A9FFF" fill-rule="evenodd" stroke="rgba(96,100,106,0.55)" stroke-width="0.9" stroke-linejoin="round"/>
<path d="M434.2 580.0L434.9 581.6L436.7 580.7L436.0 579.2Z" fill="#3A9FFF" fill-rule="evenodd" stroke="rgba(96,100,106,0.55)" stroke-width="0.9" stroke-linejoin="round"/>
<path d="M463.3 559.6L464.3 561.6L467.7 562.4L466.7 560.4Z" fill="#3A9FFF" fill-rule="evenodd" stroke="rgba(96,100,106,0.55)" stroke-width="0.9" stroke-linejoin="round"/>
<path d="M463.3 560.0L465.3 562.0L467.3 561.5L466.3 560.0Z" fill="#3A9FFF" fill-rule="evenodd" stroke="rgba(96,100,106,0.55)" stroke-width="0.9" stroke-linejoin="round"/>
<path d="M285.1 636.1L286.1 640.1L289.1 644.2L292.1 649.2L295.1 653.2L297.7 652.2L296.1 646.2L294.1 641.1L290.1 637.1Z" fill="#58ADFF" fill-rule="evenodd" stroke="rgba(96,100,106,0.55)" stroke-width="0.9" stroke-linejoin="round"/>
<path d="M302.1 662.2L302.7 664.8L305.7 665.2L307.2 662.6L305.1 660.6Z" fill="#58ADFF" fill-rule="evenodd" stroke="rgba(96,100,106,0.55)" stroke-width="0.9" stroke-linejoin="round"/>
<path d="M299.1 675.3L297.1 681.3L296.5 688.3L298.1 694.3L302.1 695.3L304.1 690.3L305.1 684.3L307.2 678.3L306.2 675.3Z" fill="#58ADFF" fill-rule="evenodd" stroke="rgba(96,100,106,0.55)" stroke-width="0.9" stroke-linejoin="round"/>
<path d="M410.2 655.5L411.1 660.7L413.6 660.4L414.1 657.5L412.6 655.1Z" fill="#58ADFF" fill-rule="evenodd" stroke="rgba(96,100,106,0.55)" stroke-width="0.9" stroke-linejoin="round"/>
<path d="M405.3 664.8L405.7 667.3L407.7 668.0L409.2 665.8L407.7 664.1Z" fill="#58ADFF" fill-rule="evenodd" stroke="rgba(96,100,106,0.55)" stroke-width="0.9" stroke-linejoin="round"/>
<path d="M401.3 650.6L403.1 652.7L404.8 651.3L403.3 650.0Z" fill="#58ADFF" fill-rule="evenodd" stroke="rgba(96,100,106,0.55)" stroke-width="0.9" stroke-linejoin="round"/>
<path d="M389.1 686.4L390.6 688.8L392.0 687.9L391.1 685.9Z" fill="#58ADFF" fill-rule="evenodd" stroke="rgba(96,100,106,0.55)" stroke-width="0.9" stroke-linejoin="round"/>
<path d="M389.2 686.7L390.6 688.8L391.9 687.4L390.6 685.9Z" fill="#58ADFF" fill-rule="evenodd" stroke="rgba(96,100,106,0.55)" stroke-width="0.9" stroke-linejoin="round"/>
<path d="M558.5 442.0L560.0 446.0L563.0 446.5L568.0 443.0L571.5 438.5L563.0 440.0Z" fill="#2F9AFF" fill-rule="evenodd" stroke="rgba(96,100,106,0.55)" stroke-width="0.9" stroke-linejoin="round"/>
<path d="M413.1 639.9L410.6 642.3L413.1 643.8L414.6 646.7L412.1 648.7L410.6 649.7L414.1 651.1L417.0 652.6L418.5 656.0L419.0 660.9L418.5 665.8L417.5 667.8L420.0 669.7L420.2 669.9L418.5 667.2L422.4 672.2L425.8 674.2L427.8 676.6L428.3 680.5L427.9 682.2L425.7 678.8L427.6 686.3L428.4 686.3L428.8 686.9L430.6 686.6L430.4 686.3L430.6 686.3L428.6 682.3L428.9 681.0L428.8 681.0L428.3 677.6L429.5 677.9L429.6 677.3L433.9 678.2L436.6 677.6L438.6 679.5L438.7 679.7L440.6 680.3L439.9 681.8L442.5 686.4L438.6 687.4L436.2 686.7L434.6 688.3L436.6 692.3L442.6 690.3L448.6 692.3L454.7 694.3L460.7 696.3L466.7 699.3L472.3 702.2L474.5 701.5L479.1 698.3L479.2 698.3L479.2 698.3L482.4 696.8L482.4 696.8L482.5 696.8L485.9 695.9L485.9 695.9L486.0 695.9L486.0 695.9L486.1 695.9L486.1 695.9L486.1 695.9L486.2 695.9L486.2 695.9L486.3 695.9L486.3 696.0L486.3 696.0L486.4 696.0L486.4 696.1L486.4 696.1L486.4 696.1L486.4 696.2L486.4 696.2L486.4 696.3L486.4 696.3L486.4 696.4L486.4 696.4L486.4 696.4L486.4 696.5L486.4 696.5L486.4 696.6L486.3 696.6L486.3 696.6L486.3 696.7L486.2 696.7L486.2 696.7L486.2 696.7L486.1 696.7L482.8 697.6L479.6 699.1L476.9 700.9L478.7 700.3L479.2 700.0L473.8 704.5L474.7 709.2L476.6 713.4L480.3 713.0L484.0 711.1L487.8 709.2L486.8 706.4L483.6 707.3L483.1 704.5L485.9 700.8L490.1 699.9L489.6 697.1L484.0 698.0L480.2 699.6L482.8 698.3L488.8 696.3L492.8 691.3L495.8 684.3L497.8 676.3L498.4 668.2L500.4 663.2L501.2 660.6L498.8 660.2L495.8 654.2L491.8 647.2L486.8 641.1L486.8 636.9L489.6 634.5L492.9 632.2L489.6 628.0L486.8 622.4L484.0 616.8L482.2 612.1L480.3 611.2L479.2 613.1L479.4 618.7L480.3 625.7L477.5 627.1L473.3 624.7L470.3 622.2L465.3 618.2L460.3 614.7L470.0 619.3L467.9 617.8L463.0 614.9L458.1 612.4L456.2 612.9L455.2 616.9L455.0 612.0L453.3 611.5L452.8 612.9L448.4 613.9L445.0 614.4L444.6 610.5L443.5 610.5L443.7 614.4L442.5 615.9L438.6 617.8L434.6 619.8L430.7 622.7L426.8 625.7L423.4 627.6L419.0 628.1L416.5 627.6L416.0 624.7L414.6 621.8L411.1 622.2L407.7 623.7L404.3 626.2L402.3 630.1L407.2 635.0ZM470.5 626.6L471.0 623.8L474.7 626.6L478.4 628.0L481.2 629.1L482.4 631.7L478.4 632.7L474.7 633.6L471.9 634.7L470.2 636.2L469.3 638.5L466.5 638.7L466.9 635.5L468.6 632.7L470.0 629.9ZM411.5 660.6L414.1 660.2L413.5 655.2L410.5 655.2ZM406.5 667.8L409.5 667.2L408.9 663.2L405.5 664.2ZM441.5 696.2L439.4 697.0L440.0 700.6L442.5 700.5L443.4 698.0ZM454.0 702.0L450.5 699.3L448.6 699.5L449.5 701.4L453.0 703.6L457.0 704.6L457.8 703.8ZM459.8 708.0L461.5 710.3L465.0 711.0L466.0 709.0L463.0 707.5ZM457.0 725.1L460.7 729.8L464.4 733.0L467.2 731.2L471.0 729.3L474.7 728.4L471.0 725.1L467.2 726.0L464.4 722.3L462.6 718.6L459.8 720.9L456.0 720.4L452.3 717.6L448.6 713.9L445.8 709.7L446.7 712.0L449.5 715.8L453.2 720.4ZM468.8 706.0L470.8 705.0L469.5 703.0L467.2 703.2ZM470.0 711.3L471.5 711.0L471.0 709.2L469.5 709.5ZM494.3 708.3L491.0 712.0L487.8 716.7L486.8 720.4L489.6 722.3L487.8 725.1L485.9 727.9L484.0 730.7L481.2 729.8L479.4 728.4L482.2 731.6L484.0 734.4L485.4 738.2L485.9 742.8L486.4 746.0L488.0 747.0L490.8 746.8L492.0 742.8L493.4 737.2L495.2 731.6L497.1 726.0L499.0 720.4L500.4 714.8L502.7 709.2L505.5 702.7L507.4 696.1L509.4 688.7L510.9 682.1L509.7 680.7L507.4 684.0L504.6 691.5L501.8 698.9L499.0 704.5ZM471.0 716.8L472.8 716.5L472.5 714.2L470.5 714.5ZM479.4 717.2L479.6 720.0L481.0 721.8L482.6 720.0L481.6 717.0Z" fill="#7CBEFF" fill-rule="evenodd"/>
<path d="M415.2 644.7L411.7 641.3L410.6 642.3L413.1 643.8L414.6 646.7L412.1 648.7L410.6 649.7L414.1 651.1L414.4 651.3ZM460.5 678.2L460.1 671.2L455.9 670.8L453.2 671.8L449.0 681.5L455.4 683.6ZM466.5 655.8L468.4 663.2L477.6 666.6L477.9 658.7L474.2 653.5ZM426.2 680.6L427.6 686.3L428.4 686.3L428.8 686.9L430.6 686.6L430.4 686.3L430.6 686.3L428.6 682.3L428.9 681.0L428.8 681.0L428.7 680.1L428.3 680.2L428.3 680.5L427.9 682.2L426.8 680.5ZM445.3 664.9L446.8 658.1L436.3 653.2L435.4 655.3L437.1 664.0L437.4 664.4L444.1 666.1ZM467.5 682.8L460.5 678.2L460.1 671.2L460.2 671.1L472.4 674.5L472.6 680.4ZM469.9 710.7L469.8 710.6L469.8 710.7ZM461.5 710.3L465.0 711.0L466.0 709.0L463.0 707.5L459.8 708.0ZM490.8 675.0L498.1 672.4L498.4 668.2L499.7 665.0L490.3 663.7L486.3 669.0L488.0 673.3ZM480.5 709.0L479.5 701.0L478.7 700.5L473.8 704.5L474.7 709.2L475.2 710.2ZM478.2 700.1L476.9 700.9L478.6 700.3ZM469.7 700.1L469.5 700.7L472.3 702.2L474.5 701.5L477.4 699.5ZM468.1 704.8L468.8 706.0L470.8 705.0L469.5 703.0L468.7 703.1ZM469.9 710.7L470.5 711.2L471.5 711.0L471.0 709.2L469.5 709.5L469.8 710.6ZM444.1 666.1L445.9 669.7L442.5 677.1L435.9 675.5L437.4 664.4ZM413.1 626.5L412.8 629.1L418.4 635.0L424.0 633.6L423.6 627.5L423.4 627.6L419.0 628.1L416.5 627.6L416.3 626.2ZM464.2 654.2L458.8 661.4L453.9 659.7L456.4 653.3L463.9 653.8Z" fill="#ffffff" fill-opacity="0.045"/><path d="M451.2 717.5L451.0 717.7L453.2 720.4L457.0 725.1L457.8 726.1L461.8 723.9L460.6 720.3L459.8 720.9L456.0 720.4L452.3 717.6L452.2 717.5ZM418.0 652.0L434.2 645.1L431.7 640.7L417.4 642.2L415.2 644.7L414.4 651.3L415.7 651.9ZM455.9 652.7L456.4 653.3L453.9 659.7L453.7 659.7L448.8 657.2L449.5 651.3ZM479.7 618.5L483.6 617.9L484.0 616.8L484.0 616.8L482.2 612.1L480.3 611.2L479.2 613.1L479.4 617.9ZM456.8 704.5L457.0 704.6L457.8 703.8L456.2 703.1ZM469.7 700.1L467.3 695.7L462.7 697.3L466.7 699.3L469.5 700.7ZM468.7 703.1L467.2 703.2L468.1 704.8ZM465.1 725.9L461.8 723.9L457.8 726.1L460.7 729.8L462.8 731.6ZM464.9 690.4L467.5 682.8L472.6 680.4L478.3 684.0L477.5 688.0L467.1 693.9ZM445.3 664.9L452.1 663.3L455.9 670.8L453.2 671.8L445.9 669.7L444.1 666.1ZM461.7 633.5L467.3 643.0L468.8 643.9L473.8 643.1L473.1 636.3L471.7 634.9L470.2 636.2L469.3 638.5L466.5 638.7L466.9 635.5L468.6 632.7L468.9 632.1L467.4 630.7ZM467.4 630.7L461.7 633.5L458.8 633.5L455.5 631.3L461.1 617.6L463.6 617.0L464.1 617.5L468.2 628.8ZM488.2 626.5L491.5 630.8L491.8 630.8L489.6 628.0L488.4 625.7ZM435.4 655.3L427.5 657.9L418.0 652.0L434.2 645.1L436.7 647.1L436.3 653.2ZM424.0 633.6L418.4 635.0L417.4 642.2L431.7 640.7L431.4 637.8ZM501.2 712.9L502.7 709.2L505.5 702.7L506.4 699.5L505.7 697.8L502.1 698.2L501.8 698.9L499.0 704.5L494.7 708.0L494.6 708.4L496.9 712.4ZM494.6 708.4L494.7 708.0L494.3 708.3L494.3 708.3ZM485.7 700.1L486.1 700.8L490.1 699.9L489.6 697.1L487.4 697.5ZM491.8 692.3L490.1 693.3L488.0 696.6L488.8 696.3L491.9 692.4Z" fill="#ffffff" fill-opacity="0.09"/><path d="M451.2 717.5L452.2 717.5L450.8 716.1ZM491.9 691.1L491.8 692.3L491.9 692.4L492.8 691.3L494.3 687.9ZM505.5 689.1L504.6 691.5L502.1 698.2L505.7 697.8L507.7 694.9L508.0 693.7ZM447.4 617.9L453.5 615.5L453.5 611.6L453.3 611.5L452.8 612.9L448.4 613.9L445.0 614.4L444.6 610.5L443.5 610.5L443.7 613.9ZM405.9 665.5L406.5 667.8L408.3 667.4ZM447.4 617.9L443.7 613.9L443.7 614.4L442.5 615.9L438.6 617.8L434.6 619.8L433.6 620.5L445.7 624.5ZM484.1 731.3L484.0 730.7L481.2 729.8L479.4 728.4L482.2 731.6L483.6 733.7ZM470.7 725.2L469.2 725.5L468.6 726.1L470.4 729.6L471.0 729.3L474.7 728.4L471.0 725.1ZM490.8 675.0L496.2 682.8L497.8 676.3L498.1 672.4ZM432.2 677.3L427.1 670.1L422.5 672.3L425.8 674.2L427.8 676.6L428.3 680.2L428.7 680.1L428.3 677.6L429.5 677.9L429.6 677.3L432.0 677.8ZM426.8 680.5L425.7 678.8L426.2 680.6ZM452.5 631.2L448.0 644.3L451.1 644.3L457.9 640.4L458.8 633.5L455.5 631.3ZM451.1 644.3L448.0 644.3L445.5 645.8L449.5 651.3L455.9 652.7L456.3 647.5ZM490.8 675.0L488.0 673.3L481.4 682.9L491.9 691.1L494.3 687.9L495.8 684.3L496.2 682.8ZM461.7 633.5L458.8 633.5L457.9 640.4L459.9 643.5L467.3 643.0Z" fill="#0a6fe0" fill-opacity="0.05"/><path d="M446.0 710.2L446.7 712.0L449.5 715.8L451.0 717.7L451.2 717.5L450.8 716.1L448.6 713.9L446.1 710.1ZM495.9 726.0L484.1 731.3L483.6 733.7L484.0 734.4L484.9 736.8L494.3 734.2L495.2 731.6L496.8 726.8ZM461.1 617.6L463.6 617.0L463.6 617.0L460.3 614.7L463.9 616.4L464.2 615.6L463.0 614.9L458.1 612.4L456.2 612.9L455.4 616.1ZM453.5 615.5L455.2 616.0L455.0 612.0L453.5 611.6ZM408.3 667.4L409.5 667.2L408.9 663.2L405.5 664.2L405.9 665.5ZM414.1 660.2L413.5 655.2L410.5 655.2L411.5 660.6ZM472.2 715.6L472.7 715.7L472.5 714.2L471.8 714.3ZM482.3 719.1L481.6 717.0L479.4 717.2L479.5 718.1ZM482.5 710.4L480.5 709.0L475.2 710.2L476.6 713.4L480.3 713.0L482.6 711.8ZM489.4 653.0L491.0 656.4L496.8 656.1L495.8 654.2L492.3 648.0ZM482.5 710.4L482.6 711.8L484.0 711.1L487.8 709.2L487.5 708.5ZM493.1 718.7L496.9 712.4L494.6 708.4L494.3 708.3L491.0 712.0L487.8 716.7L487.0 719.5ZM472.2 715.6L471.9 716.7L472.8 716.5L472.7 715.7ZM479.5 718.1L479.6 720.0L481.0 721.8L482.6 720.0L482.3 719.1ZM471.0 725.1L471.0 725.1L470.7 725.2ZM435.9 675.5L432.2 677.3L432.0 677.8L433.9 678.2L436.6 677.6L438.6 679.5L438.7 679.7L440.6 680.3L439.9 681.8L442.4 686.2L444.0 685.8L445.9 682.2L442.5 677.1ZM436.9 687.8L438.4 687.3L436.2 686.7L435.6 687.3ZM485.7 700.1L487.4 697.5L484.0 698.0L480.2 699.6L482.8 698.3L488.0 696.6L490.1 693.3L479.6 692.7L477.5 699.5L479.1 698.3L479.2 698.3L479.2 698.3L482.4 696.8L482.4 696.8L482.5 696.8L485.9 695.9L485.9 695.9L486.0 695.9L486.0 695.9L486.1 695.9L486.1 695.9L486.1 695.9L486.2 695.9L486.2 695.9L486.3 695.9L486.3 696.0L486.3 696.0L486.4 696.0L486.4 696.1L486.4 696.1L486.4 696.1L486.4 696.2L486.4 696.2L486.4 696.3L486.4 696.3L486.4 696.4L486.4 696.4L486.4 696.4L486.4 696.5L486.4 696.5L486.4 696.6L486.3 696.6L486.3 696.6L486.3 696.7L486.2 696.7L486.2 696.7L486.2 696.7L486.1 696.7L482.8 697.6L479.6 699.1L478.2 700.1L478.6 700.3L478.7 700.3L479.2 700.0L478.7 700.5L479.5 701.0ZM459.3 646.0L456.3 647.5L455.9 652.7L456.4 653.3L463.9 653.8L464.1 651.6Z" fill="#0a6fe0" fill-opacity="0.1"/><path d="M426.3 680.3L426.4 680.3M428.4 679.6L428.4 679.6M436.9 687.8L438.0 690.0L436.9 692.0M436.9 687.8L439.6 688.3L441.7 686.9L442.1 686.7M442.7 686.4L444.0 685.8M439.7 697.7L441.7 697.2L442.0 697.0M444.6 690.8L444.5 690.4L444.9 687.8M444.0 685.8L444.9 687.8M455.9 670.8L457.9 671.8L460.1 671.2M455.9 670.8L455.4 668.7L453.4 667.4L454.1 664.7L452.1 663.3M453.9 659.7L453.7 659.7M453.9 659.7L456.0 661.4L458.8 661.4M460.2 671.1L460.1 671.2M460.2 671.1L461.6 667.9M458.8 661.4L458.8 664.0L462.2 665.1L461.6 667.9M452.1 663.3L453.7 659.7M445.9 682.2L449.0 681.5M445.9 682.2L443.4 681.4L444.2 678.4L442.5 677.1M449.0 681.5L449.8 679.6L450.4 677.5L453.2 676.4L453.1 674.0L453.2 671.8M442.5 677.1L444.3 675.7L443.1 672.9L444.9 671.5L445.9 669.7M453.2 671.8L450.7 671.2L447.9 671.9L445.9 669.7M432.1 677.6L432.2 677.3M435.8 687.4L436.9 687.8M432.2 677.3L433.5 675.3L435.9 675.5M444.0 685.8L445.2 684.1L445.9 682.2M435.9 675.5L437.9 676.8L440.2 676.8L442.5 677.1M444.9 687.8L446.7 688.9L448.3 690.2L450.3 690.9L452.2 691.9L453.5 693.7M453.5 693.7L453.5 693.7M437.4 664.4L439.8 664.4L441.9 665.5L444.1 666.1M437.4 664.4L437.1 664.0M437.1 664.0L437.3 661.7L436.4 659.7L435.6 657.6L435.4 655.3M446.8 658.1L445.9 660.3L446.4 662.8L445.3 664.9M446.8 658.1L445.0 656.6L443.1 655.1L440.4 655.3L438.3 654.3L436.3 653.2M436.3 653.2L435.4 655.3M444.1 666.1L445.3 664.9M435.9 675.5L435.6 673.2L435.1 670.8L437.0 668.8L436.8 666.5L437.4 664.4M445.9 669.7L444.6 668.1L444.1 666.1M452.1 663.3L449.9 664.0L447.5 664.0L445.3 664.9M453.7 659.7L450.7 659.5L448.8 657.2M448.8 657.2L446.8 658.1M436.7 647.1L436.9 649.1L435.4 651.1L436.3 653.2M436.7 647.1L434.2 645.1M427.5 657.9L429.1 656.1L431.2 656.0L433.4 655.9L435.4 655.3M427.5 657.9L425.3 657.1L423.8 655.4L421.7 654.5L419.6 653.6L418.0 652.0M418.0 652.0L419.8 650.7L421.9 650.0L424.4 650.2L425.7 647.7L428.3 648.1L430.3 647.2L431.9 645.4L434.2 645.1M455.9 670.8L453.2 671.8M424.7 663.8L426.7 665.3L427.6 667.7M424.7 663.8L422.5 662.5L420.2 662.7L419.0 663.2M422.6 672.1L422.9 671.9L425.3 671.5L427.1 670.1M427.1 670.1L427.6 667.7M427.5 657.9L425.0 659.2L425.5 661.8L424.7 663.8M437.1 664.0L435.4 665.2L433.0 664.8L431.3 666.0L429.7 667.4L427.6 667.7M432.2 677.3L430.1 676.1L430.7 672.9L428.4 671.9L427.1 670.1M495.8 683.3L494.9 682.8L494.9 680.2L493.4 678.5L491.7 677.1L490.8 675.0M490.8 675.0L492.7 674.0L495.1 674.8L496.5 672.6L497.9 671.6M477.6 666.6L474.9 667.0L473.2 664.6L470.6 664.5L468.4 663.2M477.6 666.6L477.7 666.7M460.2 671.1L461.9 672.9L464.1 672.9L466.4 672.3L468.3 673.6L469.9 675.5L472.4 674.5M461.6 667.9L463.0 666.3L465.3 666.0L465.8 663.1L468.4 663.2M472.4 674.5L473.9 672.6L475.0 670.5L475.3 667.9L477.7 666.7M491.9 691.1L490.5 689.3L488.1 688.8L486.2 687.6L485.1 685.4L483.7 683.6L481.4 682.9M491.9 691.1L493.0 690.3M494.2 687.5L494.2 687.4L494.5 686.9M490.8 675.0L488.0 673.3M481.4 682.9L482.9 681.1L484.7 679.5L485.0 676.9L487.8 676.0L488.0 673.3M490.3 663.7L492.5 664.5L494.9 663.7L497.2 664.0L499.1 665.8M490.3 663.7L489.3 665.7L487.8 667.4L486.3 669.0M486.3 669.0L486.7 671.3L488.0 673.3M456.4 653.3L455.4 655.4L453.5 657.1L453.9 659.7M456.4 653.3L455.9 652.7M448.8 657.2L450.3 654.4L449.5 651.3M449.5 651.3L451.6 651.9L454.2 650.6L455.9 652.7M436.7 647.1L438.7 645.4L441.3 645.6M441.3 645.6L443.4 646.0L445.5 645.8M449.5 651.3L448.9 648.9L447.6 647.1L445.5 645.8M407.6 667.4L406.6 667.1L406.5 667.0M406.7 634.2L406.9 633.1L409.9 632.8L410.3 629.9L412.8 629.1M410.3 622.8L410.3 623.3L412.3 624.6L413.1 626.5M412.8 629.1L413.1 626.5M449.0 681.5L450.8 683.2L453.4 682.5L455.4 683.6M453.5 693.7L453.9 691.4L456.0 690.5L457.4 689.0M455.4 683.6L455.3 686.7L457.4 689.0M460.1 671.2L460.5 673.5L459.3 675.9L460.5 678.2M455.4 683.6L456.5 681.3L458.9 680.0L460.5 678.2M480.5 709.0L479.9 706.3L480.3 703.6L479.5 701.0M480.5 709.0L478.8 710.6L476.8 711.1L475.4 710.3M469.7 700.1L469.7 700.6M469.4 703.2L469.0 704.5L468.5 705.1M469.7 700.1L472.3 699.3L474.9 700.0L476.9 699.6M478.4 700.2L478.4 700.2M478.9 700.6L479.5 701.0M470.1 710.9L470.3 711.0M482.5 710.4L480.5 709.0M482.5 710.4L484.4 709.6L485.9 709.9M487.4 709.2L487.5 709.0M486.1 700.6L485.7 700.1M485.7 700.1L483.6 700.7L481.8 702.1L479.5 701.0M482.5 710.4L482.6 711.6M472.2 715.6L472.5 715.5M479.6 717.7L481.2 717.6L481.8 718.1M472.2 715.6L471.7 714.5M456.5 704.3L454.2 702.8L454.3 702.4M463.5 697.5L465.0 695.6L467.3 695.7M467.3 695.7L467.0 698.7L469.7 700.1M485.7 700.1L486.8 698.5L488.7 697.4M489.6 695.0L490.1 693.3M490.1 693.3L488.0 693.1L485.9 692.6L483.8 693.1L481.6 694.0L479.6 692.7M479.6 692.7L478.5 694.8L478.8 697.4L477.7 699.0M505.7 697.8L506.4 698.8M505.7 697.8L503.8 698.9L501.9 699.8L501.7 699.6M494.6 708.3L494.6 708.4M500.8 713.2L499.2 714.2L496.9 712.4M494.6 708.4L496.7 709.8L496.9 712.4M507.1 696.6L505.7 697.8M507.9 693.4L507.2 692.0L506.2 689.8L505.5 689.6M491.8 692.2L491.9 691.1M494.5 708.4L494.6 708.4M491.7 692.3L490.1 693.3M477.5 688.0L478.7 686.1L478.3 684.0M477.5 688.0L475.3 688.9L472.8 689.4L471.1 691.1L469.1 692.6L467.1 693.9M478.3 684.0L475.8 683.7L474.5 681.6L472.6 680.4M472.6 680.4L470.3 682.0L467.5 682.8M467.5 682.8L466.7 684.6L467.2 686.9L466.4 688.8L464.9 690.4M467.1 693.9L465.1 692.7L464.9 690.4M479.6 692.7L479.3 690.0L477.5 688.0M481.4 682.9L478.3 684.0M467.3 695.7L467.1 693.9M472.4 674.5L471.6 677.5L472.6 680.4M477.7 666.7L479.7 667.7L482.0 667.9L484.5 667.1L486.3 669.0M460.5 678.2L462.4 679.1L464.1 680.3L466.1 681.0L467.5 682.8M457.4 689.0L459.9 689.6L462.4 689.9L464.9 690.4M445.5 645.8L448.0 644.3M448.0 644.3L451.1 644.3M455.9 652.7L455.7 650.1L456.3 647.5M456.3 647.5L454.7 646.2L453.0 645.0L451.1 644.3M477.6 666.6L477.6 663.9L477.4 661.3L477.9 658.7M477.9 658.7L476.8 656.9L474.6 655.8L474.2 653.5M468.4 663.2L467.1 661.0L467.8 658.1L466.5 655.8M474.2 653.5L472.5 654.7L470.3 654.3L468.3 654.7L466.5 655.8M458.8 661.4L460.2 659.6L460.5 657.1L463.2 656.3L464.2 654.2M466.5 655.8L464.2 654.2M456.4 653.3L458.9 652.8L461.3 654.4L463.9 653.8M463.9 653.8L464.2 654.2M490.3 663.7L489.9 661.2L491.4 658.9L491.0 656.4M496.7 656.4L495.4 655.8L493.2 656.4L491.0 656.4M412.2 641.0L412.6 641.5L414.0 642.9L415.2 644.7M415.2 644.7L414.4 645.9M414.0 647.5L414.9 649.5L414.5 651.1M417.4 642.2L415.2 644.7M417.4 642.2L417.9 639.8L418.0 637.4L418.4 635.0M418.4 635.0L417.1 633.5L416.4 631.2L414.3 630.4L412.8 629.1M418.0 652.0L416.2 652.0M417.4 642.2L419.4 641.4L421.5 641.7L423.4 640.4L425.6 640.9L427.6 641.0L429.6 640.3L431.7 640.7M434.2 645.1L432.3 643.3L431.7 640.7M413.9 659.9L413.2 659.4L413.7 658.4M418.4 635.0L421.2 634.1L424.0 633.6M413.1 626.5L415.3 626.7L416.1 626.7M422.8 627.9L423.8 629.5L424.2 631.5L424.0 633.6M431.7 640.7L431.4 637.8M431.4 637.8L429.4 637.0L428.6 634.2L426.5 633.5L424.0 633.6M496.9 712.4L494.9 714.1L494.5 716.7L493.1 718.7M493.1 718.7L490.6 718.2L488.4 720.5L487.1 719.9M456.3 647.5L459.3 646.0M463.9 653.8L464.1 651.6M464.1 651.6L462.1 650.1L461.1 647.7L459.3 646.0M457.9 640.4L459.9 643.5M457.9 640.4L455.5 641.5L453.8 643.8L451.1 644.3M459.3 646.0L459.9 643.5M464.1 651.6L464.6 649.2L467.2 648.2L468.2 646.2L468.8 643.9M459.9 643.5L462.4 643.7L464.8 643.0L467.3 643.0M467.3 643.0L468.8 643.9M458.8 633.5L457.6 635.7L458.8 638.2L457.9 640.4M458.8 633.5L461.7 633.5M467.3 643.0L465.7 641.4L465.8 638.7L464.9 636.7L462.6 635.5L461.7 633.5M443.8 612.5L444.7 613.4M445.4 614.5L445.9 616.3L447.4 617.9M453.3 612.0L453.8 613.3L453.5 615.5M453.5 615.5L451.5 616.5L449.6 617.6L447.4 617.9M458.8 633.5L455.5 631.3M448.0 644.3L448.2 641.9L449.6 640.0L449.4 637.4L449.7 635.1L452.1 633.5L452.5 631.2M455.5 631.3L452.5 631.2M477.9 658.7L479.7 657.6L481.8 656.7L483.3 655.0L485.4 654.3L486.8 652.5M491.0 656.4L489.4 653.0M486.8 652.5L489.4 653.0M492.1 648.2L491.5 649.2L490.4 651.1L489.4 653.0M429.9 623.6L431.0 625.2L432.0 627.3L432.6 629.7L434.1 631.6M434.6 620.1L435.5 621.1L437.7 621.4L439.9 621.6L441.8 622.6L443.7 623.7L445.7 624.5M434.1 631.6L436.4 631.2L438.1 628.9L440.7 629.6L442.8 628.6L445.1 628.5M445.7 624.5L446.1 627.7M445.1 628.5L446.1 627.7M431.4 637.8L431.5 635.4L433.5 633.8L434.1 631.6M447.4 617.9L447.7 620.3L445.6 622.1L445.7 624.5M441.3 645.6L441.7 643.5L442.0 641.3L441.3 638.9L443.7 637.2L442.3 634.6L444.3 632.8L444.2 630.5L445.1 628.5M461.1 617.6L458.5 617.4L455.9 616.6L455.5 616.4M455.0 616.2L453.5 615.5M461.1 617.6L460.9 619.8L459.7 621.6L458.0 623.2L457.4 625.2L457.8 627.7L456.9 629.6L455.5 631.3M452.5 631.2L450.3 630.2L448.4 628.5L446.1 627.7M458.9 727.1L458.9 727.1L460.5 725.8L461.8 723.9M451.2 717.5L451.2 717.6M451.2 717.5L451.8 717.4M461.8 723.9L461.8 721.3L461.0 720.2M463.3 731.8L464.2 730.0L463.3 727.4L465.1 725.9M465.1 725.9L461.8 723.9M451.0 716.6L451.2 717.5M472.2 715.6L471.5 716.5M471.0 725.3L470.8 725.3M465.1 725.9L467.0 726.0M467.8 726.1L468.6 726.1M471.1 729.1L469.3 728.4L468.6 726.1M468.6 726.1L468.9 725.8M493.1 718.7L493.6 721.3L495.8 723.3L495.9 726.0M484.1 730.9L484.1 731.3M495.9 726.0L494.3 727.8L492.1 728.2L490.1 729.0L488.6 730.8L486.3 731.0L484.1 731.3M495.9 726.0L496.6 726.9M474.2 653.5L474.2 651.1L475.3 649.1L476.4 647.1L477.0 645.0M468.8 643.9L471.4 644.3L473.8 643.1M473.8 643.1L477.0 645.0M486.8 652.5L485.1 650.7L484.2 648.1L481.2 648.0L479.4 646.5L477.6 645.0M477.0 645.0L477.6 645.0M461.1 617.6L463.3 617.1M464.8 616.2L464.4 616.4M461.7 633.5L463.6 632.5L466.0 632.6L467.4 630.7M473.8 643.1L473.0 640.9L473.7 638.5L473.1 636.3M473.1 636.3L471.8 635.0M469.0 631.4L467.4 630.7M464.1 617.6L464.9 619.4L465.1 621.4L466.2 623.2L466.3 625.2L468.1 626.7L468.2 628.8M468.2 628.8L467.4 630.7M484.1 731.3L484.2 733.7L484.0 734.1M491.5 743.8L489.8 743.8L488.9 741.4L487.4 739.9L485.7 738.6L485.6 738.6M493.8 735.3L491.7 734.7L489.3 733.8L487.6 735.0L485.8 736.2L485.0 736.5M483.9 617.1L483.6 617.9M485.5 620.2L485.0 619.9L483.6 617.9M468.2 628.8L470.0 628.4M475.4 626.7L475.8 626.4M479.6 618.4L479.7 618.5M479.6 618.7L479.7 618.5M483.6 617.9L479.7 618.5M481.0 632.3L481.1 632.7L483.7 633.8L484.5 636.0L485.4 638.1M481.6 629.5L482.7 629.7L484.5 628.5L486.2 627.0L488.2 626.5M486.6 638.1L485.4 638.1M490.9 633.4L491.1 633.0L491.5 630.8M491.5 630.8L488.8 629.4L488.2 626.5M473.1 636.3L475.7 635.8L477.1 633.9L477.6 633.1M478.0 627.1L478.2 627.7M477.6 645.0L479.1 643.6L479.8 641.2L481.8 640.3L484.5 640.3L485.4 638.1M488.4 626.0L488.2 626.5M491.5 630.8L491.5 630.8" fill="none" stroke="rgba(100,100,100,0.66)" stroke-width="0.9" stroke-linejoin="round"/>
<path d="M413.1 639.9L410.6 642.3L413.1 643.8L414.6 646.7L412.1 648.7L410.6 649.7L414.1 651.1L417.0 652.6L418.5 656.0L419.0 660.9L418.5 665.8L417.5 667.8L420.0 669.7L420.2 669.9L418.5 667.2L422.4 672.2L425.8 674.2L427.8 676.6L428.3 680.5L427.9 682.2L425.7 678.8L427.6 686.3L428.4 686.3L428.8 686.9L430.6 686.6L430.4 686.3L430.6 686.3L428.6 682.3L428.9 681.0L428.8 681.0L428.3 677.6L429.5 677.9L429.6 677.3L433.9 678.2L436.6 677.6L438.6 679.5L438.7 679.7L440.6 680.3L439.9 681.8L442.5 686.4L438.6 687.4L436.2 686.7L434.6 688.3L436.6 692.3L442.6 690.3L448.6 692.3L454.7 694.3L460.7 696.3L466.7 699.3L472.3 702.2L474.5 701.5L479.1 698.3L479.2 698.3L479.2 698.3L482.4 696.8L482.4 696.8L482.5 696.8L485.9 695.9L485.9 695.9L486.0 695.9L486.0 695.9L486.1 695.9L486.1 695.9L486.1 695.9L486.2 695.9L486.2 695.9L486.3 695.9L486.3 696.0L486.3 696.0L486.4 696.0L486.4 696.1L486.4 696.1L486.4 696.1L486.4 696.2L486.4 696.2L486.4 696.3L486.4 696.3L486.4 696.4L486.4 696.4L486.4 696.4L486.4 696.5L486.4 696.5L486.4 696.6L486.3 696.6L486.3 696.6L486.3 696.7L486.2 696.7L486.2 696.7L486.2 696.7L486.1 696.7L482.8 697.6L479.6 699.1L476.9 700.9L478.7 700.3L479.2 700.0L473.8 704.5L474.7 709.2L476.6 713.4L480.3 713.0L484.0 711.1L487.8 709.2L486.8 706.4L483.6 707.3L483.1 704.5L485.9 700.8L490.1 699.9L489.6 697.1L484.0 698.0L480.2 699.6L482.8 698.3L488.8 696.3L492.8 691.3L495.8 684.3L497.8 676.3L498.4 668.2L500.4 663.2L501.2 660.6L498.8 660.2L495.8 654.2L491.8 647.2L486.8 641.1L486.8 636.9L489.6 634.5L492.9 632.2L489.6 628.0L486.8 622.4L484.0 616.8L482.2 612.1L480.3 611.2L479.2 613.1L479.4 618.7L480.3 625.7L477.5 627.1L473.3 624.7L470.3 622.2L465.3 618.2L460.3 614.7L470.0 619.3L467.9 617.8L463.0 614.9L458.1 612.4L456.2 612.9L455.2 616.9L455.0 612.0L453.3 611.5L452.8 612.9L448.4 613.9L445.0 614.4L444.6 610.5L443.5 610.5L443.7 614.4L442.5 615.9L438.6 617.8L434.6 619.8L430.7 622.7L426.8 625.7L423.4 627.6L419.0 628.1L416.5 627.6L416.0 624.7L414.6 621.8L411.1 622.2L407.7 623.7L404.3 626.2L402.3 630.1L407.2 635.0ZM470.5 626.6L471.0 623.8L474.7 626.6L478.4 628.0L481.2 629.1L482.4 631.7L478.4 632.7L474.7 633.6L471.9 634.7L470.2 636.2L469.3 638.5L466.5 638.7L466.9 635.5L468.6 632.7L470.0 629.9ZM411.5 660.6L414.1 660.2L413.5 655.2L410.5 655.2ZM406.5 667.8L409.5 667.2L408.9 663.2L405.5 664.2ZM441.5 696.2L439.4 697.0L440.0 700.6L442.5 700.5L443.4 698.0ZM454.0 702.0L450.5 699.3L448.6 699.5L449.5 701.4L453.0 703.6L457.0 704.6L457.8 703.8ZM459.8 708.0L461.5 710.3L465.0 711.0L466.0 709.0L463.0 707.5ZM457.0 725.1L460.7 729.8L464.4 733.0L467.2 731.2L471.0 729.3L474.7 728.4L471.0 725.1L467.2 726.0L464.4 722.3L462.6 718.6L459.8 720.9L456.0 720.4L452.3 717.6L448.6 713.9L445.8 709.7L446.7 712.0L449.5 715.8L453.2 720.4ZM468.8 706.0L470.8 705.0L469.5 703.0L467.2 703.2ZM470.0 711.3L471.5 711.0L471.0 709.2L469.5 709.5ZM494.3 708.3L491.0 712.0L487.8 716.7L486.8 720.4L489.6 722.3L487.8 725.1L485.9 727.9L484.0 730.7L481.2 729.8L479.4 728.4L482.2 731.6L484.0 734.4L485.4 738.2L485.9 742.8L486.4 746.0L488.0 747.0L490.8 746.8L492.0 742.8L493.4 737.2L495.2 731.6L497.1 726.0L499.0 720.4L500.4 714.8L502.7 709.2L505.5 702.7L507.4 696.1L509.4 688.7L510.9 682.1L509.7 680.7L507.4 684.0L504.6 691.5L501.8 698.9L499.0 704.5ZM471.0 716.8L472.8 716.5L472.5 714.2L470.5 714.5ZM479.4 717.2L479.6 720.0L481.0 721.8L482.6 720.0L481.6 717.0Z" fill="none" fill-rule="evenodd" stroke="rgba(96,100,106,0.55)" stroke-width="0.9" stroke-linejoin="round"/>
<path d="M587.4 558.0L588.1 561.4L588.8 561.8L588.8 561.8L592.7 562.3L596.2 559.9L597.1 558.9L601.1 558.6L603.5 559.4L604.0 562.3L603.3 565.3L604.0 569.2L605.3 573.1L606.2 577.0L606.9 580.9L607.6 584.8L608.6 588.8L609.4 592.7L609.9 595.1L610.4 598.6L609.4 601.5L607.4 604.4L606.0 606.4L604.5 604.4L603.0 602.0L601.1 603.0L598.6 603.5L597.1 602.0L597.6 598.6L599.6 596.6L603.5 595.6L607.4 595.1L607.7 592.7L606.6 588.8L605.7 584.8L604.7 580.9L604.0 577.0L602.7 573.6L601.4 571.1L600.8 567.7L600.1 565.3L598.1 564.3L595.7 563.3L592.7 562.8L592.2 563.8L592.7 566.7L593.7 570.2L594.7 573.1L596.2 576.0L595.2 579.0L592.7 580.9L591.3 583.4L589.3 585.8L588.8 589.7L588.3 593.7L587.8 597.6L586.9 601.5L585.9 605.4L587.4 592.7L586.7 598.0L584.7 600.7L582.7 595.3L582.1 590.0L582.1 594.3L581.4 592.1L580.1 588.1L578.7 584.7L578.1 581.4L577.4 577.4L576.7 572.0L578.1 568.0L580.1 565.4L582.7 560.7L581.4 557.4L577.4 559.4L572.0 561.4L566.7 561.4L564.7 558.7L558.7 559.4L552.0 558.0L545.4 556.0L540.0 553.4L538.0 552.0L540.0 556.0L545.4 558.7L552.0 560.0L558.7 562.7L559.4 568.0L558.7 573.4L556.0 576.1L550.7 578.1L546.7 577.4L545.4 576.7L546.7 581.4L547.4 586.7L545.4 590.7L540.0 592.1L530.7 591.4L528.7 590.7L521.3 592.0L514.7 591.3L508.0 592.0L503.3 592.0L503.3 592.7L508.0 595.3L512.7 598.7L516.0 601.3L509.3 603.3L514.7 604.7L520.0 604.0L523.3 603.3L522.7 605.3L521.3 607.3L524.0 611.3L526.7 616.7L528.0 621.4L526.7 624.0L522.0 625.4L521.3 628.0L524.7 628.0L527.4 626.7L529.4 630.0L531.4 635.4L532.0 640.7L531.4 646.0L528.7 648.7L525.4 650.0L522.7 652.0L526.0 654.0L527.9 654.6L527.8 654.0L530.0 652.0L532.0 654.0L530.9 655.6L533.4 658.0L534.7 662.0L535.4 667.4L536.0 671.4L538.7 674.1L544.0 675.4L550.7 675.4L557.4 675.4L562.7 675.4L568.0 676.7L572.0 680.7L574.7 684.1L575.9 680.6L573.4 679.4L572.0 675.4L576.7 674.7L578.1 678.1L576.2 680.6L576.7 684.0L576.9 684.3L576.7 683.4L582.7 682.7L584.7 685.4L580.1 687.1L578.6 686.5L578.7 686.7L582.7 692.7L586.7 697.3L590.7 701.3L593.4 704.7L596.1 706.0L598.7 709.4L601.4 711.4L605.4 710.0L608.1 708.7L610.7 706.0L613.4 704.0L614.7 700.0L613.4 694.7L616.1 692.7L616.7 688.0L614.7 685.3L610.7 684.0L610.1 682.8L608.7 685.4L605.4 686.1L603.4 682.1L605.4 679.4L608.7 679.1L609.0 679.7L610.1 678.7L612.1 675.4L615.4 673.4L620.1 671.4L625.4 670.1L630.1 669.4L634.1 667.4L638.1 664.0L639.8 659.4L639.8 654.0L637.4 649.4L633.4 646.0L628.8 644.7L624.1 644.0L620.1 641.4L618.1 636.7L618.1 631.4L619.4 626.0L622.7 621.4L628.1 617.4L633.4 614.7L638.8 613.3L644.1 612.7L646.8 612.7L648.8 618.0L650.8 621.8L654.8 620.0L658.1 617.4L659.4 614.0L658.4 610.0L656.9 605.4L655.4 601.5L653.9 598.6L652.7 595.6L652.3 591.7L652.0 587.8L651.0 583.9L650.5 580.0L649.5 576.0L648.1 572.1L646.6 568.2L646.4 564.3L647.6 560.4L649.5 556.4L651.5 553.0L653.0 549.6L654.4 547.6L652.0 545.2L648.6 542.2L645.1 540.3L640.7 539.3L636.3 539.3L633.4 536.9L630.0 534.4L625.5 533.4L621.1 534.1L617.2 535.9L613.8 538.3L609.4 542.2L604.5 546.2L599.6 550.1L594.7 553.5L589.8 556.0L587.3 557.9ZM576.1 585.4L572.0 586.7L568.0 587.4L569.4 585.4L572.0 583.4L574.7 582.7L577.4 581.4L578.7 584.7ZM579.0 596.0L571.4 596.7L570.7 594.0L578.7 593.7ZM539.4 668.7L537.8 667.4L538.0 664.7L539.8 662.7L540.7 664.7Z" fill="#9ACEFF" fill-rule="evenodd"/>
<path d="M582.0 586.8L582.9 590.2L585.4 590.9L587.1 587.8L586.9 584.8L584.4 583.7Z" fill="#B2DBFF" fill-rule="evenodd"/>
<path d="M521.1 566.0L522.0 568.7L526.7 572.7L532.0 575.8L533.4 575.0L528.7 571.4L523.3 566.7Z" fill="#9ACEFF" fill-rule="evenodd"/>
<path d="M538.7 585.0L539.6 589.7L540.7 589.7L539.8 585.4Z" fill="#9ACEFF" fill-rule="evenodd"/>
<path d="M663.8 604.7L664.4 610.0L666.1 612.9L668.8 613.7L667.8 607.3L666.1 603.3Z" fill="#C8E4FF" fill-rule="evenodd"/>
<path d="M529.1 667.4L530.0 672.1L531.8 676.7L533.1 677.4L532.0 673.4L530.4 668.7Z" fill="#9ACEFF" fill-rule="evenodd"/>
<path d="M526.7 682.1L528.0 683.7L530.0 680.7L528.7 679.7Z" fill="#9ACEFF" fill-rule="evenodd"/>
<path d="M568.0 692.7L569.4 694.0L576.1 696.7L582.7 699.3L587.4 700.0L586.7 698.7L581.4 696.7L574.7 694.0Z" fill="#9ACEFF" fill-rule="evenodd"/>
<path d="M631.6 591.2L631.6 591.2L631.6 591.2L631.6 591.2L631.6 591.2L631.5 591.2L631.5 591.2L631.5 591.3L631.5 591.3L631.5 591.3L631.5 591.3L631.5 591.3L631.5 591.3L631.5 591.3L631.5 591.9L629.4 594.6L626.9 596.2L623.9 594.8L623.9 594.8L623.9 594.8L623.9 594.8L623.9 594.8L623.8 594.8L623.8 594.8L620.8 595.3L620.8 595.3L620.8 595.3L620.8 595.3L620.8 595.3L620.7 595.3L620.7 595.3L620.7 595.3L620.7 595.3L620.7 595.4L620.7 595.4L620.7 595.4L620.1 597.1L618.8 598.7L618.8 598.7L618.8 598.7L618.8 598.7L618.8 598.8L618.8 598.8L618.8 598.8L618.8 598.8L618.8 598.8L618.8 598.8L618.8 598.8L618.8 598.9L618.8 598.9L618.8 598.9L620.3 600.9L619.7 602.4L617.1 603.1L615.8 601.1L615.7 601.1L615.7 601.1L615.7 601.1L615.7 601.1L613.9 599.8L613.9 599.8L613.9 599.8L613.9 599.8L613.9 599.8L613.8 599.8L613.8 599.8L613.8 599.8L613.8 599.8L613.8 599.8L613.8 599.8L611.6 600.7L611.6 600.7L611.6 600.7L611.6 600.7L611.6 600.7L611.6 600.7L611.5 600.8L611.5 600.8L611.5 600.8L611.5 600.8L611.5 600.8L611.5 600.8L611.5 600.8L611.5 600.9L611.5 600.9L612.0 603.4L611.4 605.2L609.7 606.3L609.7 606.3L609.7 606.3L609.6 606.4L609.6 606.4L609.6 606.4L609.6 606.4L609.6 606.4L609.6 606.4L609.6 606.4L609.6 606.5L609.6 606.5L609.6 606.5L609.6 606.5L610.3 608.2L610.3 608.2L610.3 608.2L610.3 608.2L610.3 608.2L610.3 608.2L610.3 608.3L610.3 608.3L610.3 608.3L610.4 608.3L610.4 608.3L610.4 608.3L610.4 608.3L610.4 608.3L610.4 608.3L610.4 608.3L612.2 607.7L614.1 608.1L614.1 608.1L614.1 608.1L614.1 608.1L614.1 608.1L614.1 608.1L614.1 608.1L614.2 608.1L615.9 607.3L617.7 607.1L619.5 607.2L620.5 608.8L620.8 610.7L620.7 612.6L620.7 612.6L620.7 612.6L620.7 612.6L620.8 612.7L620.8 612.7L620.8 612.7L621.8 614.3L621.6 616.2L620.9 618.8L620.9 618.8L620.9 618.8L620.9 618.8L620.9 618.8L620.9 618.9L620.9 618.9L620.9 618.9L619.8 620.6L618.4 622.0L616.2 622.3L616.2 622.3L616.1 622.3L616.1 622.3L616.1 622.3L616.1 622.3L616.1 622.4L616.1 622.4L616.1 622.4L616.1 622.4L616.0 622.4L615.1 624.4L613.3 625.3L611.4 626.0L611.4 626.1L611.4 626.1L611.3 626.1L611.3 626.1L611.3 626.1L611.3 626.1L611.3 626.1L611.3 626.1L611.3 626.1L611.3 626.2L611.3 626.2L611.3 626.2L611.3 626.2L611.3 626.2L611.3 626.2L611.3 626.2L612.0 628.4L611.7 630.6L611.7 630.7L611.6 632.9L611.6 632.9L611.6 632.9L611.6 633.0L611.6 633.0L611.6 633.0L611.6 633.0L611.6 633.0L611.6 633.0L611.6 633.0L611.7 633.0L611.7 633.0L611.7 633.1L611.7 633.1L611.7 633.1L613.7 633.6L613.7 633.6L613.7 633.6L613.8 633.6L613.8 633.6L613.8 633.6L613.8 633.6L613.8 633.6L615.6 632.6L615.6 632.6L615.6 632.6L617.2 631.3L618.2 630.8L619.4 626.0L622.7 621.4L628.1 617.4L633.4 614.7L638.8 613.3L644.1 612.7L646.8 612.7L648.8 618.0L650.8 621.8L654.8 620.0L658.1 617.4L659.4 614.0L658.4 610.0L656.9 605.4L655.4 601.5L653.9 598.6L652.7 595.6L652.3 591.7L652.0 587.8L651.0 583.9L650.9 583.4L650.1 586.3L648.0 587.6L647.9 587.4L647.9 587.4L647.9 587.4L647.8 587.4L647.8 587.4L645.7 586.7L645.7 586.7L645.7 586.7L645.7 586.7L645.6 586.7L643.4 586.9L643.4 586.9L643.4 586.9L643.4 586.9L643.4 586.9L643.4 587.0L643.3 587.0L643.3 587.0L643.1 587.2L640.4 586.8L640.4 586.8L640.4 586.8L640.4 586.8L640.4 586.8L640.3 586.8L640.3 586.8L640.3 586.8L640.3 586.8L640.3 586.8L640.3 586.9L640.3 586.9L640.3 586.9L640.3 586.9L639.1 589.0L639.1 589.1L639.1 589.1L639.1 589.1L639.1 589.1L639.1 589.1L639.1 589.1L639.3 591.3L637.9 590.6L636.5 589.4L636.5 589.4L636.5 589.4L636.5 589.4L636.5 589.4L636.5 589.4L636.4 589.4L636.4 589.4L636.4 589.4L636.4 589.4L636.4 589.4L636.4 589.4L636.4 589.4L634.1 590.6ZM667.8 607.3L666.1 603.3L663.8 604.7L664.4 610.0L666.1 612.9L668.8 613.7Z" fill="#C8E4FF" fill-rule="evenodd"/><path d="M590.2 586.8L590.2 586.8L590.2 586.8L590.2 586.8L590.2 586.8L590.2 586.8L590.2 586.8L590.2 586.8L590.2 586.8L590.3 586.8L590.3 586.9L590.3 586.9L592.6 587.0L592.6 587.0L595.0 587.1L595.0 587.1L595.0 587.1L595.0 587.1L595.0 587.1L595.0 587.1L595.0 587.1L595.0 587.1L595.1 587.1L595.1 587.1L595.1 587.1L595.1 587.0L596.2 585.3L598.0 584.0L598.0 584.0L598.1 584.0L598.1 584.0L598.1 584.0L598.1 584.0L598.1 584.0L598.1 583.9L598.7 581.8L599.9 580.3L601.0 581.5L601.0 581.5L601.0 581.5L601.0 581.5L601.1 581.5L601.1 581.5L602.9 582.1L602.9 582.1L604.8 582.5L605.5 584.4L605.7 586.3L604.6 588.1L604.6 588.1L604.6 588.2L604.6 588.2L604.6 588.2L604.4 590.1L604.4 590.1L604.4 590.2L604.4 590.2L604.6 592.2L604.6 592.2L604.6 592.2L604.6 592.2L604.6 592.2L604.6 592.2L604.6 592.3L604.7 592.3L604.7 592.3L606.4 593.5L607.5 594.4L607.7 592.7L606.6 588.8L605.7 584.8L604.7 580.9L604.0 577.0L602.7 573.6L601.4 571.1L600.8 567.7L600.1 565.3L598.1 564.3L595.7 563.3L592.7 562.8L592.2 563.8L592.7 566.7L593.7 570.2L594.7 573.1L596.2 576.0L595.2 579.0L592.7 580.9L591.3 583.4L589.6 585.5ZM610.1 593.7L612.1 594.5L612.1 594.6L612.2 594.6L612.2 594.6L612.2 594.6L612.2 594.6L612.2 594.6L612.2 594.6L612.3 594.5L612.3 594.5L612.3 594.5L612.3 594.5L613.6 593.4L616.0 593.7L618.4 594.0L620.8 595.6L620.8 595.6L620.8 595.6L620.8 595.6L620.8 595.6L620.8 595.6L620.8 595.6L620.9 595.6L623.8 595.1L626.9 596.5L626.9 596.5L626.9 596.5L626.9 596.5L626.9 596.5L627.0 596.5L627.0 596.5L627.0 596.5L627.0 596.5L627.0 596.5L627.0 596.5L629.6 594.8L629.6 594.8L629.6 594.8L629.6 594.8L629.6 594.8L631.7 592.0L631.7 592.0L631.7 592.0L631.8 592.0L631.8 592.0L631.8 591.9L631.8 591.9L631.8 591.5L634.2 590.9L634.2 590.8L634.2 590.8L636.4 589.7L637.7 590.8L637.7 590.9L637.8 590.9L639.4 591.7L639.4 591.7L639.4 591.7L639.4 591.7L639.5 591.7L639.5 591.7L639.5 591.7L639.5 591.7L639.5 591.7L639.5 591.7L639.5 591.7L639.6 591.7L639.6 591.7L639.6 591.7L639.6 591.6L639.6 591.6L639.6 591.6L639.6 591.6L639.6 591.6L639.6 591.6L639.6 591.6L639.6 591.5L639.6 591.5L639.4 589.1L640.5 587.1L643.1 587.5L643.1 587.5L643.1 587.5L643.2 587.5L643.2 587.5L643.2 587.5L643.2 587.5L643.2 587.5L643.2 587.5L643.2 587.5L643.2 587.5L643.5 587.2L645.6 587.0L647.7 587.7L647.9 587.9L647.9 587.9L648.0 587.9L648.0 587.9L648.0 587.9L648.0 587.9L648.0 587.9L648.0 587.9L648.0 587.9L648.1 587.9L648.1 587.9L648.1 587.9L648.1 587.9L648.1 587.9L650.3 586.5L650.3 586.5L650.3 586.5L650.3 586.5L650.3 586.5L650.3 586.4L650.3 586.4L650.3 586.4L651.1 584.1L651.0 583.9L650.5 580.0L649.5 576.0L648.1 572.1L646.6 568.2L646.4 564.3L647.6 560.4L649.5 556.4L651.5 553.0L653.0 549.6L654.4 547.6L652.0 545.2L648.6 542.2L645.1 540.3L640.7 539.3L636.3 539.3L633.4 536.9L630.0 534.4L625.5 533.4L621.1 534.1L617.2 535.9L613.8 538.3L609.4 542.2L604.5 546.2L599.6 550.1L594.7 553.5L589.8 556.0L587.3 557.9L587.4 558.0L588.1 561.4L588.8 561.8L588.8 561.8L592.7 562.3L596.2 559.9L597.1 558.9L601.1 558.6L603.5 559.4L604.0 562.3L603.3 565.3L604.0 569.2L605.3 573.1L606.2 577.0L606.9 580.9L607.6 584.8L608.6 588.8L609.4 592.7L609.7 594.0ZM609.8 609.5L609.8 609.5L609.8 609.5L609.8 609.5L609.8 609.5L610.3 612.0L610.5 614.5L610.5 614.6L610.5 614.6L610.5 614.6L610.5 614.6L610.6 614.6L610.6 614.6L610.6 614.6L610.6 614.7L610.6 614.7L610.6 614.7L610.6 614.7L610.6 614.7L610.6 614.7L612.5 615.0L613.9 616.3L613.9 616.3L613.9 616.4L614.0 616.4L614.0 616.4L614.0 616.4L614.0 616.4L614.0 616.4L614.0 616.4L614.0 616.4L616.1 616.2L617.7 617.0L619.1 618.5L619.1 618.5L619.1 618.5L619.1 618.5L619.2 618.5L619.2 618.5L619.2 618.5L621.0 619.0L621.0 619.0L621.1 619.0L621.1 619.0L621.1 619.0L621.1 619.0L621.1 619.0L621.1 619.0L621.1 619.0L621.1 618.9L621.2 618.9L621.2 618.9L621.2 618.9L621.2 618.9L621.2 618.9L621.2 618.9L621.2 618.9L621.9 616.3L621.9 616.3L621.9 616.3L622.1 614.3L622.1 614.3L622.1 614.3L622.1 614.3L622.1 614.2L622.1 614.2L622.1 614.2L622.1 614.2L621.0 612.6L621.1 610.6L621.1 610.6L621.1 610.6L620.8 608.8L620.8 608.7L620.8 608.7L620.8 608.7L620.8 608.7L619.7 607.0L619.7 607.0L619.7 607.0L619.6 607.0L619.6 607.0L619.6 607.0L619.6 607.0L619.6 607.0L619.6 607.0L619.6 607.0L619.6 606.9L617.7 606.8L617.7 606.8L617.7 606.8L615.8 607.0L615.8 607.0L615.8 607.0L615.8 607.0L614.1 607.8L612.2 607.4L612.2 607.4L612.2 607.4L612.2 607.4L612.2 607.4L612.1 607.4L610.4 608.0L610.3 608.0L610.3 608.0L610.3 608.0L610.3 608.0L610.3 608.0L610.3 608.0L610.3 608.0L610.3 608.1L610.3 608.1L610.3 608.1L609.8 609.5Z" fill="#B2DBFF" fill-rule="evenodd"/><path d="M559.7 619.9L557.6 622.2L557.6 622.2L557.6 622.2L557.6 622.2L557.5 622.2L557.5 622.3L557.5 622.3L557.5 622.3L557.3 624.4L556.4 626.2L556.4 626.2L556.4 626.2L556.4 626.3L556.0 628.3L555.2 630.2L555.2 630.2L555.2 630.3L555.2 630.3L555.2 630.3L555.2 630.3L555.2 630.3L555.2 630.3L555.2 630.3L555.2 630.4L555.2 630.4L555.2 630.4L556.8 632.2L556.8 632.2L556.9 632.2L556.9 632.2L556.9 632.2L556.9 632.2L556.9 632.3L559.1 633.0L559.7 635.0L559.7 635.0L559.7 635.0L559.7 635.0L559.7 635.1L561.1 637.0L559.4 639.3L559.4 639.3L559.4 639.3L559.4 639.3L559.4 639.3L559.4 639.3L559.4 639.4L559.4 639.4L559.4 639.4L559.4 639.4L559.4 639.4L560.1 641.5L558.6 643.9L558.6 643.9L558.6 644.0L558.6 644.0L558.6 644.0L558.6 644.0L558.6 644.0L558.6 644.0L558.6 644.0L558.6 644.1L558.6 644.1L558.6 644.1L559.7 645.8L559.7 645.8L560.8 647.5L560.9 647.5L560.9 647.5L560.9 647.5L560.9 647.6L560.9 647.6L562.8 648.5L563.6 650.4L563.6 650.4L563.7 650.4L563.7 650.4L563.7 650.4L563.7 650.4L563.7 650.4L565.5 651.5L565.5 651.5L565.5 651.5L565.5 651.5L565.6 651.5L565.6 651.5L565.6 651.5L565.6 651.5L565.6 651.5L565.6 651.5L568.1 650.7L570.5 651.4L570.9 651.7L570.9 651.7L570.9 651.7L570.9 651.7L573.2 652.9L573.2 652.9L573.2 652.9L573.2 652.9L573.3 652.9L575.8 653.1L575.9 653.1L577.8 653.1L577.8 653.1L577.8 653.1L577.8 653.1L577.8 653.1L577.8 653.1L577.9 653.0L577.9 653.0L577.9 653.0L579.5 651.4L581.3 651.5L583.3 651.7L585.3 652.2L585.3 652.2L585.3 652.2L585.3 652.2L585.3 652.2L585.3 652.2L585.3 652.2L585.4 652.2L585.4 652.2L587.1 651.1L587.1 651.1L587.1 651.1L587.1 651.1L587.1 651.1L587.2 651.1L587.2 651.1L587.8 649.8L589.4 650.6L589.4 650.6L589.4 650.6L589.4 650.6L589.4 650.6L589.4 650.6L589.5 650.6L589.5 650.6L589.5 650.6L589.5 650.6L591.4 649.7L593.1 650.4L593.1 650.4L593.1 650.4L594.9 650.7L596.7 651.0L596.7 651.0L596.7 651.0L596.7 651.0L598.4 650.8L598.9 652.9L598.9 652.9L598.9 652.9L598.9 652.9L598.9 652.9L600.2 654.9L599.1 657.3L599.1 657.3L599.1 657.3L599.1 657.3L599.1 657.3L599.1 657.3L599.1 657.3L599.1 657.4L599.1 657.4L599.1 657.4L600.0 659.5L600.0 659.5L600.0 659.5L600.0 659.5L600.0 659.5L600.1 659.5L600.1 659.5L600.1 659.5L600.1 659.5L600.1 659.6L600.1 659.6L600.1 659.6L602.5 659.6L604.8 660.2L604.8 660.2L604.8 660.2L604.9 660.2L604.9 660.2L604.9 660.2L604.9 660.2L604.9 660.2L604.9 660.2L604.9 660.2L605.0 660.2L605.0 660.1L605.0 660.1L606.1 658.7L606.1 658.7L606.1 658.7L606.1 658.6L606.8 657.0L608.3 655.8L608.3 655.8L608.3 655.8L609.6 654.4L609.6 654.4L609.6 654.4L609.6 654.4L609.6 654.3L610.2 652.6L610.8 652.4L610.9 652.4L610.9 652.4L610.9 652.4L610.9 652.3L610.9 652.3L612.3 650.6L612.3 650.6L613.5 648.7L615.4 647.8L617.5 647.5L617.5 647.5L619.5 647.0L619.5 647.0L621.5 646.2L621.5 646.2L621.5 646.2L621.5 646.2L621.5 646.2L621.6 646.1L621.6 646.1L621.6 646.1L621.6 646.1L621.6 646.1L621.6 646.1L621.6 646.1L621.6 646.1L621.6 646.0L621.5 643.7L622.0 642.7L620.1 641.4L619.3 639.6L619.0 639.4L618.0 637.7L618.0 637.7L618.0 637.7L618.0 637.6L616.5 636.3L616.5 636.3L616.5 636.3L614.9 635.1L613.9 633.4L613.9 633.3L613.9 633.3L613.8 633.3L613.8 633.3L613.8 633.3L613.8 633.3L613.8 633.3L613.8 633.3L611.9 632.8L612.0 630.7L612.4 628.4L612.4 628.4L612.4 628.4L612.4 628.4L612.3 628.4L612.3 628.3L611.6 626.1L611.6 626.1L611.6 626.1L611.5 626.1L611.5 626.1L611.5 626.1L611.5 626.1L610.0 625.0L608.8 623.6L609.1 621.5L609.1 621.5L609.1 621.5L609.1 621.5L609.1 621.5L609.1 621.5L609.1 621.5L608.3 619.5L607.9 617.6L609.5 616.3L609.5 616.3L609.5 616.3L610.8 614.6L610.8 614.6L610.8 614.6L610.8 614.6L610.8 614.6L610.8 614.6L610.8 614.6L610.8 614.5L610.8 614.5L610.6 612.0L610.6 612.0L610.1 609.5L610.1 609.5L610.1 609.4L610.1 609.4L610.1 609.4L610.1 609.4L610.0 609.4L610.0 609.4L610.0 609.4L610.0 609.4L610.0 609.4L610.0 609.4L608.0 608.8L608.0 608.8L608.0 608.8L608.0 608.8L608.0 608.8L608.0 608.8L607.9 608.8L607.9 608.8L607.9 608.8L607.9 608.8L607.9 608.8L606.3 610.1L604.6 610.5L602.6 609.7L602.6 609.7L602.6 609.7L602.6 609.7L602.6 609.7L602.5 609.7L602.5 609.7L602.5 609.7L602.5 609.7L602.5 609.7L602.5 609.7L600.9 610.8L599.2 609.9L597.8 608.4L596.4 607.0L596.4 607.0L596.4 607.0L596.3 607.0L596.3 606.9L596.3 606.9L596.3 606.9L596.3 606.9L596.3 606.9L596.3 606.9L596.2 606.9L596.2 606.9L596.2 606.9L596.2 606.9L596.2 607.0L596.2 607.0L596.2 607.0L596.2 607.0L596.1 607.0L596.1 607.0L595.2 608.8L593.8 610.2L593.8 610.3L592.7 611.9L589.7 613.1L588.0 612.4L586.4 611.4L585.1 609.9L585.1 609.9L585.1 609.9L585.1 609.9L585.1 609.9L585.1 609.9L585.0 609.9L585.0 609.9L585.0 609.9L585.0 609.9L582.9 609.9L582.9 609.9L582.9 609.9L582.9 609.9L582.9 609.9L582.9 609.9L582.8 609.9L580.3 611.4L578.2 611.1L576.7 609.8L575.5 607.8L575.5 607.7L575.5 607.7L575.5 607.7L575.5 607.7L575.5 607.7L575.5 607.7L575.5 607.7L575.4 607.7L575.4 607.7L575.4 607.7L575.4 607.7L575.4 607.7L575.4 607.7L572.9 608.2L571.3 607.0L571.3 607.0L569.6 605.9L569.4 605.4L569.4 605.4L569.4 605.3L569.4 605.3L569.4 605.3L569.4 605.3L569.4 605.3L569.4 605.3L569.4 605.3L569.3 605.3L569.3 605.3L569.3 605.3L569.1 605.2L569.0 605.2L569.0 605.2L569.0 605.2L569.0 605.2L569.0 605.2L569.0 605.3L569.0 605.3L567.4 606.2L565.6 606.5L565.6 606.5L565.5 606.6L565.5 606.6L565.5 606.6L564.0 607.6L562.2 607.9L562.2 607.9L562.2 607.9L562.2 608.0L562.1 608.0L562.1 608.0L562.1 608.0L560.7 609.2L560.7 609.2L559.3 610.5L557.6 611.1L557.6 611.1L556.0 611.9L555.9 611.9L555.9 611.9L555.9 611.9L555.9 611.9L555.9 611.9L555.9 611.9L555.9 611.9L555.9 612.0L555.9 612.0L555.6 613.0L555.6 613.0L555.6 613.0L555.6 613.1L555.6 613.1L555.6 613.1L555.6 613.1L555.6 613.1L555.6 613.1L555.6 613.1L555.6 613.1L556.9 614.7L556.9 617.0L556.9 617.0L556.9 617.0L556.9 617.0L556.9 617.0L556.9 617.0L556.9 617.1L556.9 617.1L556.9 617.1L556.9 617.1L558.6 618.4Z" fill="#A5D3FF" fill-rule="evenodd"/><path d="M548.2 641.5L548.2 641.5L548.1 641.5L548.1 641.5L548.1 641.5L548.1 641.5L548.1 641.5L548.1 641.5L548.1 641.5L545.8 641.9L544.6 640.2L544.1 638.3L544.1 638.3L544.1 638.3L544.1 638.3L544.1 638.3L542.9 636.8L541.8 635.2L541.8 635.2L541.8 635.2L541.8 635.2L541.8 635.2L541.8 635.2L541.8 635.2L541.8 635.1L540.7 634.9L540.7 634.9L540.7 634.9L540.7 634.9L538.7 634.8L538.7 634.9L538.6 634.9L538.6 634.9L538.6 634.9L538.6 634.9L536.8 635.8L536.8 635.8L536.8 635.8L536.8 635.8L536.8 635.8L535.3 637.4L533.3 637.1L533.3 637.1L533.2 637.1L533.2 637.1L533.2 637.1L533.2 637.1L533.2 637.1L533.2 637.1L533.2 637.1L533.1 637.1L533.1 637.1L533.1 637.1L533.1 637.1L533.1 637.1L533.1 637.2L532.4 639.0L531.8 639.0L532.0 640.7L531.4 646.0L528.7 648.7L525.4 650.0L522.7 652.0L526.0 654.0L527.9 654.6L527.8 654.0L530.0 652.0L532.0 654.0L530.9 655.6L533.4 658.0L534.7 662.0L535.4 667.4L536.0 671.4L538.7 674.1L544.0 675.4L550.7 675.4L557.4 675.4L562.7 675.4L568.0 676.7L572.0 680.7L574.7 684.1L575.9 680.6L573.4 679.4L572.0 675.4L576.7 674.7L578.1 678.1L576.2 680.6L576.7 684.0L576.9 684.3L576.7 683.4L582.7 682.7L584.7 685.4L580.1 687.1L578.6 686.5L578.7 686.7L582.7 692.7L586.7 697.3L587.8 698.4L589.3 698.3L591.3 699.0L592.3 701.0L592.3 701.0L592.3 701.0L592.3 701.0L592.3 701.0L592.3 701.0L592.3 701.0L592.4 701.0L592.4 701.1L592.4 701.1L592.4 701.1L594.4 701.4L594.4 701.4L594.4 701.4L594.4 701.4L594.4 701.4L594.4 701.4L594.5 701.4L596.4 700.7L598.3 701.1L598.3 701.1L598.4 701.1L598.4 701.1L598.4 701.1L598.4 701.1L598.4 701.1L598.4 701.1L598.4 701.1L598.5 701.1L598.5 701.1L600.4 699.2L602.0 700.0L602.0 700.0L602.0 700.0L602.0 700.0L602.1 700.0L602.1 700.0L602.1 700.0L604.1 699.9L605.4 701.8L605.4 701.8L605.4 701.8L605.4 701.8L605.5 701.8L605.5 701.8L605.5 701.8L607.3 702.5L607.3 702.5L607.3 702.5L609.3 702.8L611.1 703.5L611.1 703.5L613.0 704.0L613.0 704.0L613.0 704.0L613.0 704.0L613.0 704.0L613.0 704.0L613.1 704.0L613.1 704.0L613.1 704.0L613.5 703.8L614.7 700.0L613.4 694.7L614.8 693.7L614.9 693.3L615.7 692.3L616.2 692.0L616.7 688.0L614.7 685.3L610.7 684.0L610.1 682.8L608.7 685.4L605.4 686.1L603.4 682.1L605.4 679.4L608.7 679.1L609.0 679.7L610.1 678.7L612.1 675.4L615.4 673.4L620.1 671.4L625.4 670.1L630.1 669.4L634.1 667.4L638.1 664.0L639.8 659.4L639.8 658.5L639.6 658.1L639.6 658.1L639.6 658.1L639.6 658.0L639.6 658.0L639.6 658.0L639.6 658.0L639.5 658.0L637.1 656.9L637.9 654.4L637.9 654.4L637.9 654.4L637.9 654.4L637.9 654.4L637.9 654.3L637.9 654.3L637.9 654.3L637.1 652.4L637.1 652.4L636.2 650.5L636.2 650.5L636.2 650.5L636.2 650.5L636.2 650.5L636.1 650.3L635.6 648.2L635.7 648.0L633.4 646.0L628.8 644.7L624.1 644.0L621.8 642.5L621.2 643.6L621.2 643.7L621.2 643.7L621.2 643.7L621.2 643.7L621.2 643.7L621.3 645.9L619.4 646.7L617.4 647.2L615.3 647.5L615.3 647.5L615.3 647.6L615.3 647.6L613.4 648.5L613.4 648.5L613.3 648.5L613.3 648.5L613.3 648.5L613.3 648.5L613.3 648.5L612.1 650.4L610.7 652.1L610.1 652.4L610.1 652.4L610.0 652.4L610.0 652.4L610.0 652.4L610.0 652.4L610.0 652.4L610.0 652.4L610.0 652.4L610.0 652.5L609.3 654.2L608.1 655.6L606.6 656.7L606.6 656.8L606.6 656.8L606.6 656.8L606.6 656.8L606.6 656.8L605.8 658.5L604.8 659.9L602.6 659.3L602.5 659.3L602.5 659.3L600.1 659.3L600.1 659.3L600.1 659.3L600.1 659.3L600.1 659.3L598.1 659.9L598.1 659.9L598.1 659.9L596.3 661.0L594.4 660.4L594.4 660.4L594.4 660.4L592.4 660.3L590.8 658.8L590.8 658.8L590.8 658.8L590.8 658.7L590.8 658.7L590.8 658.7L590.7 658.7L590.7 658.7L588.8 658.5L588.0 656.8L588.7 654.7L588.7 654.7L588.8 654.7L588.8 654.7L588.8 654.7L588.8 654.6L588.8 654.6L588.7 654.6L588.2 652.7L588.2 652.7L588.2 652.7L587.2 650.9L587.2 650.9L587.1 650.9L587.1 650.9L587.1 650.9L587.1 650.9L587.1 650.9L587.1 650.9L587.1 650.9L587.1 650.9L587.0 650.9L587.0 650.9L587.0 650.9L587.0 650.9L587.0 650.9L587.0 650.9L587.0 650.9L585.3 651.9L583.3 651.4L583.3 651.4L581.3 651.2L581.3 651.2L579.4 651.1L579.4 651.1L579.4 651.1L579.4 651.1L579.4 651.1L579.3 651.2L579.3 651.2L579.3 651.2L579.3 651.2L577.7 652.8L575.9 652.8L573.3 652.6L571.0 651.4L570.7 651.1L570.7 651.1L570.7 651.1L570.7 651.1L570.7 651.1L570.6 651.1L568.1 650.4L568.1 650.4L568.1 650.4L568.1 650.4L568.0 650.4L568.0 650.4L568.0 650.4L565.6 651.2L563.9 650.2L563.1 648.3L563.1 648.3L563.1 648.3L563.1 648.2L563.0 648.2L563.0 648.2L563.0 648.2L563.0 648.2L561.1 647.3L559.9 645.7L558.9 643.9L558.9 643.9L558.9 643.9L558.8 643.9L558.8 643.9L558.8 643.9L558.8 643.9L558.8 643.9L558.8 643.9L558.8 643.9L558.8 643.9L558.7 643.9L556.6 643.9L556.5 644.0L556.5 644.0L556.5 644.0L554.4 644.8L552.3 644.5L551.6 643.5L551.6 643.5L551.6 643.5L551.6 643.5L551.6 643.5L551.6 643.5L551.6 643.4L549.8 642.7ZM540.7 664.7L539.4 668.7L537.8 667.4L538.0 664.7L539.8 662.7ZM527.9 683.0L527.9 683.0L527.9 683.1L527.9 683.1L527.9 683.1L528.0 683.1L528.0 683.1L528.0 683.1L528.0 683.1L528.5 683.0L530.0 680.7L528.7 679.7L526.7 682.1L526.9 682.4ZM581.7 698.3L583.6 699.2L583.6 699.2L583.6 699.2L583.6 699.2L583.6 699.2L583.6 699.2L583.6 699.2L583.7 699.2L583.7 699.2L583.7 699.2L585.4 698.2L581.4 696.7L574.7 694.0L568.0 692.7L569.4 694.0L576.1 696.7L580.5 698.4ZM532.0 673.4L530.4 668.7L529.1 667.4L530.0 672.1L531.8 676.7L533.1 677.4Z" fill="#91CAFF" fill-rule="evenodd"/><path d="M615.6 692.1L616.2 692.1L616.7 688.0L614.7 685.3L613.3 684.9ZM596.3 605.8L596.3 607.1L600.9 611.0L609.9 609.5L610.4 608.1L609.8 606.5L607.4 604.4L606.0 606.4L604.5 604.4L603.3 602.4L601.9 602.6L601.1 603.0L598.6 603.5L598.2 603.1ZM510.3 592.7L510.8 592.7L512.8 591.5L509.2 591.9ZM621.1 545.7L618.3 544.8L616.8 539.0L625.0 536.4L626.6 543.2ZM595.6 558.6L587.7 559.7L588.1 561.4L588.8 561.8L588.8 561.8L592.7 562.3L596.2 559.9L596.3 559.8ZM597.4 566.3L598.5 564.5L598.1 564.3L595.7 563.3L592.7 562.8L592.2 563.8L592.7 566.7L592.7 566.7ZM558.4 592.4L563.5 586.3L563.0 583.9L557.6 582.2L551.7 585.5L555.2 591.1ZM552.4 671.2L552.1 670.9L542.6 673.8L542.5 675.0L544.0 675.4L550.7 675.4L553.5 675.4ZM621.4 646.0L613.4 648.6L610.8 652.2L615.3 657.7L621.7 657.6L624.5 649.7ZM642.9 604.5L644.3 605.5L644.5 609.0L640.5 609.5L639.0 606.5ZM590.3 586.7L589.6 585.5L589.3 585.8L589.0 588.0ZM586.9 584.8L584.4 583.7L582.0 586.8L582.9 590.2L585.4 590.9L587.1 587.8ZM541.7 635.3L548.6 630.5L545.7 624.4L542.0 624.2L538.9 627.0L540.7 635.0ZM611.4 626.2L611.7 632.9L605.6 636.7L601.7 636.8L601.4 636.3L602.4 625.1L608.6 623.6ZM610.7 614.5L609.9 609.5L600.9 611.0L602.1 617.1L607.8 617.6ZM617.6 573.3L622.0 572.2L627.0 568.5L627.3 568.1L626.5 566.1L624.2 563.0L622.2 562.2L619.4 562.5L613.9 567.1ZM524.3 651.2L527.3 653.8L535.8 647.1L532.8 642.4L531.7 642.9L531.4 646.0L528.7 648.7L525.4 650.0L524.3 650.8ZM653.9 598.5L652.7 595.6L652.7 595.4L652.0 595.2L651.8 596.1L653.1 598.9ZM552.1 559.7L549.3 558.8L548.4 559.3L552.0 560.0L552.3 560.1ZM583.4 666.4L588.7 658.6L587.0 651.0L575.9 652.9L579.5 665.4L582.1 666.8ZM632.5 600.1L633.0 598.5L636.2 596.9L637.2 598.2L634.8 603.7ZM649.1 590.5L652.1 593.3L651.7 594.3L647.7 594.8L647.5 592.3ZM580.3 670.9L582.1 666.8L579.5 665.4L571.1 664.9L568.8 671.1L572.0 675.5L572.0 675.5L572.0 675.4L573.2 675.2ZM637.2 586.5L639.1 585.8L639.5 584.4L637.2 581.8L633.8 583.5L634.2 584.6ZM532.5 639.1L533.2 637.2L529.7 629.8L529.3 629.8L529.4 630.0L531.4 635.4L531.8 639.1ZM616.8 539.0L625.0 536.4L625.3 535.6L624.5 533.6L621.1 534.1L617.2 535.9L614.6 537.7ZM637.4 605.4L635.0 605.1L634.8 603.7L637.2 598.2L639.7 599.0L639.9 601.4ZM621.1 618.8L610.7 614.5L607.8 617.6L608.6 623.6L611.4 626.2L621.1 618.9ZM636.1 650.6L639.8 659.3L639.8 654.0L637.9 650.3ZM649.9 597.3L651.8 596.1L653.1 598.9L652.9 599.2L650.3 598.7L649.9 598.3ZM652.8 603.0L653.6 602.1L653.5 600.6L652.9 599.5L650.1 601.4L650.2 602.2ZM572.0 675.5L569.4 678.1L572.0 680.7L574.6 684.0L574.8 683.9L575.9 680.6L573.4 679.4L572.0 675.5ZM577.6 682.9L576.2 681.0L576.6 683.2ZM653.4 546.6L652.0 545.2L648.6 542.2L645.5 540.5L647.0 547.5ZM622.5 552.0L621.1 545.7L626.6 543.2L628.4 544.4L629.3 547.5L625.6 552.4ZM601.4 636.3L602.4 625.1L598.1 620.9L592.9 624.2L596.2 633.1ZM598.5 688.2L600.1 689.2L604.9 685.1L603.4 682.1L605.4 679.4L606.9 679.3L603.4 674.8L596.8 678.2ZM551.5 643.6L552.2 644.6L549.9 649.5L537.5 648.2L537.1 647.7L544.4 640.2Z" fill="#ffffff" fill-opacity="0.045"/><path d="M650.2 586.4L651.9 587.4L651.0 583.9L651.0 583.8ZM603.3 602.4L603.0 602.0L601.9 602.6ZM604.8 592.2L597.7 593.2L596.9 595.0L597.6 598.7L597.6 598.6L599.6 596.6L603.5 595.6L607.4 595.1L607.5 594.2ZM551.1 602.5L543.9 607.3L538.1 605.7L537.7 600.4L542.7 594.9L549.5 597.8ZM579.2 558.5L577.4 559.4L573.9 560.7L574.4 565.9L574.9 566.5L578.9 566.9L580.1 565.4L582.7 560.7L582.6 560.4ZM647.4 572.6L643.5 573.9L641.8 575.6L648.7 579.9L650.1 578.5L649.5 576.0L648.6 573.5ZM539.6 617.1L536.5 611.8L530.1 617.9L530.1 618.6L532.3 621.3L539.1 619.2ZM582.9 596.9L584.9 601.2L586.3 601.8L587.0 596.3L586.9 596.3L586.7 598.0L584.7 600.7L583.3 596.8ZM596.9 595.0L588.0 596.2L587.8 597.6L586.9 601.5L586.8 602.0L596.3 605.8L598.2 603.1L597.1 602.0L597.6 598.7ZM596.3 661.1L588.7 658.6L583.4 666.4L590.7 672.3L596.6 667.4ZM644.5 590.5L645.2 591.6L643.7 594.4L640.9 591.7L643.3 589.8ZM611.7 557.3L609.6 557.4L608.3 553.2L613.4 547.6L615.0 547.6L618.3 553.8ZM608.9 583.9L611.4 581.7L608.9 574.8L608.3 574.5L605.9 575.5L606.2 577.0L606.9 580.9L607.5 584.1ZM599.6 578.0L599.8 580.1L605.6 584.3L604.7 580.9L604.0 577.0L603.7 576.3ZM644.1 596.6L642.8 597.4L642.4 597.4L638.8 593.7L639.6 591.7L640.9 591.7L643.7 594.4L644.2 596.5ZM559.3 632.9L560.2 641.5L569.5 637.7L564.5 631.5ZM614.2 698.1L613.4 694.7L614.7 693.8L614.7 693.2L601.7 692.6L600.3 699.0L613.0 703.9L613.5 703.6L613.8 702.8ZM639.6 591.7L639.5 591.5L636.4 589.6L631.6 591.3L631.6 591.9L636.2 595.5L638.8 593.7ZM653.6 602.1L652.8 603.0L652.8 605.1L653.6 606.9L655.8 606.7L656.0 606.1L656.0 603.1L655.9 602.7ZM656.4 618.3L651.4 614.4L648.9 618.2L650.8 621.8L654.8 620.0L656.4 618.7ZM613.0 703.9L600.3 699.0L598.4 700.9L600.5 710.7L601.4 711.4L605.4 710.0L608.1 708.7L610.7 706.0L612.5 704.7ZM576.0 625.3L585.0 628.2L589.3 623.5L587.9 620.6L579.0 618.0L576.3 620.4ZM600.1 689.2L601.7 692.6L614.7 693.2L615.6 692.1L613.3 684.9L610.7 684.0L610.1 682.8L608.7 685.4L605.4 686.1L604.9 685.1ZM549.3 558.8L552.1 559.7L554.7 558.6L552.0 558.0L549.4 557.2ZM666.3 603.8L666.1 603.3L663.8 604.7L663.8 604.9ZM549.3 558.8L549.4 557.2L545.4 556.0L540.0 553.4L538.0 552.0L540.0 556.0L545.4 558.7L548.4 559.3ZM625.3 535.6L630.4 534.7L630.0 534.4L625.5 533.4L624.5 533.6ZM541.7 635.3L544.4 640.2L537.1 647.7L535.8 647.1L532.8 642.4L532.5 639.1L533.2 637.2L540.7 635.0ZM606.3 563.3L609.6 557.4L608.3 553.2L607.5 552.6L595.9 552.9L595.4 553.3L595.6 558.6L596.3 559.8L597.1 558.9L601.1 558.6L603.5 559.4L604.0 562.3L603.7 563.6ZM536.5 611.8L536.8 606.9L525.4 607.7L524.3 609.1L530.1 617.9ZM599.8 580.1L595.0 587.0L597.7 593.2L604.8 592.2L605.6 584.6L605.6 584.3ZM563.0 583.9L557.6 582.2L559.7 573.2L565.8 580.2ZM640.5 609.5L639.0 606.5L637.4 605.4L635.0 605.1L634.2 605.7L633.2 608.4L637.9 613.5L638.8 613.3L639.5 613.2ZM524.3 609.1L522.9 609.7L524.0 611.3L526.7 616.7L527.5 619.6L530.1 618.6L530.1 617.9ZM595.6 558.6L595.4 553.3L595.2 553.2L594.7 553.5L589.8 556.0L587.3 557.9L587.4 558.0L587.7 559.7ZM651.4 614.4L651.3 614.1L648.9 612.9L647.0 612.7L646.8 612.8L648.8 618.0L648.9 618.2Z" fill="#ffffff" fill-opacity="0.09"/><path d="M542.7 594.9L549.5 597.8L555.2 591.1L551.7 585.5L548.8 584.1L547.0 584.0L547.4 586.7L545.4 590.7L542.6 591.4ZM551.1 602.5L549.5 597.8L555.2 591.1L558.4 592.4L559.5 593.8L559.8 600.7L554.2 603.9ZM572.0 593.7L559.5 593.8L559.8 600.7L569.0 605.4L569.3 605.4L574.2 597.0L573.9 596.5L571.4 596.7L570.7 594.0L572.2 593.9ZM580.9 689.4L589.2 687.4L588.4 679.6L582.2 679.5L578.4 683.1L578.4 683.2L582.7 682.7L584.7 685.4L580.1 687.1L580.0 687.1ZM539.1 619.2L542.0 624.2L538.9 627.0L532.5 626.3L532.3 621.3ZM582.9 610.0L589.7 613.3L587.9 620.6L579.0 618.0L580.3 611.6ZM552.1 670.9L542.6 673.8L539.0 671.0L542.7 663.3L551.8 669.0ZM629.7 651.4L628.9 667.6L624.7 665.3L621.7 657.6L624.5 649.7ZM649.1 590.2L649.1 590.5L652.1 593.3L652.4 593.1L652.3 591.7L652.1 589.3ZM613.6 590.6L613.5 593.3L618.5 593.9L621.8 586.9L616.0 587.3ZM513.9 602.5L511.1 603.8L514.7 604.7L515.4 604.6ZM572.0 593.7L572.2 593.9L578.7 593.7L579.0 596.0L573.9 596.5L574.2 597.0L582.7 596.7L582.9 595.9L582.7 595.3L582.1 590.0L582.1 594.3L581.4 592.1L580.1 588.1L578.7 584.7L576.1 585.4L572.6 586.5L571.4 590.1ZM578.1 583.1L578.7 584.7L578.4 583.3ZM613.7 633.4L618.7 638.1L618.1 636.7L618.1 631.4L618.3 630.6ZM615.3 657.7L614.6 666.0L624.7 665.3L621.7 657.6ZM538.7 658.4L534.0 660.0L534.7 662.0L535.4 667.4L536.0 671.3L539.0 671.0L542.7 663.3L541.7 659.7ZM540.7 664.7L539.4 668.7L537.8 667.4L538.0 664.7L539.8 662.7ZM529.1 667.7L529.3 668.6L529.7 669.6L531.1 670.7L530.4 668.7L529.2 667.5ZM601.2 637.8L601.5 648.4L598.6 650.7L587.7 649.6L587.6 646.2ZM646.0 560.6L647.4 561.1L647.6 560.4L649.5 556.4L650.6 554.5L648.1 554.3L645.7 558.5ZM569.5 605.9L580.3 611.6L579.0 618.0L576.3 620.4L568.2 615.8ZM532.6 675.7L532.0 673.4L531.1 670.7L529.7 669.6L529.5 669.7L530.0 672.1L531.8 676.7L532.8 677.2ZM528.6 682.7L530.0 680.7L528.7 679.7L526.7 682.1ZM639.0 572.0L639.2 569.6L635.5 565.3L628.7 568.2L630.7 569.7ZM604.9 660.0L610.1 652.5L610.8 652.2L615.3 657.7L614.6 666.0L612.1 667.7L608.6 667.4ZM607.8 617.6L602.1 617.1L598.2 620.6L598.1 620.9L602.4 625.1L608.6 623.6ZM559.3 632.9L560.2 641.5L558.7 644.0L552.2 644.6L551.5 643.6L552.0 631.5L555.4 630.3ZM621.8 616.3L619.5 607.1L620.9 604.8L625.4 604.2L628.5 611.2Z" fill="#0a6fe0" fill-opacity="0.05"/><path d="M595.4 553.3L595.9 552.9L596.3 552.4L595.2 553.2ZM624.9 588.1L622.5 586.4L621.8 586.9L618.5 593.9L620.8 595.4L623.8 595.0ZM582.6 560.4L581.4 557.4L579.2 558.5ZM638.8 593.7L636.2 595.5L636.2 596.9L637.2 598.2L639.7 599.0L642.4 597.4ZM569.3 605.4L569.5 605.9L568.2 615.8L561.9 620.1L559.9 620.0L555.7 613.1L556.0 612.0L569.0 605.4ZM609.8 606.5L613.8 599.9L612.2 594.4L609.8 594.6L609.9 595.1L610.4 598.6L609.4 601.5L607.4 604.4L607.4 604.4ZM627.4 600.3L626.9 596.3L629.5 594.7L633.0 598.5L632.5 600.1ZM600.1 659.4L604.9 660.0L608.6 667.4L604.1 671.9L596.6 667.4L596.3 661.1ZM559.7 573.2L565.8 580.2L568.2 579.9L571.6 574.6L562.1 568.4L559.1 570.4L559.0 570.8ZM629.6 668.2L627.8 669.7L630.1 669.4L631.2 668.8ZM582.2 679.5L580.3 670.9L582.1 666.8L583.4 666.4L590.7 672.3L591.7 676.3L588.4 679.6ZM561.9 620.1L566.7 626.7L574.4 627.2L576.0 625.3L576.3 620.4L568.2 615.8ZM626.3 603.5L625.4 604.2L628.5 611.2L630.3 611.4L633.2 608.4L634.2 605.7ZM573.9 638.6L574.1 639.2L586.9 645.1L587.2 634.7L585.5 633.0L574.7 636.7ZM652.8 605.1L653.6 606.9L652.9 607.6L648.1 605.1L647.9 604.6L648.8 604.1ZM629.2 577.2L627.0 568.5L627.3 568.1L628.7 568.2L630.7 569.7L635.5 576.8L634.8 577.3ZM577.6 682.9L576.6 683.2L576.7 684.0L576.9 684.3L576.7 683.4L578.4 683.2L578.4 683.1ZM574.6 684.0L574.7 684.1L574.8 683.9ZM573.1 695.5L576.1 696.7L578.1 697.5L578.8 695.6L574.7 694.0L570.9 693.3ZM580.9 689.4L580.0 687.1L578.6 686.5L578.7 686.7L580.8 689.8ZM532.8 642.4L532.5 639.1L531.8 639.1L532.0 640.7L531.7 642.9ZM589.2 687.4L591.8 689.1L598.5 688.2L596.8 678.2L591.7 676.3L588.4 679.6ZM587.2 634.7L596.2 633.1L601.4 636.3L601.7 636.8L601.2 637.8L587.6 646.2L586.9 645.1ZM615.2 581.3L611.4 581.7L608.9 574.8L617.2 573.8L616.6 580.3ZM521.1 566.0L521.1 566.0L521.1 566.1ZM598.4 700.9L592.4 700.9L591.7 702.5L593.4 704.7L596.1 706.0L598.7 709.4L600.5 710.7ZM557.7 622.3L547.6 621.7L545.7 624.4L548.6 630.5L552.0 631.5L555.4 630.3ZM548.8 584.1L551.7 585.5L557.6 582.2L559.7 573.2L559.0 570.8L558.7 573.4L556.0 576.1L552.6 577.4ZM634.2 550.5L629.3 547.5L625.6 552.4L627.5 555.5L635.3 555.6L635.3 555.6L635.8 554.6ZM616.6 580.3L622.2 582.8L624.4 580.8L622.0 572.2L617.6 573.3L617.2 573.8ZM513.9 602.5L514.2 601.8L509.3 603.3L511.1 603.8ZM515.0 599.9L510.8 592.7L510.3 592.7L508.3 595.6L512.7 598.7L514.8 600.4ZM612.1 667.7L608.6 667.4L604.1 671.9L603.4 674.8L606.9 679.3L608.7 679.1L609.0 679.7L610.1 678.7L612.1 675.4L615.0 673.6Z" fill="#0a6fe0" fill-opacity="0.1"/><path d="M614.7 693.2L614.7 693.5M614.7 693.2L612.9 693.3L611.0 693.2L609.2 691.6L607.3 691.5L605.4 692.6L603.6 692.5L601.7 692.6M601.7 692.6L601.7 694.9L601.2 697.0L600.3 699.0M600.3 699.0L602.1 699.9L604.2 699.7L605.5 701.7L607.4 702.4L609.3 702.6L611.1 703.3L613.0 703.9M613.0 703.9L613.3 703.7M604.4 684.6L603.8 684.6L603.1 686.7L601.7 688.0L600.1 689.2M600.1 689.2L600.4 691.2L601.7 692.6M613.0 685.0L613.1 686.5L614.8 688.1L614.9 690.2L615.6 692.1M615.6 692.1L614.7 693.2M612.6 704.3L613.0 703.9M598.4 700.9L598.5 702.9L599.3 704.7L600.0 706.6L600.5 708.5L601.0 710.4L601.0 710.8M598.4 700.9L600.3 699.0M606.6 679.1L606.0 678.3L604.9 676.4L603.4 674.8M600.1 689.2L598.5 688.2M598.5 688.2L598.5 686.1L597.0 684.3L597.5 682.2L597.9 680.1L596.8 678.2M603.4 674.8L601.9 675.8L600.2 676.7L598.5 677.4L596.8 678.2M624.7 665.3L626.8 666.6L628.9 667.6M624.7 665.3L622.7 665.5L620.7 666.3L618.7 665.5L616.6 665.2L614.6 666.0M628.9 669.4L629.6 668.2M615.3 673.2L615.2 672.5L614.2 670.9L613.0 669.4L612.1 667.7M629.6 668.2L628.9 667.6M614.6 666.0L612.1 667.7M598.6 650.7L596.7 650.8L594.9 650.5L593.1 650.2L591.4 649.5L589.4 650.5L587.7 649.6M598.6 650.7L600.6 650.2L601.5 648.4M587.7 649.6L587.6 646.2M601.5 648.4L601.1 646.3L600.5 644.2L600.4 642.1L601.1 639.9L601.2 637.8M587.6 646.2L589.4 645.2L591.4 644.7L592.4 642.6L594.6 642.3L596.4 641.5L597.9 640.1L599.6 639.0L601.2 637.8M624.7 665.3L624.0 663.4L623.3 661.4L622.2 659.6L621.7 657.6M614.6 666.0L613.9 663.8L614.1 661.8L615.1 659.8L615.3 657.7M621.7 657.6L619.5 657.2L617.4 657.1L615.3 657.7M601.5 648.4L602.9 649.9L604.8 650.4L607.0 650.3L607.8 652.9L610.1 652.5M605.6 636.7L603.7 636.4L601.7 636.8M605.6 636.7L606.8 638.4L607.9 640.1L607.6 642.7L610.5 643.2L610.7 645.6L611.6 647.4L613.4 648.6M610.1 652.5L610.8 652.2M601.2 637.8L601.7 636.8M613.4 648.6L612.2 650.5L610.8 652.2M510.3 592.7L509.4 592.0M510.3 592.7L510.8 592.7M510.8 592.7L511.9 591.8M523.3 567.0L521.6 566.9M548.2 559.0L549.3 558.8M549.5 557.5L549.3 558.8M562.1 568.4L562.7 567.3M562.1 568.4L564.0 569.0L565.8 569.7L566.5 572.1L568.5 572.5L570.4 573.0L571.6 574.6M562.7 567.3L564.5 565.9L566.5 565.9L568.6 566.9L570.4 565.1L572.4 565.6L574.4 565.9M574.4 565.9L574.9 566.5M574.9 566.5L574.0 568.3L574.6 570.5L574.7 572.5L573.1 574.2M571.6 574.6L573.1 574.2M573.6 561.0L573.5 562.2L575.0 563.9L574.4 565.9M562.7 567.3L563.8 565.2L563.2 562.8L563.7 560.5M565.7 560.3L563.7 560.5M651.6 621.2L651.8 620.8L652.9 620.6M613.8 599.9L615.6 601.2L617.1 603.3L619.8 602.6M613.8 599.9L611.7 600.8L612.1 603.4L611.5 605.3L609.8 606.5M619.8 602.6L620.9 604.8M609.8 606.5L610.4 608.1M620.9 604.8L619.5 607.1M619.5 607.1L617.7 607.0L615.8 607.2L614.1 608.0L612.2 607.6L610.4 608.1M620.8 595.4L618.5 593.9M620.8 595.4L623.8 595.0M618.5 593.9L619.0 592.0L619.9 590.3L620.7 588.6L621.8 586.9M622.5 586.4L624.9 588.1M622.5 586.4L621.8 586.9M623.8 595.0L624.3 592.7L623.7 590.2L624.9 588.1M620.9 604.8L623.1 603.8L625.4 604.2M625.4 604.2L626.2 606.0L626.9 607.7L627.1 609.8L628.5 611.2M619.5 607.1L620.6 608.8L620.9 610.6L620.9 612.6L621.9 614.3L621.8 616.3M628.5 611.2L626.9 612.6L625.5 614.3L623.3 614.8L621.8 616.3M532.8 642.4L531.9 643.6M532.8 642.4L533.7 644.0L534.6 645.7L535.8 647.1M524.3 651.2L524.3 651.1M524.3 651.2L526.3 651.8L527.3 653.8M535.8 647.1L534.3 648.0L533.3 649.7L531.8 650.8L529.5 650.7L529.4 652.3M527.9 653.7L527.3 653.8M598.5 688.2L596.3 688.9L594.0 688.5L591.8 689.1M592.4 700.9L594.4 701.3L596.4 700.5L598.4 700.9M592.4 700.9L591.5 698.8L589.3 698.1M591.8 689.1L591.1 690.8L590.7 692.7L590.9 694.7L590.6 696.6L589.3 698.1M591.6 702.1L592.4 700.9M615.6 692.1L616.0 691.9M629.6 668.2L631.5 668.5L631.5 668.5M602.4 625.1L602.4 627.0L602.6 628.9L601.8 630.7L601.8 632.6L601.6 634.5L601.4 636.3M602.4 625.1L601.7 622.9L600.0 621.7L598.1 620.9M598.1 620.9L596.5 622.1L594.6 623.0L592.9 624.2M592.9 624.2L593.6 626.0L594.6 627.6L593.7 630.0L595.1 631.5L596.2 633.1M596.2 633.1L597.6 634.7L599.5 635.6L601.4 636.3M575.9 652.9L577.8 652.9L579.4 651.3L581.3 651.3L583.3 651.6L585.3 652.1L587.0 651.0M575.9 652.9L576.7 654.6L576.5 656.6L577.5 658.3L578.2 660.0L578.2 661.9L578.8 663.7L579.5 665.4M587.0 651.0L588.0 652.8L588.6 654.7L587.8 656.8L588.7 658.6M588.7 658.6L587.1 659.8L586.7 661.8L585.8 663.5L584.3 664.7L583.4 666.4M579.5 665.4L582.1 666.8M582.1 666.8L583.4 666.4M604.1 671.9L602.5 670.3L600.2 669.9L598.3 668.9L596.6 667.4M604.1 671.9L606.5 671.3L606.6 668.4L608.6 667.4M608.6 667.4L607.7 665.5L607.7 663.2L605.9 661.8L604.9 660.0M604.9 660.0L602.5 659.5L600.1 659.4M596.6 667.4L597.2 665.3L596.1 663.2L596.3 661.1M596.3 661.1L598.1 660.1L600.1 659.4M603.4 674.8L604.1 671.9M596.8 678.2L594.7 678.6L593.1 677.7L591.7 676.3M590.7 672.3L590.5 674.5L591.7 676.3M590.7 672.3L591.5 670.3L593.7 669.9L595.4 668.9L596.6 667.4M612.1 667.7L608.6 667.4M610.1 652.5L609.5 654.3L608.2 655.7L606.7 656.9L606.0 658.6L604.9 660.0M615.3 657.7L614.0 655.7L612.1 654.2L610.8 652.2M598.6 650.7L599.0 652.8L600.4 654.9L599.2 657.3L600.1 659.4M590.7 672.3L589.8 670.4L588.1 669.5L586.4 668.7L584.8 667.7L583.4 666.4M588.7 658.6L590.7 658.9L592.3 660.5L594.4 660.6L596.3 661.1M587.7 649.6L587.0 651.0M587.6 646.2L586.9 645.1M601.7 636.8L601.4 636.3M596.2 633.1L594.5 634.1L592.4 632.3L591.0 634.9L589.1 634.9L587.2 634.7M586.9 645.1L586.1 643.0L586.9 640.9L586.9 638.9L586.3 636.8L587.2 634.7M571.0 651.6L570.6 651.3M571.0 651.6L573.3 652.7L575.9 652.9M570.6 651.3L571.0 649.2L570.5 646.9L571.8 645.1L572.9 643.3L573.0 641.1L574.1 639.2M586.9 645.1L585.2 644.0L583.2 643.6L581.1 643.3L579.5 642.0L578.0 640.4L576.0 639.8L574.1 639.2M624.5 649.7L623.4 647.5L621.4 646.0M624.5 649.7L626.1 650.7L627.9 651.1L629.7 651.4M629.7 651.4L631.8 651.1L633.9 650.7L635.9 650.4M621.4 646.0L621.3 643.7L621.8 642.8M635.9 650.4L635.4 648.2L635.5 648.1M621.7 657.6L622.6 655.7L622.2 653.3L624.0 651.7L624.5 649.7M613.4 648.6L615.3 647.7L617.4 647.3L619.5 646.8L621.4 646.0M628.9 667.6L628.4 665.5L629.1 663.5L629.1 661.5L628.8 659.5L629.2 657.5L628.7 655.4L629.8 653.5L629.7 651.4M636.1 650.6L637.0 652.5L637.8 654.4L636.9 657.0L639.5 658.1L639.6 658.4M636.1 650.6L635.9 650.4M613.7 633.4L611.7 632.9M613.7 633.4L614.7 635.3L616.4 636.4L617.9 637.8L618.9 639.5L619.1 639.6M611.7 632.9L610.7 634.7L609.0 635.4L606.8 635.2L605.6 636.7M618.0 630.8L617.1 631.2L615.5 632.5L613.7 633.4M513.9 602.5L515.8 603.8L515.7 604.4M513.9 602.5L512.3 603.6L512.1 603.8M510.3 592.7L509.5 594.4L509.4 596.1M510.8 592.7L511.8 594.6L513.9 595.7L513.9 598.1L515.0 599.9M515.0 599.9L514.9 600.2M514.1 602.1L513.9 602.5M515.0 599.9L516.8 599.2L518.8 599.7L520.4 598.2L522.2 597.7L524.2 597.8M522.5 592.0L522.9 592.6L524.6 593.2L526.5 593.5M526.5 593.5L525.3 595.6L524.2 597.8M523.2 609.8L524.3 609.1M524.3 609.1L525.4 607.7M524.2 597.8L524.6 599.7L525.4 601.7L524.3 603.8L525.0 605.7L525.4 607.7M563.7 560.5L562.2 559.4L562.0 559.2M549.3 558.8L552.1 559.7M552.1 559.7L553.6 558.5M635.3 555.6L633.6 556.8L633.2 559.0L632.0 560.5L629.4 560.9L628.5 562.7L628.0 564.8L626.5 566.1M635.3 555.6L633.3 554.8L631.4 554.8L629.4 556.2L627.5 555.5M626.5 566.1L625.8 564.2L624.2 563.0M627.5 555.5L627.2 557.6L626.1 559.4L624.3 560.8L624.2 563.0M524.0 651.3L524.3 651.2M574.1 639.2L573.9 638.6M585.5 633.0L587.2 634.7M585.5 633.0L584.0 634.3L581.7 633.6L580.2 635.2L578.5 635.9L576.7 636.5L574.7 636.7M574.7 636.7L573.9 638.6M643.5 573.9L645.7 573.9L647.4 572.6M643.5 573.9L641.8 575.6M648.2 573.0L647.4 572.6M650.0 578.9L648.7 579.9M648.7 579.9L647.1 578.6L645.6 577.1L643.1 577.3L641.8 575.6M600.9 611.0L601.5 613.0L601.5 615.1L602.1 617.1M600.9 611.0L599.1 610.0L597.7 608.6L596.3 607.1M596.3 607.1L595.3 608.9L594.0 610.4L592.8 612.0M592.8 612.0L594.0 613.6L595.3 615.2L597.0 616.5L597.3 618.7L598.2 620.6M602.1 617.1L600.1 618.9L598.2 620.6M609.8 606.5L607.7 605.6L607.4 604.8M603.2 602.7L602.8 602.9L601.4 603.1M598.1 603.3L596.3 605.8M610.4 608.1L609.9 609.5M609.9 609.5L608.0 608.9L606.3 610.3L604.6 610.7L602.6 609.9L600.9 611.0M596.3 605.8L596.3 607.1M592.9 624.2L591.1 624.1L589.3 623.5M585.5 633.0L585.2 630.6L585.0 628.2M585.0 628.2L586.5 626.7L587.4 624.6L589.3 623.5M608.6 623.6L609.9 625.1L611.4 626.2M608.6 623.6L609.0 621.5L608.2 619.6L607.8 617.6M611.4 626.2L613.4 625.5L615.2 624.5L616.2 622.5L618.5 622.2L619.9 620.7L621.1 618.9M607.8 617.6L609.4 616.2L610.7 614.5M610.7 614.5L612.6 614.9L614.0 616.2L616.1 616.0L617.8 616.8L619.2 618.4L621.1 618.8M621.1 618.9L621.1 618.8M611.7 632.9L611.8 630.7L612.2 628.4L611.4 626.2M602.4 625.1L604.3 624.1L606.3 623.2L608.6 623.6M598.1 620.9L598.2 620.6M602.1 617.1L603.9 618.2L605.8 618.4L607.8 617.6M623.6 620.5L623.3 619.9L621.1 618.9M609.9 609.5L610.5 612.0L610.7 614.5M621.8 616.3L621.1 618.8M664.6 609.9L666.1 610.2L667.8 611.0L668.2 610.9M659.1 614.0L657.7 616.2L656.4 618.3M659.1 614.0L659.2 614.0M656.4 618.5L656.4 618.3M636.8 613.6L636.4 613.5L635.3 611.8L634.6 609.9L633.2 608.4M633.2 608.4L632.6 610.7L630.3 611.4M630.3 611.4L632.0 612.7L631.6 615.3L631.7 615.3M628.5 611.2L630.3 611.4M527.3 653.8L527.5 654.2M529.7 669.6L530.8 670.5M527.2 682.4L528.0 682.9L528.3 682.9M589.3 698.1L587.9 698.2M585.0 698.3L583.6 699.0L581.8 698.2L580.7 698.3M573.7 695.5L573.1 694.1L572.2 693.7M588.4 679.6L586.3 679.7L584.3 679.9L582.2 679.5M588.4 679.6L589.4 681.5L588.2 683.6L588.0 685.5L589.2 687.4M589.2 687.4L587.0 687.1L585.1 688.5L583.1 689.2L580.9 689.4M582.2 679.5L580.8 681.8L578.6 683.0M580.9 689.4L580.1 687.3M591.7 676.3L590.0 677.9L588.4 679.6M580.3 670.9L580.3 673.2L580.8 675.3L583.1 677.0L582.2 679.5M580.3 670.9L581.3 668.9L582.1 666.8M591.8 689.1L589.2 687.4M578.3 697.4L579.2 696.0M580.8 689.5L580.9 689.4M577.6 682.9L578.1 683.0M577.6 682.9L576.6 682.2M575.5 681.1L575.2 680.5M573.4 675.0L574.0 674.6L575.6 673.7L576.9 672.3L579.1 672.4L580.3 670.9M577.0 683.2L577.6 682.9M539.0 671.0L536.7 670.9L536.1 670.8M539.0 671.0L540.0 669.1L541.8 667.6L542.6 665.6L542.7 663.3M538.7 658.4L541.7 659.7M538.7 658.4L537.0 659.1L535.0 658.6L534.1 659.5M542.7 663.3L543.5 661.1L541.7 659.7M535.8 647.1L537.1 647.7M538.7 658.4L538.8 656.3L538.5 654.3L538.1 652.3L538.7 650.2L537.5 648.2M537.1 647.7L537.5 648.2M541.7 659.7L543.1 658.2L545.4 658.2L547.1 657.2L548.5 655.8L550.2 654.8M550.2 654.8L549.8 652.2L549.9 649.5M537.5 648.2L539.7 647.7L541.8 647.5L543.7 648.7L545.8 648.7L547.9 649.0L549.9 649.5M565.6 651.4L563.8 650.3L562.9 648.3L561.0 647.4L559.8 645.8L558.7 644.0M565.6 651.4L564.3 653.0L562.9 654.5L561.6 656.2M561.6 656.2L559.6 655.8L557.6 655.9L555.7 655.2L553.6 656.3L551.7 655.9M558.7 644.0L556.6 644.1L554.5 644.9L552.2 644.6M551.7 655.9L550.2 654.8M552.2 644.6L551.7 646.4L550.9 648.0L549.9 649.5M569.4 677.8L570.2 676.2L571.8 675.5M563.8 675.5L564.3 673.8L564.5 671.7M571.9 675.2L571.6 673.5L569.4 672.9L568.8 671.1M564.5 671.7L566.7 671.9L568.8 671.1M579.5 665.4L577.5 664.7L575.3 665.4L573.3 664.0L571.1 664.9M568.8 671.1L569.9 669.1L571.0 667.2L571.1 664.9M571.0 651.6L571.0 653.4L571.0 655.2L571.5 657.1L571.5 658.9L571.5 660.7L570.9 662.6L570.8 664.4M571.1 664.9L570.8 664.4M530.5 574.7L530.9 574.3L531.3 573.7M552.1 559.7L552.1 559.8M562.1 568.4L560.2 569.0L559.3 570.0M526.5 593.5L527.1 593.1M528.0 591.0L527.1 593.1M595.6 558.6L593.6 559.8L591.4 559.3L589.3 559.8L588.1 560.3M595.6 558.6L596.1 559.7M598.4 564.7L597.4 566.3M597.4 566.3L595.5 566.5L593.5 566.3L592.8 566.3M595.4 553.3L595.3 553.3M595.4 553.3L595.3 556.0L595.6 558.6M595.4 553.3L595.9 552.9M606.3 563.3L604.3 563.0L604.0 563.2M606.3 563.3L606.9 561.0L608.6 559.4L609.6 557.4M595.9 552.9L597.9 553.2L599.8 552.9L601.7 552.6L603.7 552.9L605.6 553.0L607.5 552.6M607.5 552.6L608.3 553.2M609.6 557.4L609.3 555.2L608.3 553.2M574.9 566.5L577.1 567.0L578.2 567.6M577.1 576.3L575.1 575.3L573.1 574.2M578.3 559.2L578.4 559.6L580.6 559.6L582.1 559.6M636.1 650.6L637.2 649.5M635.3 555.6L635.3 555.6M628.7 568.2L630.5 567.7L632.3 567.3L633.6 565.6L635.5 565.3M628.7 568.2L627.3 568.1M635.3 555.6L636.9 557.5L637.1 560.0L638.0 562.3M626.5 566.1L627.3 568.1M635.5 565.3L636.2 563.3L638.0 562.3M609.0 542.8L609.2 543.1L611.4 544.0L611.7 546.4L613.4 547.6M614.3 538.2L614.7 538.9L616.8 539.0M613.4 547.6L615.0 547.6M615.0 547.6L616.4 545.9L618.3 544.8M618.3 544.8L617.8 542.9L617.1 541.0L616.8 539.0M597.4 598.7L596.1 597.2L596.9 595.0M596.9 595.0L597.7 593.2M597.7 593.2L600.1 593.1L602.5 593.1L604.8 592.2M604.8 592.2L606.5 593.4L607.3 594.0M613.8 599.9L614.4 597.7L612.5 596.3L612.2 594.4M609.8 593.7L610.1 593.5L612.2 594.4M619.8 602.6L620.4 600.8L618.9 598.8L620.2 597.2L620.8 595.4M618.5 593.9L616.0 593.5L613.5 593.3M612.2 594.4L613.5 593.3M607.5 552.6L607.1 550.6L606.8 548.6L605.1 547.1L604.8 546.2M608.3 553.2L609.6 551.8L611.1 550.6L611.9 548.8L613.4 547.6M595.9 552.9L596.0 552.8M647.2 561.0L646.0 560.6M646.0 560.6L644.0 561.4L642.7 563.2M646.6 568.8L646.2 568.8L643.9 567.4M642.7 563.2L643.0 566.3M643.9 567.4L643.0 566.3M647.4 572.6L647.9 572.1M643.5 573.9L644.4 571.8L644.0 569.6L643.9 567.4M635.5 565.3L636.9 566.5L637.5 568.5L639.2 569.6M638.0 562.3L640.2 563.5L642.7 563.2M639.2 569.6L640.7 567.5L643.0 566.3M618.3 553.8L616.1 553.6L614.8 555.2L613.7 557.0L611.7 557.3M618.3 553.8L619.6 554.0M619.6 554.0L620.0 556.1L621.1 558.0L621.1 560.3L622.2 562.2M611.7 557.3L613.3 558.2L614.3 560.1L616.3 560.4L618.1 561.1L619.4 562.5M619.4 562.5L622.2 562.2M609.6 557.4L611.7 557.3M615.0 547.6L616.1 549.6L616.9 551.9L618.3 553.8M532.8 642.4L532.5 639.1M532.0 639.2L532.5 639.1M565.6 651.4L568.1 650.5L570.6 651.3M558.7 644.0L560.2 641.5M573.9 638.6L571.6 638.3L569.5 637.7M560.2 641.5L562.0 640.5L564.0 640.1L565.9 639.5L567.8 638.7L569.5 637.7M630.7 569.7L632.7 570.6L635.2 569.4L637.1 570.6L639.0 572.0M630.7 569.7L632.3 571.2L632.6 573.6L634.8 574.7L635.5 576.8M635.5 576.8L639.0 576.8M639.0 572.0L640.0 573.8L640.9 575.8M639.0 576.8L640.5 576.2M640.9 575.8L640.5 576.2M628.7 568.2L630.7 569.7M639.2 569.6L639.0 572.0M641.8 575.6L640.9 575.8M642.0 582.4L639.5 584.4M642.0 582.4L641.8 580.3L641.5 578.1L640.5 576.2M639.0 576.8L637.8 579.2L637.2 581.8M637.2 581.8L639.5 584.4M630.1 582.5L628.0 580.5M630.1 582.5L632.6 582.6M632.6 582.6L632.4 580.5L633.3 578.8L634.8 577.3M634.8 577.3L632.9 577.9L631.0 578.6L629.2 577.2M629.2 577.2L628.0 580.5M624.4 580.8L622.2 582.8M624.4 580.8L628.0 580.5M622.2 582.8L622.3 584.6L622.5 586.4M628.2 588.0L624.9 588.1M628.2 588.0L629.0 586.3L629.3 584.3L630.1 582.5M635.5 576.8L634.8 577.3M633.8 583.5L635.5 582.6L637.2 581.8M633.8 583.5L632.6 582.6M627.0 568.5L627.3 568.1M627.0 568.5L628.4 570.5L627.7 573.0L628.6 575.0L629.2 577.2M624.4 580.8L622.8 579.0L623.8 576.4L622.4 574.5L622.0 572.2M622.0 572.2L624.3 571.8L625.8 570.3L627.0 568.5M596.9 595.0L594.9 595.3L593.1 596.6L591.0 596.8L588.9 596.1L588.2 596.4M583.1 596.9L582.9 596.9M596.3 605.8L594.2 605.5L592.5 604.2L590.7 603.4L588.3 603.8L586.8 602.8M586.1 602.2L584.9 601.2M584.9 601.2L584.8 600.9M583.6 598.2L582.9 596.9M589.7 613.3L588.0 612.6L586.3 611.6L585.0 610.0L582.9 610.0M589.7 613.3L588.1 614.8L588.9 617.0L588.9 618.9L587.9 620.6M587.9 620.6L586.2 619.6L584.7 618.3L582.3 620.0L581.0 617.7L579.0 618.0M579.0 618.0L578.4 615.7L578.8 613.5L580.3 611.6M580.3 611.6L582.9 610.0M592.8 612.0L589.7 613.3M584.9 601.2L584.9 603.1L583.8 604.7L583.6 606.5L584.3 608.5L582.9 610.0M589.3 623.5L587.9 620.6M629.5 594.7L631.1 596.8L633.0 598.5M629.5 594.7L631.6 591.9M631.6 591.9L632.8 593.5L634.9 594.1L636.2 595.5M633.0 598.5L634.2 596.8L636.2 596.9M636.2 595.5L636.2 596.9M666.1 603.8L665.2 604.1M659.1 614.0L656.8 611.7M656.8 611.7L656.2 609.7L657.0 607.8M657.4 607.7L657.0 607.8M656.8 611.7L653.3 611.4M653.3 611.4L652.7 607.9M652.7 607.9L652.9 607.6M657.0 607.8L655.8 606.7M655.8 606.7L653.6 606.9M652.9 607.6L653.6 606.9M656.4 618.3L654.4 617.5L653.3 615.4L651.4 614.4M649.0 617.9L649.2 617.5L651.0 616.4L651.4 614.4M653.3 611.4L651.3 614.1M651.4 614.4L651.3 614.1M539.0 671.0L540.4 672.9L542.6 673.8M542.6 673.8L542.3 674.8M553.6 665.0L552.5 666.9L551.8 669.0M553.6 665.0L555.7 664.1L557.9 663.8L559.9 662.9L562.1 662.4M562.0 669.5L562.4 667.2L562.6 664.9L562.2 662.5M562.0 669.5L560.0 669.6L558.1 670.0L556.3 670.9L554.2 670.5L552.4 671.2M551.8 669.0L552.1 670.9M562.1 662.4L562.2 662.5M552.1 670.9L552.4 671.2M542.7 663.3L544.9 663.9L546.8 665.0L548.6 666.1L549.8 668.2L551.8 669.0M551.7 655.9L551.8 657.8L551.1 659.8L552.7 661.4L554.0 663.0L553.6 665.0M561.6 656.2L562.3 658.2L562.9 660.3L562.1 662.4M564.5 671.7L562.0 669.5M570.8 664.4L568.5 664.4L566.6 663.1L564.3 663.4L562.2 662.5M553.0 675.2L552.9 675.1L552.6 673.2L552.4 671.2M542.6 673.8L544.3 672.7L546.6 673.3L548.5 672.9L550.1 671.2L552.1 670.9M537.1 647.7L538.0 645.7L540.1 644.8L541.7 643.5L542.9 641.7L544.4 640.2M552.2 644.6L551.5 643.6M544.4 640.2L545.7 642.1L548.1 641.7L549.7 642.8L551.5 643.6M538.9 627.0L540.5 625.6L542.0 624.2M538.9 627.0L538.6 629.1L539.7 631.0L541.1 632.8L540.7 635.0M548.6 630.5L546.7 631.5L545.3 633.2L543.8 634.6L541.7 635.3M548.6 630.5L548.1 628.2L547.1 626.2L545.7 624.4M545.7 624.4L543.9 624.0L542.0 624.2M540.7 635.0L541.7 635.3M532.5 626.3L534.6 626.4L536.8 626.5L538.9 627.0M532.5 626.3L531.1 628.1L529.7 629.8M529.7 629.8L529.8 630.5M530.4 632.0L532.8 632.9L532.0 635.5L533.2 637.2M533.2 637.2L535.4 637.6L536.9 635.9L538.7 635.0L540.7 635.0M544.4 640.2L544.0 638.3L542.8 636.8L541.7 635.3M551.5 643.6L551.5 641.6L550.2 639.5L550.6 637.5L552.0 635.6L551.2 633.5L552.0 631.5M552.0 631.5L548.6 630.5M532.5 639.1L533.2 637.2M532.3 621.3L534.4 620.1L537.1 620.8L539.1 619.2M532.3 621.3L530.1 618.6M530.1 618.6L530.1 617.9M530.1 617.9L532.2 616.9L533.6 615.2L534.7 613.2L536.5 611.8M536.5 611.8L536.7 614.1L539.6 614.7L539.6 617.1M539.1 619.2L539.6 617.1M532.5 626.3L532.7 623.8L532.3 621.3M542.0 624.2L540.3 622.9L539.5 621.2L539.1 619.2M527.7 619.6L528.3 619.3L530.1 618.6M524.3 609.1L526.1 610.4L526.3 612.9L527.5 614.6L529.6 615.7L530.1 617.9M525.4 607.7L527.3 607.9L529.2 607.9L531.2 608.0L533.0 607.4L534.9 607.1L536.8 606.9M536.8 606.9L537.2 609.4L536.5 611.8M547.6 621.7L547.9 619.5L546.8 617.4L547.2 615.2M547.6 621.7L545.7 624.4M547.2 615.2L545.4 615.8L543.2 615.3L541.5 616.5L539.6 617.1M597.3 575.0L598.1 576.7L599.6 578.0M597.3 575.0L596.0 575.2M595.0 587.0L592.6 586.8L590.3 586.7M595.0 587.0L596.1 585.2L598.0 583.9L598.6 581.7L599.8 580.1M590.3 586.7L589.8 585.5M599.8 580.1L599.6 578.0M597.4 566.3L597.6 568.5L597.2 570.7L596.9 572.8L597.3 575.0M597.7 593.2L596.7 591.2L595.6 589.2L595.0 587.0M589.3 587.6L590.3 586.7M582.9 596.3L582.7 596.7M582.9 596.9L582.7 596.7M604.8 592.2L604.5 590.1L604.8 588.2L605.9 586.4M604.9 582.4L603.0 581.9L601.1 581.4L599.8 580.1M577.3 581.2L577.3 580.7L575.9 578.6L577.1 576.4M650.1 555.0L648.1 554.3M646.0 560.6L645.7 558.5M648.1 554.3L646.8 556.4L645.7 558.5M653.1 546.6L652.4 546.8L650.4 546.0L648.7 546.6L647.0 547.5M644.9 540.5L645.5 541.6L647.3 543.3L646.3 545.6L647.0 547.5M648.1 554.3L646.9 552.5L647.3 550.1L646.0 548.4M647.0 547.5L646.0 548.4M628.4 544.4L629.3 547.5M628.4 544.4L626.6 543.2M626.6 543.2L624.8 544.1L622.6 544.0L621.1 545.7M629.3 547.5L628.3 549.3L626.9 550.8L625.6 552.4M621.1 545.7L622.1 547.7L622.2 549.8L622.5 552.0M625.6 552.4L622.5 552.0M625.0 536.4L622.5 535.8L620.7 536.9L619.0 538.8L616.8 539.0M625.0 536.4L625.4 538.7L626.3 540.8L626.6 543.2M618.3 544.8L621.1 545.7M619.6 554.0L622.5 552.0M627.5 555.5L626.2 554.2L625.6 552.4M624.2 563.0L622.2 562.2M613.5 593.3L613.6 590.6M607.7 584.1L608.9 583.9M608.9 583.9L609.3 586.1L611.2 587.3L612.7 588.7L613.6 590.6M621.8 586.9L619.8 586.9L617.9 587.2L616.0 587.3M616.0 587.3L614.1 588.4L613.6 590.6M606.3 563.3L608.1 565.3M599.6 578.0L601.2 577.1L602.9 576.3L603.5 576.4M606.1 575.5L606.5 575.1L608.3 574.5M608.3 574.5L608.3 572.7L606.7 570.8L607.4 569.0L609.1 567.1L608.1 565.3M619.4 562.5L617.0 563.4L615.5 565.3L613.9 567.1M608.1 565.3L609.9 566.2L612.0 566.5L613.9 567.1M622.0 572.2L619.8 572.7L617.6 573.3M613.9 567.1L616.5 568.4L616.0 571.4L617.6 573.3M529.7 629.8L529.5 629.9M585.0 628.2L583.3 627.3L581.3 627.5L579.6 626.4L578.0 625.1L576.0 625.3M579.0 618.0L576.8 618.3L576.3 620.4M576.3 620.4L577.1 622.9L576.0 625.3M574.7 636.7L574.8 634.8L576.1 632.9L574.4 631.0L574.1 629.1L574.4 627.2M574.4 627.2L576.0 625.3M560.2 641.5L559.5 639.4L561.3 637.0L559.8 635.0L559.3 632.9M569.5 637.7L567.8 636.5L566.8 634.7L566.4 632.5L564.5 631.5M564.5 631.5L562.1 633.2L559.3 632.9M574.4 627.2L572.5 627.2L570.6 626.7L568.6 626.8L566.7 626.7M564.5 631.5L564.0 628.4L566.7 626.7M547.6 621.7L549.6 622.1L551.7 620.5L553.7 621.5L555.6 622.7L557.7 622.3M552.0 631.5L555.4 630.3M555.4 630.3L556.1 628.3L556.5 626.3L557.5 624.4L557.7 622.3M555.4 630.3L556.9 632.1L559.3 632.9M648.7 579.9L648.6 580.7M644.0 583.5L642.0 582.4M644.0 583.5L646.4 583.0M646.4 583.0L648.6 580.7M634.8 603.7L632.8 602.5L632.5 600.1M634.8 603.7L635.0 605.1M634.2 605.7L635.0 605.1M634.2 605.7L632.4 604.6L629.9 605.7L628.2 604.4L626.3 603.5M632.5 600.1L629.9 600.3L627.4 600.3M626.3 603.5L627.4 600.3M637.2 598.2L636.9 600.3L636.1 602.1L634.8 603.7M637.2 598.2L636.2 596.9M633.0 598.5L632.5 600.1M625.4 604.2L626.3 603.5M633.2 608.4L634.2 605.7M626.9 596.3L629.5 594.7M626.9 596.3L628.2 598.2L627.4 600.3M623.8 595.0L626.9 596.3M639.9 601.4L643.2 602.4M639.9 601.4L638.9 603.6L637.4 605.4M637.4 605.4L639.0 606.5M639.0 606.5L641.1 605.9L642.9 604.5M642.9 604.5L643.2 602.4M637.2 598.2L639.7 599.0M639.7 599.0L639.9 601.4M635.0 605.1L637.4 605.4M639.5 613.0L639.7 611.7L640.5 609.5M640.5 609.5L639.0 606.5M644.5 609.0L642.5 609.1L640.5 609.5M644.5 609.0L644.3 605.5M644.3 605.5L642.9 604.5M647.0 612.7L648.9 612.9M647.0 612.6L645.8 609.5M648.9 612.9L650.4 611.1L650.4 608.7M645.8 609.5L647.6 607.8M647.6 607.8L650.4 608.7M651.3 614.1L648.9 612.9M644.5 609.0L645.8 609.5M652.7 607.9L650.4 608.7M652.9 607.6L652.0 605.4L649.3 606.6L648.1 605.1M648.1 605.1L647.6 607.8M551.1 578.2L550.6 578.6L550.2 580.5L550.0 582.6L548.8 584.1M548.8 584.1L547.2 584.0M539.4 587.5L540.0 587.3M640.0 553.6L641.7 552.3L642.9 550.6L644.0 548.7M640.0 553.6L637.6 553.0L635.8 554.6M635.8 554.6L634.7 552.7L634.2 550.5M634.2 550.5L635.8 549.2L636.2 547.2L637.3 545.7L638.3 544.1M638.3 544.1L640.0 544.8L641.0 546.6L642.7 547.4L644.0 548.7M645.7 558.5L644.0 557.6L643.1 555.8L641.6 554.7L640.0 553.6M646.0 548.4L644.0 548.7M635.3 555.6L635.8 554.6M629.3 547.5L630.7 549.0L632.7 549.2L634.2 550.5M637.3 539.8L637.9 541.9L638.3 544.1M637.3 539.8L635.7 541.1L633.5 541.1L631.2 541.1L630.0 543.1L628.4 544.4M637.3 539.8L637.4 539.5M624.2 533.8L625.3 535.6M625.3 535.6L627.2 535.6L629.0 535.0L629.5 534.5M625.3 535.6L625.0 536.4M617.2 573.8L615.0 573.2L613.1 574.9L610.9 574.5L608.9 574.8M617.2 573.8L616.4 575.9L617.0 578.1L616.6 580.3M608.9 574.8L610.3 576.2L609.6 578.4L610.1 580.2L611.4 581.7M611.4 581.7L613.2 581.0L615.2 581.3M616.6 580.3L615.2 581.3M608.3 574.5L608.9 574.8M617.6 573.3L617.2 573.8M622.2 582.8L620.3 582.0L618.6 580.9L616.6 580.3M608.9 583.9L611.4 581.7M616.0 587.3L615.4 585.4L615.8 583.3L615.2 581.3M556.0 612.0L555.7 613.1M556.0 612.0L557.7 611.2L559.4 610.7L560.8 609.3L562.2 608.1L564.1 607.8L565.6 606.7L567.5 606.3L569.0 605.4M555.7 613.1L557.0 614.6L557.0 617.0L558.7 618.3L559.9 620.0M568.2 615.8L566.7 616.9L565.0 617.9L563.3 618.7L561.9 620.1M568.2 615.8L567.4 613.7L569.0 611.9L569.6 610.0L568.6 607.8L569.5 605.9M559.9 620.0L561.9 620.1M569.5 605.9L569.3 605.4M569.0 605.4L569.3 605.4M547.2 615.2L547.8 614.2M547.8 614.2L549.8 614.4L551.7 613.4L553.8 613.6L555.7 613.1M557.7 622.3L559.9 620.0M576.3 620.4L574.8 619.3L573.7 617.5L571.4 617.8L569.6 617.1L568.2 615.8M566.7 626.7L565.3 625.2L565.3 622.7L563.3 621.5L561.9 620.1M580.3 611.6L578.2 611.3L576.6 609.9L575.4 607.8L572.8 608.4L571.2 607.1L569.5 605.9M582.7 596.7L580.5 596.4L578.5 597.0L576.3 596.6L574.2 597.0M574.2 597.0L572.7 598.3L571.1 599.7L571.6 602.2L569.7 603.4L569.3 605.4M634.2 584.6L637.2 586.5M634.2 584.6L633.1 586.6L632.1 588.6L631.3 590.8M637.2 586.5L636.4 589.6M636.4 589.6L634.1 590.7L631.6 591.3M631.3 590.8L631.6 591.3M633.8 583.5L634.2 584.6M639.5 584.4L639.1 585.8M639.1 585.8L637.2 586.5M628.2 588.0L629.2 590.1L631.3 590.8M639.1 585.8L640.4 587.0M640.4 587.0L639.2 589.1L639.5 591.5M639.5 591.5L637.8 590.7L636.4 589.6M631.6 591.9L631.6 591.3M648.6 580.7L650.4 581.6L650.6 582.1M655.8 606.7L656.0 606.1M656.0 606.1L656.9 605.9M648.1 605.1L647.9 604.6M644.3 605.5L647.5 604.4M647.9 604.6L647.5 604.4M653.6 602.1L653.5 600.6M653.6 602.1L655.6 602.6M653.5 600.6L654.7 600.5M656.0 606.1L656.0 603.6M643.2 602.4L643.8 601.8M647.5 604.4L646.2 601.9M643.8 601.8L646.2 601.9M527.1 593.1L528.4 594.4L530.5 594.6L531.9 595.8L533.0 597.5L534.6 598.5L536.4 599.1L537.7 600.4M542.7 591.6L542.6 593.0L542.7 594.9M542.7 594.9L541.0 595.9L540.4 597.9L539.1 599.1L537.7 600.4M536.8 606.9L538.1 605.7M547.8 614.2L546.1 612.8L544.4 611.5L544.3 609.3L543.9 607.3M543.9 607.3L541.9 607.1L540.0 606.4L538.1 605.7M537.7 600.4L537.8 603.0L538.1 605.7M559.2 571.3L559.7 573.2M548.8 584.1L551.7 585.5M559.7 573.2L558.8 574.9L557.7 576.6L557.4 578.4L558.3 580.5L557.6 582.2M557.6 582.2L555.6 583.3L553.3 583.8L551.7 585.5M571.1 583.8L570.7 582.6L569.6 581.2L568.2 579.9M572.0 586.9L571.5 587.6L571.4 590.1M571.4 590.1L569.2 589.7L567.3 588.5L565.9 586.3L563.5 586.3M568.2 579.9L565.8 580.2M565.8 580.2L563.9 581.7L563.0 583.9M563.5 586.3L563.0 583.9M571.6 574.6L570.7 576.5L569.8 578.4L568.2 579.9M574.2 597.0L574.0 596.7M572.1 593.7L572.0 593.7M572.0 593.7L571.6 591.9L571.4 590.1M559.7 573.2L560.2 575.2L562.6 575.6L563.5 577.3L564.0 579.3L565.8 580.2M557.6 582.2L559.4 582.6L561.1 583.5L563.0 583.9M648.8 604.1L650.2 602.2M648.8 604.1L650.9 604.3L652.8 605.1M650.2 602.2L652.8 603.0M652.8 605.1L652.8 603.0M653.6 606.9L652.8 605.1M647.9 604.6L648.8 604.1M653.6 602.1L652.8 603.0M653.5 600.6L652.9 599.5M652.9 599.5L650.1 601.4M650.1 601.4L650.2 602.2M646.2 601.9L646.4 601.5M649.8 600.9L650.1 601.4M649.8 600.9L649.0 600.6M649.0 600.6L646.4 601.5M639.7 599.0L642.4 597.4M643.8 601.8L644.0 599.4L642.8 597.4M642.4 597.4L642.8 597.4M636.2 595.5L638.8 593.7M642.4 597.4L639.8 596.3L638.8 593.7M639.5 591.5L639.6 591.7M638.8 593.7L639.6 591.7M643.7 594.4L644.2 596.5M643.7 594.4L643.3 592.0L640.9 591.7M642.8 597.4L644.1 596.6M639.6 591.7L640.9 591.7M644.2 596.5L644.1 596.6M646.4 601.5L646.4 600.3M644.1 596.6L644.3 599.0L646.4 600.3M653.7 598.6L653.1 598.9M652.0 595.2L652.5 595.3M652.0 595.2L651.8 596.1M651.8 596.1L653.1 598.9M652.9 599.5L652.9 599.2M653.1 598.9L652.9 599.2M649.8 600.9L650.3 598.7M652.9 599.2L650.3 598.7M555.2 591.1L558.4 592.4M555.2 591.1L554.5 593.4L552.5 594.7L550.3 595.7L549.5 597.8M559.8 600.7L558.9 598.4L560.5 596.1L559.5 593.8M559.8 600.7L557.2 600.4L556.6 603.6L554.2 603.9M559.5 593.8L558.4 592.4M549.5 597.8L550.3 600.2L551.1 602.5M554.2 603.9L551.1 602.5M551.7 585.5L553.5 587.0L554.0 589.3L555.2 591.1M563.5 586.3L561.9 587.6L560.5 589.0L559.5 590.7L558.4 592.4M542.7 594.9L544.2 596.1L545.7 597.2L547.8 597.2L549.5 597.8M572.0 593.7L569.9 593.2L567.8 592.7L565.8 594.2L563.7 594.4L561.6 593.1L559.5 593.8M569.0 605.4L567.1 604.7L565.6 602.9L563.3 602.9L561.3 602.2L559.8 600.7M556.0 612.0L556.0 609.9L556.2 607.7L554.5 605.9L554.2 603.9M543.9 607.3L545.4 605.6L548.1 605.8L549.8 604.4L551.1 602.5M644.0 583.5L643.4 587.1M646.4 583.0L645.8 585.6L647.8 587.5M647.8 587.5L645.7 586.8L643.4 587.1M640.4 587.0L643.1 587.4M643.4 587.1L643.1 587.4M640.9 591.7L643.3 589.8M643.1 587.4L643.3 589.8M645.2 591.6L644.5 590.5M645.2 591.6L643.7 594.4M643.3 589.8L644.5 590.5M648.3 599.0L647.9 598.8M648.3 599.0L649.9 598.3M647.9 598.8L646.6 596.0M649.9 598.3L649.9 597.3M649.9 597.3L647.1 595.6M647.1 595.6L646.6 596.0M649.0 600.6L648.3 599.0M646.4 600.3L647.9 598.8M650.3 598.7L649.9 598.3M644.2 596.5L646.6 596.0M651.8 596.1L649.9 597.3M651.7 594.3L652.1 593.3M651.7 594.3L649.7 594.6L647.7 594.8M652.1 593.3L650.6 591.8L649.1 590.5M647.7 594.8L647.5 592.3M647.5 592.3L649.1 590.5M652.0 595.2L651.7 594.3M652.3 593.2L652.1 593.3M647.1 595.6L647.7 594.8M645.2 591.6L647.5 592.3M649.1 590.2L651.7 590.3L652.0 590.1M649.1 590.2L648.1 588.2M648.0 587.8L648.1 588.2M648.0 587.8L650.2 586.4M650.2 586.4L651.5 586.5M649.1 590.5L649.1 590.2M644.5 590.5L646.2 589.2L648.1 588.2M647.8 587.5L648.0 587.8M650.9 584.2L650.2 586.4" fill="none" stroke="rgba(100,100,100,0.66)" stroke-width="0.9" stroke-linejoin="round"/>
<path d="M532.0 575.8L533.4 575.0L528.7 571.4L523.3 566.7L521.1 566.0L522.0 568.7L526.7 572.7ZM587.1 587.8L586.9 584.8L584.4 583.7L582.0 586.8L582.9 590.2L585.4 590.9ZM539.8 585.4L538.7 585.0L539.6 589.7L540.7 589.7ZM668.8 613.7L667.8 607.3L666.1 603.3L663.8 604.7L664.4 610.0L666.1 612.9ZM588.8 561.8L592.7 562.3L596.2 559.9L597.1 558.9L601.1 558.6L603.5 559.4L604.0 562.3L603.3 565.3L604.0 569.2L605.3 573.1L606.2 577.0L606.9 580.9L607.6 584.8L608.6 588.8L609.4 592.7L609.9 595.1L610.4 598.6L609.4 601.5L607.4 604.4L606.0 606.4L604.5 604.4L603.0 602.0L601.1 603.0L598.6 603.5L597.1 602.0L597.6 598.6L599.6 596.6L603.5 595.6L607.4 595.1L607.7 592.7L606.6 588.8L605.7 584.8L604.7 580.9L604.0 577.0L602.7 573.6L601.4 571.1L600.8 567.7L600.1 565.3L598.1 564.3L595.7 563.3L592.7 562.8L592.2 563.8L592.7 566.7L593.7 570.2L594.7 573.1L596.2 576.0L595.2 579.0L592.7 580.9L591.3 583.4L589.3 585.8L588.8 589.7L588.3 593.7L587.8 597.6L586.9 601.5L585.9 605.4L587.4 592.7L586.7 598.0L584.7 600.7L582.7 595.3L582.1 590.0L582.1 594.3L581.4 592.1L580.1 588.1L578.7 584.7L578.1 581.4L577.4 577.4L576.7 572.0L578.1 568.0L580.1 565.4L582.7 560.7L581.4 557.4L577.4 559.4L572.0 561.4L566.7 561.4L564.7 558.7L558.7 559.4L552.0 558.0L545.4 556.0L540.0 553.4L538.0 552.0L540.0 556.0L545.4 558.7L552.0 560.0L558.7 562.7L559.4 568.0L558.7 573.4L556.0 576.1L550.7 578.1L546.7 577.4L545.4 576.7L546.7 581.4L547.4 586.7L545.4 590.7L540.0 592.1L530.7 591.4L528.7 590.7L521.3 592.0L514.7 591.3L508.0 592.0L503.3 592.0L503.3 592.7L508.0 595.3L512.7 598.7L516.0 601.3L509.3 603.3L514.7 604.7L520.0 604.0L523.3 603.3L522.7 605.3L521.3 607.3L524.0 611.3L526.7 616.7L528.0 621.4L526.7 624.0L522.0 625.4L521.3 628.0L524.7 628.0L527.4 626.7L529.4 630.0L531.4 635.4L532.0 640.7L531.4 646.0L528.7 648.7L525.4 650.0L522.7 652.0L526.0 654.0L527.9 654.6L527.8 654.0L530.0 652.0L532.0 654.0L530.9 655.6L533.4 658.0L534.7 662.0L535.4 667.4L536.0 671.4L538.7 674.1L544.0 675.4L550.7 675.4L557.4 675.4L562.7 675.4L568.0 676.7L572.0 680.7L574.7 684.1L575.9 680.6L573.4 679.4L572.0 675.4L576.7 674.7L578.1 678.1L576.2 680.6L576.7 684.0L576.9 684.3L576.7 683.4L582.7 682.7L584.7 685.4L580.1 687.1L578.6 686.5L578.7 686.7L582.7 692.7L586.7 697.3L590.7 701.3L593.4 704.7L596.1 706.0L598.7 709.4L601.4 711.4L605.4 710.0L608.1 708.7L610.7 706.0L613.4 704.0L614.7 700.0L613.4 694.7L616.1 692.7L616.7 688.0L614.7 685.3L610.7 684.0L610.1 682.8L608.7 685.4L605.4 686.1L603.4 682.1L605.4 679.4L608.7 679.1L609.0 679.7L610.1 678.7L612.1 675.4L615.4 673.4L620.1 671.4L625.4 670.1L630.1 669.4L634.1 667.4L638.1 664.0L639.8 659.4L639.8 654.0L637.4 649.4L633.4 646.0L628.8 644.7L624.1 644.0L620.1 641.4L618.1 636.7L618.1 631.4L619.4 626.0L622.7 621.4L628.1 617.4L633.4 614.7L638.8 613.3L644.1 612.7L646.8 612.7L648.8 618.0L650.8 621.8L654.8 620.0L658.1 617.4L659.4 614.0L658.4 610.0L656.9 605.4L655.4 601.5L653.9 598.6L652.7 595.6L652.3 591.7L652.0 587.8L651.0 583.9L650.5 580.0L649.5 576.0L648.1 572.1L646.6 568.2L646.4 564.3L647.6 560.4L649.5 556.4L651.5 553.0L653.0 549.6L654.4 547.6L652.0 545.2L648.6 542.2L645.1 540.3L640.7 539.3L636.3 539.3L633.4 536.9L630.0 534.4L625.5 533.4L621.1 534.1L617.2 535.9L613.8 538.3L609.4 542.2L604.5 546.2L599.6 550.1L594.7 553.5L589.8 556.0L587.3 557.9L587.4 558.0L588.1 561.4L588.8 561.8ZM576.1 585.4L572.0 586.7L568.0 587.4L569.4 585.4L572.0 583.4L574.7 582.7L577.4 581.4L578.7 584.7ZM578.7 593.7L579.0 596.0L571.4 596.7L570.7 594.0ZM539.8 662.7L540.7 664.7L539.4 668.7L537.8 667.4L538.0 664.7ZM533.1 677.4L532.0 673.4L530.4 668.7L529.1 667.4L530.0 672.1L531.8 676.7ZM528.7 679.7L526.7 682.1L528.0 683.7L530.0 680.7ZM582.7 699.3L587.4 700.0L586.7 698.7L581.4 696.7L574.7 694.0L568.0 692.7L569.4 694.0L576.1 696.7Z" fill="none" fill-rule="evenodd" stroke="rgba(96,100,106,0.55)" stroke-width="0.9" stroke-linejoin="round"/>
<path d="M612.7 722.0L616.1 723.4L620.1 721.4L622.7 717.4L626.1 713.4L629.4 710.7L633.4 710.0L638.1 711.4L642.8 713.4L646.8 713.4L648.4 711.4L647.4 706.7L644.8 703.3L640.1 701.3L633.4 701.3L628.1 701.3L625.4 702.0L624.7 696.7L623.4 693.3L620.1 696.0L616.7 698.7L616.1 702.7L617.4 706.7L620.1 708.7L616.1 710.0L612.1 712.7L611.0 715.0L610.7 718.7ZM618.1 704.7L618.1 701.3L621.4 700.0L624.1 702.7L623.4 706.0L620.1 706.7ZM560.7 706.7L557.4 708.7L559.4 712.7L562.7 712.0L563.8 708.7ZM554.0 712.0L549.4 710.0L544.7 711.4L546.7 715.4L550.7 716.7L554.7 715.0ZM607.8 715.8L604.1 714.0L600.7 715.0L602.7 719.0L606.7 718.7ZM557.4 718.0L554.7 719.4L555.0 721.6L556.7 722.7L558.7 720.7ZM521.3 743.4L526.7 746.0L533.4 748.7L538.7 752.0L542.7 756.1L548.0 760.1L552.7 763.4L556.0 765.4L559.4 766.1L558.7 762.1L557.4 760.1L561.4 758.1L566.7 756.7L572.0 756.1L577.4 757.4L582.7 758.7L586.7 758.1L588.0 755.9L587.9 755.9L587.9 755.9L587.8 755.9L587.8 755.9L587.8 755.8L587.7 755.8L587.7 755.8L587.6 755.7L587.6 755.7L587.6 755.6L587.6 755.6L587.6 755.5L586.9 752.1L586.9 752.1L586.9 752.0L586.9 752.0L586.9 751.9L587.0 751.0L586.7 751.0L585.4 746.7L587.3 746.4L586.9 744.2L582.9 736.2L582.9 736.2L582.9 736.1L582.9 736.1L582.2 731.6L580.2 728.3L580.2 728.2L578.2 724.2L578.2 724.2L578.2 724.1L578.2 724.1L578.2 724.0L578.2 724.0L578.2 723.9L578.2 723.9L578.2 723.8L574.7 722.7L570.0 720.0L569.4 724.0L566.7 726.7L562.7 728.0L563.4 731.4L558.7 729.4L553.4 726.0L549.4 722.7L545.4 718.0L541.4 714.7L536.0 712.0L529.4 711.4L524.0 712.7L518.7 715.4L516.7 720.0L516.0 726.7L511.3 729.4L516.0 727.0L520.0 728.0L525.4 730.7L521.3 732.7L520.0 734.7L516.0 734.0L512.7 735.4L512.2 734.8L512.7 736.0L516.0 740.0ZM588.7 754.7L590.1 757.4L592.1 762.7L593.4 766.7L595.4 770.1L598.1 770.7L598.5 768.7L598.1 764.1L597.4 758.7L598.1 753.4L599.4 749.4L602.1 745.4L605.4 741.4L608.7 737.4L612.1 733.4L614.7 730.7L614.1 726.7L610.7 722.7L605.4 720.0L599.4 718.7L598.1 715.4L594.7 717.4L592.1 715.4L588.1 711.4L585.4 712.7L582.7 711.4L578.1 712.0L575.4 714.7L578.1 718.7L578.6 723.5L578.7 723.5L578.7 723.5L578.8 723.5L578.8 723.5L578.9 723.5L578.9 723.5L579.0 723.5L579.0 723.6L579.1 723.6L579.1 723.6L579.1 723.7L579.2 723.7L579.2 723.8L581.2 727.7L583.2 731.1L583.2 731.2L583.2 731.2L583.2 731.3L583.2 731.3L583.9 735.8L587.9 743.8L587.9 743.8L587.9 743.9L587.9 743.9L588.3 746.2L589.4 746.0L592.1 748.0L590.7 751.4L588.1 751.1L588.0 752.0L588.6 754.9ZM510.7 730.7L510.9 731.4L511.3 729.4Z" fill="#8EC9FF" fill-rule="evenodd"/>
<path d="M575.8 752.8L570.3 742.8L563.9 747.3L567.7 755.5L575.4 753.3ZM594.7 762.0L593.2 766.1L593.4 766.7L595.3 770.0L598.2 770.1L598.5 768.7L598.1 764.1L597.8 762.2L595.6 761.6ZM556.1 764.8L556.2 765.4L559.4 766.1L558.7 762.1L558.6 761.9ZM542.4 721.5L538.7 724.2L536.6 731.5L544.6 734.0L550.9 723.9L550.4 723.6ZM536.5 712.5L530.7 716.9L530.8 718.8L538.7 724.2L542.4 721.5L541.9 715.1L541.4 714.7L537.5 712.7ZM601.1 733.5L593.3 739.6L592.9 739.6L583.7 729.8L583.7 729.2L589.1 725.4L599.6 729.9Z" fill="#ffffff" fill-opacity="0.045"/><path d="M580.4 751.6L575.8 752.8L570.3 742.8L571.6 739.6L578.8 738.6L580.6 751.4ZM621.7 700.3L624.1 702.7L623.4 706.0L621.8 706.3L627.1 711.0L631.9 707.0L630.0 701.3L628.1 701.3L625.4 702.0L625.2 700.7ZM619.5 700.1L619.3 700.8L620.8 700.2ZM595.3 770.0L595.4 770.1L598.1 770.7L598.2 770.1ZM561.1 746.8L563.9 747.3L570.3 742.8L571.6 739.6L566.4 733.2L557.2 737.5ZM600.8 715.2L602.7 719.0L606.7 718.7L607.8 715.8L604.1 714.0L600.9 714.9ZM603.6 722.7L607.9 721.3L605.4 720.0L600.6 719.0ZM600.6 719.0L599.4 718.7L599.0 717.6L594.8 717.3L594.7 717.4L594.6 717.3L590.4 717.1L590.2 717.3L589.1 725.4L599.6 729.9L603.6 722.7ZM524.6 730.1L524.6 730.3L525.4 730.7L524.1 731.3L522.1 736.3L530.1 743.3L533.3 743.9L535.2 741.3L536.3 731.7ZM550.5 711.2L552.0 716.2L554.7 715.0L554.0 712.0L550.8 710.6ZM558.6 711.1L559.4 712.7L562.4 712.1ZM556.3 722.3L558.1 719.5L557.4 718.0L554.7 719.4L555.0 721.6L556.1 722.3ZM542.4 721.5L550.4 723.6L549.4 722.7L545.4 718.0L541.9 715.1ZM550.5 711.2L545.6 713.2L546.7 715.4L550.7 716.7L552.0 716.2Z" fill="#ffffff" fill-opacity="0.09"/><path d="M580.6 751.4L580.4 751.6L583.8 758.5L586.7 758.1L588.0 755.9L587.9 755.9L587.9 755.9L587.8 755.9L587.8 755.9L587.8 755.8L587.7 755.8L587.7 755.8L587.6 755.7L587.6 755.7L587.6 755.6L587.6 755.6L587.6 755.5L586.9 752.1L586.9 752.1L586.9 752.0L586.9 752.0L586.9 751.9L587.0 751.0L586.7 751.0L586.3 749.6ZM590.9 751.1L590.8 751.0L590.7 751.4L588.1 751.1L588.0 752.0L588.6 754.9L588.7 754.7L590.1 757.4L590.1 757.4ZM555.2 737.0L557.2 737.5L566.4 733.2L567.1 728.1L566.7 727.4L565.8 727.0L562.7 728.0L563.4 731.4L558.7 729.4L553.5 726.1ZM556.3 722.3L556.1 722.3L556.7 722.7L556.8 722.6ZM562.4 712.1L562.7 712.0L563.8 708.7L560.7 706.7L557.4 708.7L558.6 711.1ZM536.5 712.5L537.5 712.7L536.3 712.1ZM642.4 713.2L642.8 713.4L646.8 713.4L648.4 711.4L648.4 711.3ZM530.1 743.3L526.7 746.0L526.7 746.0L533.4 748.7L535.2 749.8L533.3 743.9ZM550.2 751.5L549.0 749.6L546.2 748.4L535.5 750.0L538.7 752.0L542.7 756.1L544.7 757.6ZM600.3 746.8L597.7 746.4L591.4 751.0L597.9 754.8L598.1 753.4L599.4 749.4L600.7 747.5ZM618.2 715.8L615.3 713.4L610.9 715.7L610.7 718.7L612.7 722.0L616.1 723.4L617.3 722.8ZM614.1 726.9L614.1 726.7L610.7 722.7L608.8 721.7Z" fill="#0a6fe0" fill-opacity="0.05"/><path d="M601.1 733.5L593.3 739.6L597.7 746.4L600.3 746.8L607.0 737.1ZM546.6 736.3L552.7 738.0L549.0 749.6L546.2 748.4L543.0 742.0ZM517.8 741.2L521.3 743.4L526.7 746.0L530.1 743.3L522.1 736.3L517.7 739.2ZM536.3 731.7L524.6 730.1L523.8 728.1L524.2 725.5L530.8 718.8L538.7 724.2L536.6 731.5ZM524.2 725.5L518.8 715.4L518.7 715.4L516.7 720.0L516.0 726.7L523.8 728.1ZM576.4 715.6L578.3 714.9L580.0 711.8L578.1 712.0L575.4 714.7L575.9 715.4ZM618.9 697.3L619.1 696.8L618.6 697.2ZM618.2 715.8L617.3 722.8L620.1 721.4L622.7 717.4L623.4 716.5ZM544.7 757.6L548.0 760.1L552.7 763.4L555.2 764.9L556.1 764.8L558.6 761.9L557.4 760.1L557.6 760.0L553.7 752.8L550.2 751.5Z" fill="#0a6fe0" fill-opacity="0.1"/><path d="M530.8 718.8L530.7 716.9M530.8 718.8L529.0 720.3L528.2 722.8L526.0 723.9L524.2 725.5M530.7 716.9L529.4 715.3L527.2 714.7L526.3 712.7M524.2 725.5L523.4 723.6L521.5 722.4L521.8 719.8L520.2 718.3L518.8 716.8L518.7 716.0M522.1 713.9L522.4 714.0L524.7 714.5L526.3 712.7M530.8 718.8L532.8 720.2L535.2 720.8L536.3 723.5L538.7 724.2M530.7 716.9L532.1 714.7L534.7 714.2L536.5 712.5M541.9 715.4L542.0 716.9L540.9 719.3L542.4 721.5M536.5 712.5L538.4 713.6L538.7 713.6M542.4 721.5L541.2 723.7L538.7 724.2M558.4 762.0L556.1 764.8M556.1 764.8L556.1 765.2M567.1 756.5L567.7 755.5M567.7 755.5L569.7 755.1L571.6 754.6L573.5 754.0L575.4 753.3M576.5 757.0L576.3 755.3L575.4 753.3M567.7 755.5L566.7 753.5L566.5 751.0L565.5 749.0L563.9 747.3M570.3 742.8L571.7 744.7L572.4 746.9L574.1 748.6L574.4 751.0L575.8 752.8M570.3 742.8L568.3 744.5L566.2 746.0L563.9 747.3M575.4 753.3L575.8 752.8M644.2 713.2L644.9 712.7L647.2 711.6L648.2 711.3M556.1 764.8L555.3 764.7M571.6 739.6L569.9 738.3L569.3 736.2L567.2 735.2L566.4 733.2M571.6 739.6L570.3 742.8M563.9 747.3L561.1 746.8M566.4 733.2L565.0 735.0L562.9 735.3L560.8 735.5L559.2 737.0L557.2 737.5M557.2 737.5L558.3 739.2L559.7 740.9L559.7 743.1L560.2 745.0L561.1 746.8M557.6 759.8L556.6 758.3L555.3 756.6L554.2 754.9L553.7 752.8M561.1 746.8L559.0 748.0L556.8 749.0L555.3 751.0L553.7 752.8M544.2 757.0L546.2 756.1L548.2 755.2L548.8 753.0L550.2 751.5M553.7 752.8L550.2 751.5M594.0 767.3L594.1 766.2L593.1 763.7L594.7 762.0M594.7 762.0L595.6 761.6M597.6 761.4L595.6 761.6M588.3 743.7L588.0 743.6M585.9 742.6L584.6 741.9L583.0 740.5L581.0 739.7L579.6 738.0M588.3 743.7L590.0 742.5L591.4 741.0L592.9 739.6M579.6 738.0L582.1 736.7L581.5 733.9L582.2 733.4M583.6 732.5L583.8 732.4L583.7 729.8M592.9 739.6L591.4 737.9L589.8 736.4L588.1 734.9L587.0 732.9L585.7 731.0L583.7 729.8M571.6 739.6L574.0 739.1L576.2 737.6L578.8 738.6M578.2 725.9L575.8 725.7L574.0 727.8L571.9 729.2L569.2 727.2L567.1 728.1M578.2 725.9L579.6 727.6L579.7 727.6M581.6 728.0L581.9 728.1L583.7 729.2M579.6 738.0L578.8 738.6M566.4 733.2L567.0 730.7L567.1 728.1M583.7 729.8L583.7 729.2M622.9 716.9L622.4 717.0L620.3 716.0L618.2 715.8M627.4 712.1L627.1 711.0M614.7 711.2L615.3 713.4M617.0 704.9L617.9 704.0M627.1 711.0L625.4 709.5L623.2 708.4L621.8 706.5M618.2 715.8L615.3 713.4M580.6 751.4L583.1 750.6L585.3 749.0L585.9 749.0M580.6 751.4L580.4 751.6M580.4 751.6L581.0 754.0L583.4 755.4L585.0 757.3L584.9 758.2M590.6 751.6L589.7 753.4L590.2 755.9L590.1 757.0M588.3 743.7L588.6 745.9M578.8 738.6L578.2 740.8L580.2 742.7L579.6 745.0L579.3 747.2L580.4 749.2L580.6 751.4M575.8 752.8L578.3 752.9L580.4 751.6M591.4 751.0L593.2 749.0L595.9 748.4L597.7 746.4M591.4 751.0L591.1 751.0M597.7 746.4L596.1 745.0L596.6 742.3L594.4 741.3L593.3 739.6M592.9 739.6L593.3 739.6M594.7 762.0L593.4 760.4L591.3 760.1M591.4 751.0L593.1 752.1L594.4 753.9L596.7 753.9L597.7 754.6M597.4 757.5L595.7 759.1L595.6 761.6M578.2 725.9L577.7 723.9M576.6 716.1L576.4 715.6M566.7 727.4L567.1 728.1M566.7 727.4L567.5 726.2M576.4 715.6L576.1 715.4M590.2 717.3L588.1 717.4L586.3 716.3L584.4 715.1L582.4 715.2L580.3 715.2L578.3 714.9M590.2 717.3L590.5 719.4L588.0 721.1L588.7 723.3L589.1 725.4M589.1 725.4L587.4 726.8L585.3 727.7L583.7 729.2M576.4 715.6L578.3 714.9M631.9 707.0L631.5 705.0L631.0 703.1L630.1 701.5M631.9 707.0L634.2 709.5L637.5 708.9M637.5 708.9L638.8 706.7L639.6 704.2L641.1 702.1M641.1 702.1L640.8 701.8M627.1 711.0L628.0 708.8L630.7 708.7L631.9 707.0M619.4 700.6L619.5 700.1M619.5 700.1L619.9 700.4M623.0 701.4L623.6 701.3L625.0 700.8M639.1 711.6L639.0 710.9L637.5 708.9M641.2 702.0L641.1 702.1M619.5 700.1L618.9 697.3M618.9 697.3L618.9 697.2M550.5 711.2L550.7 710.8M550.5 711.2L550.8 713.2L552.1 714.9L552.2 715.8M559.2 711.8L560.3 712.3M558.1 720.0L557.4 720.6L556.3 722.2M545.7 713.0L546.0 712.5L547.9 710.9L550.5 711.2M542.4 721.5L544.6 722.1L546.5 723.3L548.9 723.1L549.9 723.4M566.7 727.4L566.1 727.1M553.0 726.0L553.5 728.0L553.5 730.3L553.6 732.6L554.8 734.7L555.2 737.0M557.2 737.5L555.2 737.0M536.5 712.5L536.4 712.4M526.3 712.7L526.4 712.3M516.2 726.8L517.1 726.6L519.4 726.7L521.5 727.7L523.8 728.1M513.5 736.6L515.4 736.9L516.6 738.9M523.8 728.1L524.6 730.1M524.6 730.1L524.6 730.1M522.7 732.2L521.7 733.8L522.1 736.3M522.1 736.3L519.8 737.6L517.7 739.2M517.7 739.2L516.6 738.9M524.2 725.5L523.8 728.1M515.7 739.3L516.6 738.9M526.1 745.5L526.3 745.3L528.4 744.7L530.1 743.3M517.8 740.9L517.7 739.2M530.1 743.3L528.1 742.3L526.7 740.7L524.4 740.2L524.1 737.2L522.1 736.3M555.2 737.0L552.7 738.0M550.2 751.5L549.0 749.6M552.7 738.0L552.0 739.9L552.0 742.1L549.9 743.5L550.9 746.0L550.1 747.8L549.0 749.6M597.7 746.4L600.3 746.8M600.3 746.8L600.6 747.3M590.2 717.3L590.4 717.1M578.3 714.9L579.6 713.2L579.6 712.0M590.4 717.1L590.7 714.5L590.7 714.3M615.3 713.4L612.5 714.4L611.2 715.4M590.4 717.1L592.6 717.7L593.9 717.0M596.1 716.8L597.3 717.3L598.7 717.5M601.0 715.2L601.0 715.1M607.0 737.1L604.9 736.1L603.4 734.1L601.1 733.5M607.0 737.1L608.5 737.3M613.0 725.7L611.0 725.0L609.9 722.7L609.4 722.2M599.6 729.9L601.1 733.5M599.6 729.9L601.3 728.5L602.0 726.5L601.5 723.9L603.6 722.7M603.6 722.7L605.6 721.2L607.2 721.2M600.3 746.8L601.6 744.8L603.3 743.1L603.7 740.6L604.9 738.6L607.0 737.1M593.3 739.6L595.1 737.8L597.0 736.2L598.1 733.7L601.1 733.5M618.2 715.8L617.8 718.1L618.2 720.4L618.1 722.2M589.1 725.4L591.2 726.3L593.6 726.6L595.5 727.7L597.3 729.4L599.6 729.9M600.9 719.2L600.9 719.3L602.9 720.5L603.6 722.7M618.9 697.3L618.8 697.3M549.0 749.6L546.2 748.4M546.2 748.4L543.9 748.3L542.0 750.4L539.6 748.9L537.5 750.0L535.9 750.0M530.1 743.3L533.3 743.9M534.6 749.2L533.8 748.2L533.0 746.2L533.3 743.9M543.0 742.0L540.4 741.5L537.7 742.3L535.2 741.3M543.0 742.0L544.2 740.2L545.5 738.3L546.6 736.3M544.6 734.0L542.7 733.1L540.5 733.1L539.1 730.6L536.6 731.5M544.6 734.0L546.6 736.3M535.2 741.3L536.4 739.0L536.2 736.5L535.7 734.0L536.3 731.7M536.6 731.5L536.3 731.7M546.2 748.4L546.2 745.7L543.5 744.4L543.0 742.0M533.3 743.9L535.2 741.3M552.7 738.0L550.8 737.0L548.7 736.6L546.6 736.3M550.7 724.0L549.6 725.2L548.9 727.1L549.7 730.0L547.4 730.9L545.4 732.1L544.6 734.0M538.7 724.2L537.9 726.6L536.7 728.9L536.6 731.5M524.6 730.1L527.0 730.0L529.2 731.9L531.5 732.0L534.0 731.5L536.3 731.7" fill="none" stroke="rgba(100,100,100,0.66)" stroke-width="0.9" stroke-linejoin="round"/>
<path d="M612.7 722.0L616.1 723.4L620.1 721.4L622.7 717.4L626.1 713.4L629.4 710.7L633.4 710.0L638.1 711.4L642.8 713.4L646.8 713.4L648.4 711.4L647.4 706.7L644.8 703.3L640.1 701.3L633.4 701.3L628.1 701.3L625.4 702.0L624.7 696.7L623.4 693.3L620.1 696.0L616.7 698.7L616.1 702.7L617.4 706.7L620.1 708.7L616.1 710.0L612.1 712.7L611.0 715.0L610.7 718.7ZM618.1 704.7L618.1 701.3L621.4 700.0L624.1 702.7L623.4 706.0L620.1 706.7ZM560.7 706.7L557.4 708.7L559.4 712.7L562.7 712.0L563.8 708.7ZM554.0 712.0L549.4 710.0L544.7 711.4L546.7 715.4L550.7 716.7L554.7 715.0ZM607.8 715.8L604.1 714.0L600.7 715.0L602.7 719.0L606.7 718.7ZM557.4 718.0L554.7 719.4L555.0 721.6L556.7 722.7L558.7 720.7ZM521.3 743.4L526.7 746.0L533.4 748.7L538.7 752.0L542.7 756.1L548.0 760.1L552.7 763.4L556.0 765.4L559.4 766.1L558.7 762.1L557.4 760.1L561.4 758.1L566.7 756.7L572.0 756.1L577.4 757.4L582.7 758.7L586.7 758.1L588.0 755.9L587.9 755.9L587.9 755.9L587.8 755.9L587.8 755.9L587.8 755.8L587.7 755.8L587.7 755.8L587.6 755.7L587.6 755.7L587.6 755.6L587.6 755.6L587.6 755.5L586.9 752.1L586.9 752.1L586.9 752.0L586.9 752.0L586.9 751.9L587.0 751.0L586.7 751.0L585.4 746.7L587.3 746.4L586.9 744.2L582.9 736.2L582.9 736.2L582.9 736.1L582.9 736.1L582.2 731.6L580.2 728.3L580.2 728.2L578.2 724.2L578.2 724.2L578.2 724.1L578.2 724.1L578.2 724.0L578.2 724.0L578.2 723.9L578.2 723.9L578.2 723.8L574.7 722.7L570.0 720.0L569.4 724.0L566.7 726.7L562.7 728.0L563.4 731.4L558.7 729.4L553.4 726.0L549.4 722.7L545.4 718.0L541.4 714.7L536.0 712.0L529.4 711.4L524.0 712.7L518.7 715.4L516.7 720.0L516.0 726.7L511.3 729.4L516.0 727.0L520.0 728.0L525.4 730.7L521.3 732.7L520.0 734.7L516.0 734.0L512.7 735.4L512.2 734.8L512.7 736.0L516.0 740.0ZM588.7 754.7L590.1 757.4L592.1 762.7L593.4 766.7L595.4 770.1L598.1 770.7L598.5 768.7L598.1 764.1L597.4 758.7L598.1 753.4L599.4 749.4L602.1 745.4L605.4 741.4L608.7 737.4L612.1 733.4L614.7 730.7L614.1 726.7L610.7 722.7L605.4 720.0L599.4 718.7L598.1 715.4L594.7 717.4L592.1 715.4L588.1 711.4L585.4 712.7L582.7 711.4L578.1 712.0L575.4 714.7L578.1 718.7L578.6 723.5L578.7 723.5L578.7 723.5L578.8 723.5L578.8 723.5L578.9 723.5L578.9 723.5L579.0 723.5L579.0 723.6L579.1 723.6L579.1 723.6L579.1 723.7L579.2 723.7L579.2 723.8L581.2 727.7L583.2 731.1L583.2 731.2L583.2 731.2L583.2 731.3L583.2 731.3L583.9 735.8L587.9 743.8L587.9 743.8L587.9 743.9L587.9 743.9L588.3 746.2L589.4 746.0L592.1 748.0L590.7 751.4L588.1 751.1L588.0 752.0L588.6 754.9ZM510.7 730.7L510.9 731.4L511.3 729.4Z" fill="none" fill-rule="evenodd" stroke="rgba(96,100,106,0.55)" stroke-width="0.9" stroke-linejoin="round"/>
<path d="M839.2 660.3L837.4 662.0L836.7 666.0L834.8 671.3L833.5 677.2L833.3 683.1L832.8 689.0L831.3 690.4L832.8 692.4L835.7 695.3L839.2 697.3L843.1 697.8L849.0 700.7L854.8 703.7L860.7 705.8L865.1 707.6L867.6 705.1L869.5 701.7L871.0 696.3L872.5 691.9L872.0 688.0L872.3 685.1L870.0 683.6L865.1 681.6L860.7 678.7L857.8 675.3L856.3 673.3L851.9 671.8L847.0 668.9L843.1 666.0L841.1 662.0Z" fill="#A9D6FF" fill-rule="evenodd" stroke="rgba(96,100,106,0.55)" stroke-width="0.9" stroke-linejoin="round"/>
<path d="M833.5 682.8L838.2 680.6L843.1 682.1L848.0 678.2L845.5 674.3L841.1 672.3L839.2 669.4L837.7 665.5" fill="none" stroke="rgba(100,100,100,0.66)" stroke-width="0.9"/>
<path d="M845.5 674.3L846.0 669.4" fill="none" stroke="rgba(100,100,100,0.66)" stroke-width="0.9"/>
<path d="M839.2 669.4L838.7 680.2" fill="none" stroke="rgba(100,100,100,0.66)" stroke-width="0.9"/>
<path d="M848.0 678.2L850.9 682.1L850.0 685.1L852.9 684.6L860.2 679.0" fill="none" stroke="rgba(100,100,100,0.66)" stroke-width="0.9"/>
<path d="M852.9 684.6L855.8 685.5L857.8 690.0L863.7 690.4L864.6 686.0L865.1 682.1" fill="none" stroke="rgba(100,100,100,0.66)" stroke-width="0.9"/>
<path d="M863.7 690.4L867.6 691.9L872.0 690.4" fill="none" stroke="rgba(100,100,100,0.66)" stroke-width="0.9"/>
<path d="M850.0 685.1L843.1 690.0L841.6 694.8L842.6 697.8" fill="none" stroke="rgba(100,100,100,0.66)" stroke-width="0.9"/>
<path d="M857.8 690.0L859.7 692.9L860.2 698.8L860.7 705.8" fill="none" stroke="rgba(100,100,100,0.66)" stroke-width="0.9"/>
<circle cx="575.3" cy="523" r="0.8" fill="#6d8fb3"/><circle cx="874.8" cy="656.9" r="0.7" fill="#6d8fb3"/>
</svg>
<div class="abs" id="filters" style="left:1216px;top:156px;width:252px;height:661px;background:#fff;border-left:1px solid #b3b0ad;box-sizing:border-box"></div>
<div class="abs" style="left:1217px;top:265px;width:251px;height:1px;background:#c8c6c4"></div>
<div class="abs" style="left:1462px;top:276px;width:6px;height:541px;background:#c2c1c0"></div>
<span class="t" style="left:1263.40px;top:171px;font-size:20px;line-height:26px;color:#252423;-webkit-text-stroke:0.6px currentColor;transform:scaleX(0.9773);">Filters</span>
<div class="box" style="left:1228px;top:221px;width:225px;height:39px;border-color:#c8c6c4;border-radius:3px"></div>
<span class="t" style="left:1273.40px;top:230px;font-size:16px;line-height:21px;color:#252423;transform:scaleX(0.9391);">Search</span>
<span class="t" style="left:1228.40px;top:287px;font-size:15px;line-height:20px;color:#252423;transform:scaleX(0.9799);">Filters on this page</span>
<div class="box" style="left:1228px;top:318px;width:224px;height:57px;border-color:#d2d0ce"></div>
<span class="t" style="left:1273.20px;top:338px;font-size:15px;line-height:20px;color:#252423;transform:scaleX(0.9952);">Add data fields here</span>
<span class="t" style="left:1228.40px;top:409px;font-size:15px;line-height:20px;color:#252423;transform:scaleX(0.9692);">Filters on all pages</span>
<div class="box" style="left:1228px;top:440px;width:224px;height:390px;border-color:#d2d0ce"></div>
<span class="t" style="left:1239.40px;top:448px;font-size:14px;line-height:18px;color:#252423;transform:scaleX(0.9028);">FEAT_KODE</span>
<span class="t" style="left:1239.40px;top:471px;font-size:14px;line-height:18px;color:#252423;transform:scaleX(1.0084);">is (All)</span>
<span class="t" style="left:1239.40px;top:502px;font-size:15px;line-height:20px;color:#252423;transform:scaleX(0.9867);">Filter type</span>
<div class="box" style="left:1239px;top:526px;width:206px;height:31px"></div>
<span class="t" style="left:1248.00px;top:532px;font-size:15px;line-height:20px;color:#252423;transform:scaleX(1.0029);">Advanced filtering</span>
<span class="t" style="left:1239.40px;top:568px;font-size:15px;line-height:20px;color:#252423;transform:scaleX(0.9778);">Show items when the value:</span>
<div class="box" style="left:1239px;top:597px;width:206px;height:31px"></div>
<span class="t" style="left:1248.00px;top:603px;font-size:15px;line-height:20px;color:#252423;transform:scaleX(0.9539);">is less than</span>
<div class="box" style="left:1239px;top:633px;width:206px;height:32px"></div>
<span class="t" style="left:1264.20px;top:683px;font-size:15px;line-height:20px;color:#252423;transform:scaleX(0.9667);">And</span>
<span class="t" style="left:1326.00px;top:683px;font-size:15px;line-height:20px;color:#252423;transform:scaleX(0.9468);">Or</span>
<div class="box" style="left:1239px;top:717px;width:206px;height:31px"></div>
<div class="box" style="left:1239px;top:753px;width:206px;height:31px"></div>
<span class="t" style="left:1373.40px;top:795px;font-size:15px;line-height:20px;color:#a19f9d;transform:scaleX(1.0191);">Apply filter</span>
<svg width="1499" height="817" viewBox="0 0 1499 817">
<path d="M1232.800 175.800h18.400l-7 8.800v8h-4.400v-8z" fill="none" stroke="#323130" stroke-width="1.400" stroke-linejoin="miter"/>
<path d="M1403 186a8 7 0 0 1 14.600 0" fill="none" stroke="#605e5c" stroke-width="1.100"/><circle cx="1410.300" cy="186.600" r="2.300" fill="none" stroke="#605e5c" stroke-width="1.100"/>
<path d="M1444.600 179.600l7.200 6.800l-7.200 6.800" fill="none" stroke="#323130" stroke-width="1.300"/>
<circle cx="1254" cy="237.600" r="5.600" fill="none" stroke="#323130" stroke-width="1.300"/><path d="M1250 241.800l-8.600 8" stroke="#323130" stroke-width="1.300" fill="none"/>
<g fill="#323130"><circle cx="1433.600" cy="300.600" r="0.900"/><circle cx="1439" cy="300.600" r="0.900"/><circle cx="1444.400" cy="300.600" r="0.900"/>
<circle cx="1433.600" cy="422.600" r="0.900"/><circle cx="1439" cy="422.600" r="0.900"/><circle cx="1444.400" cy="422.600" r="0.900"/></g>
<circle cx="1316.600" cy="511.600" r="6.600" fill="none" stroke="#323130" stroke-width="1"/><path d="M1316.600 510.200v5" stroke="#323130" stroke-width="1.200"/><circle cx="1316.600" cy="508" r="0.800" fill="#323130"/>
<g fill="none" stroke="#323130" stroke-width="1.300"><path d="M1426.400 537.600l5.800 5.800l5.800 -5.800"/><path d="M1426.400 608.600l5.800 5.800l5.800 -5.800"/><path d="M1426.400 728.600l5.800 5.800l5.800 -5.800"/></g>
<circle cx="1246.500" cy="691.700" r="6.900" fill="#fff" stroke="#323130" stroke-width="1.100"/><circle cx="1246.500" cy="691.700" r="4.300" fill="#252423"/>
<circle cx="1308.200" cy="691.700" r="6.900" fill="#fff" stroke="#323130" stroke-width="1.100"/>
</svg>
<div class="abs" style="left:1468px;top:156px;width:31px;height:661px;background:#f3f2f1;overflow:hidden"></div>
<div class="abs" style="left:1468px;top:418px;width:31px;height:1px;background:#e1dfdd"></div>
<div class="abs" style="left:1469px;top:407px;width:30px;height:1px;background:repeating-linear-gradient(90deg,#d2d0ce 0,#d2d0ce 3px,transparent 3px,transparent 5px)"></div>
<div class="abs" style="left:1468px;top:150px;width:31px;height:667px;overflow:hidden">
<span class="t" style="left:16.60px;top:22px;font-size:20px;line-height:26px;color:#252423;-webkit-text-stroke:0.6px currentColor;transform:scaleX(1.0776);">Visualizations</span>
<div class="abs" style="left:16px;top:310px;width:20px;height:4px;background:#f2c811;border-radius:2px 0 0 2px"></div>
<span class="t" style="left:16.40px;top:321px;font-size:15px;line-height:20px;color:#252423;transform:scaleX(0.9296);">Values</span>
<div class="abs" style="left:6px;top:349px;width:40px;height:33px;background:#fff;border:1px dashed #c8c6c4;border-radius:2px;box-sizing:border-box"></div>
<span class="t" style="left:20.40px;top:356px;font-size:15px;line-height:20px;color:#252423;transform:scaleX(0.9937);">Add data fields here</span>
<span class="t" style="left:19.40px;top:399px;font-size:20px;line-height:26px;color:#252423;-webkit-text-stroke:0.6px currentColor;transform:scaleX(1.0444);">Drill through</span>
<span class="t" style="left:12.40px;top:445px;font-size:15px;line-height:20px;color:#252423;transform:scaleX(0.9907);">Cross-report</span>
<span class="t" style="left:23.40px;top:480px;font-size:15px;line-height:20px;color:#252423;transform:scaleX(1.0397);">Off</span>
<span class="t" style="left:12.40px;top:525px;font-size:15px;line-height:20px;color:#252423;transform:scaleX(0.9407);">Keep all filters</span>
<span class="t" style="left:23.40px;top:560px;font-size:15px;line-height:20px;color:#252423;transform:scaleX(0.9800);">On</span>
<div class="abs" style="left:6px;top:597px;width:40px;height:32px;background:#fff;border:1px dashed #c8c6c4;border-radius:2px;box-sizing:border-box"></div>
<span class="t" style="left:20.40px;top:604px;font-size:15px;line-height:20px;color:#252423;transform:scaleX(1.0445);">Add drill-through fields here</span>
<svg width="31" height="667" viewBox="1468 150 31 667">
<g fill="none" stroke="#3b3a39" stroke-width="1.300">
<path d="M1482.600 223.600v20h17"/><rect x="1482.600" y="225.600" width="6" height="5" /><rect x="1488.600" y="225.600" width="7" height="5" fill="#4a9be0" stroke="#2b7bc4"/>
<rect x="1482.600" y="234.600" width="8" height="5"/><rect x="1490.600" y="234.600" width="9" height="5" fill="#c8c6c4"/>
<path d="M1482.600 253.600v20h17"/><path d="M1482.600 268l8.600-9l4 4l4.600-4.600"/><path d="M1482.600 272l9-8.600l4 3l4-3.600" stroke="#2b7bc4"/>
<path d="M1482.600 283.600v20h17"/><path d="M1484.600 303.600v-12h5v12M1489.600 296v-8h5v15.600" /><rect x="1494.600" y="284.600" width="6" height="12" fill="#2b7bc4" stroke="#2b7bc4"/>
<circle cx="1493" cy="321.600" r="7.600"/><circle cx="1493" cy="321.600" r="10" stroke-dasharray="22 41" stroke-dashoffset="-20"/><path d="M1486 333.600h12M1492 331v2.600"/>
<rect x="1482.600" y="345.600" width="20" height="12"/><path d="M1482.600 360.600h18"/>
<path d="M1482.600 373.600v18h17M1482.600 378.600h13M1482.600 384.600h8"/><circle cx="1497" cy="378.600" r="2.200" fill="#4a9be0" stroke="#2b7bc4"/><circle cx="1491.600" cy="384.600" r="1.600"/>
</g>
<path d="M1487 319c1-3 4-4 6-3l-1 3l2 2l-3 4c-3-1-4-3-4-6z" fill="#2f9149"/><path d="M1496 317l4 1v6l-3 2l-2-3z" fill="#2f9149"/>
<path d="M1486.600 355.600l3.400-6l3.400 6z" fill="#3c9a4e"/><path d="M1494.600 349.600h7l-3.500 6z" fill="#e8413a"/>
<path d="M1495.600 430v22" stroke="#3b3a39" stroke-width="1.300" stroke-dasharray="3 2" fill="none"/>
</svg>
</div>
</body></html>
